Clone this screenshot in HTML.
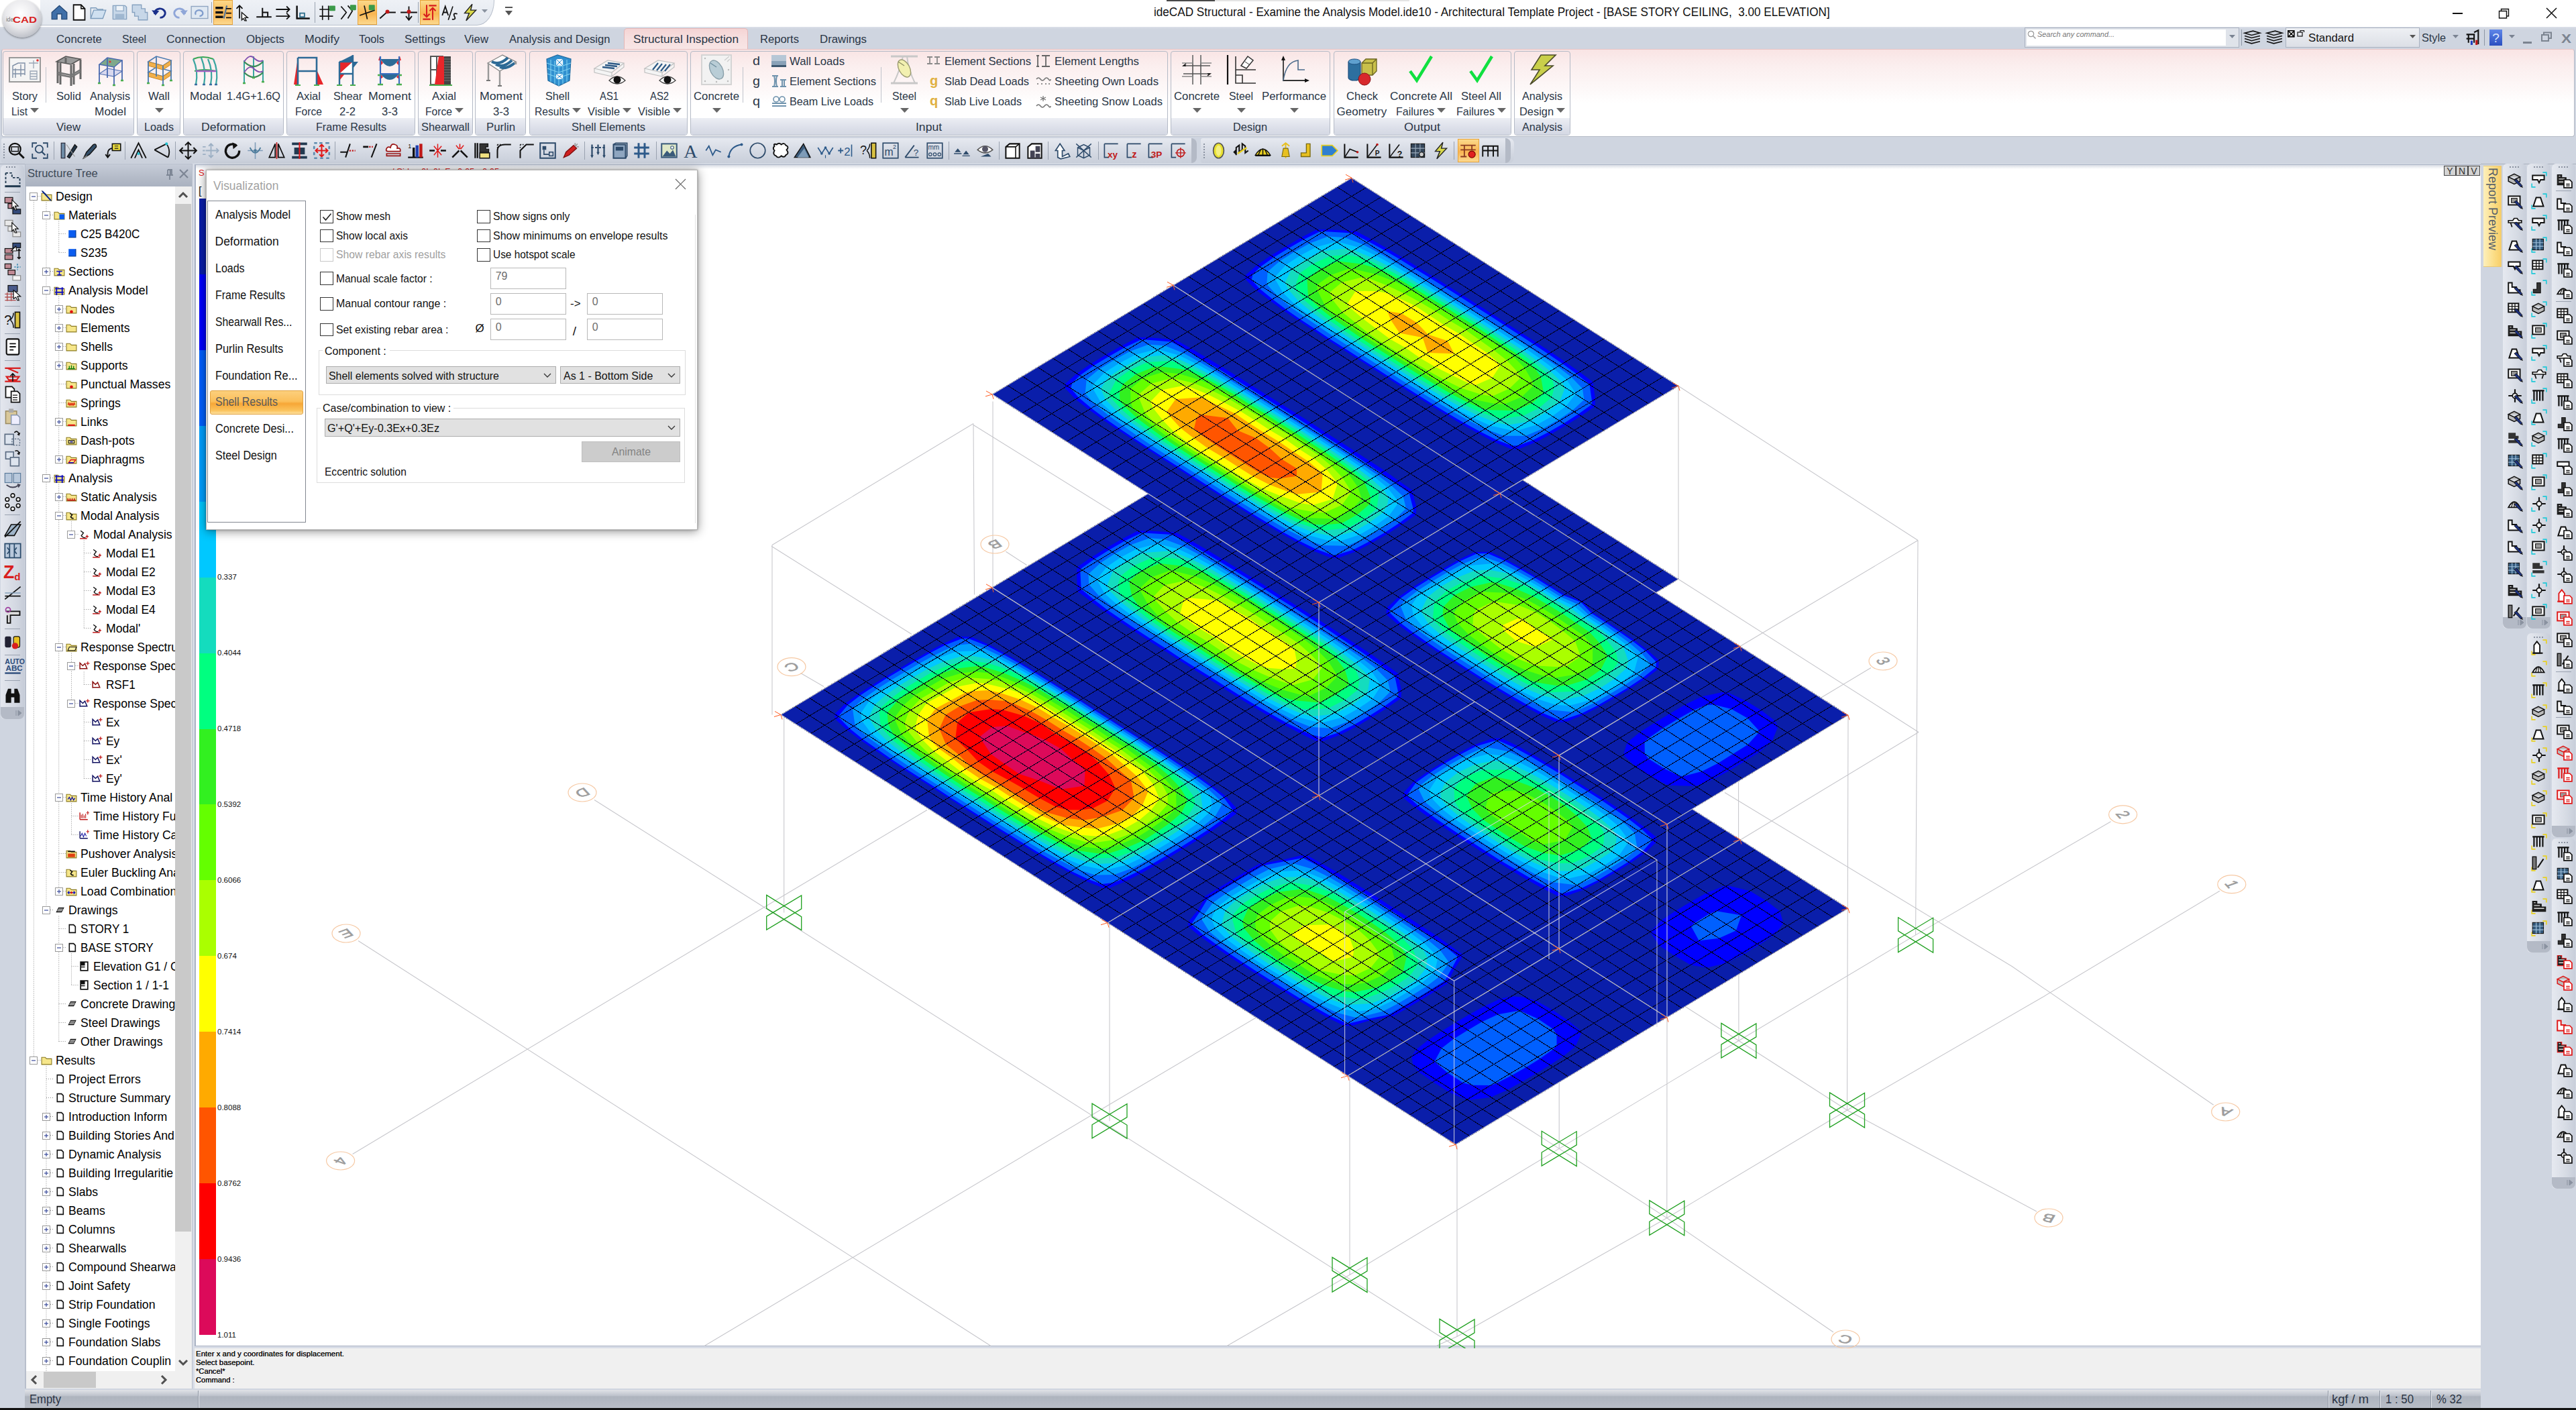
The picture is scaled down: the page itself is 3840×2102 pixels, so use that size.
<!DOCTYPE html><html><head><meta charset="utf-8"><title>ideCAD Structural</title><style>html,body{margin:0;padding:0;}body{width:3840px;height:2102px;position:relative;overflow:hidden;background:#cfd5e0;font-family:"Liberation Sans",sans-serif;}svg{overflow:visible;display:block}span{display:block}</style></head><body><div style="position:absolute;left:0px;top:0px;width:3840px;height:39.5px;background:#fff;"></div><div style="position:absolute;left:1739px;top:0px;width:72px;height:2px;background:#484848;"></div><div style="position:absolute;left:1811px;top:0px;width:290px;height:2px;background:#e4e4e4;"></div><div style="position:absolute;left:60px;top:0px;width:676px;height:37px;background:linear-gradient(#eef1f6,#e2e7ee);border-bottom:1px solid #b9c0cc;border-right:1px solid #b9c0cc;border-radius:0 0 26px 0/0 0 37px 0;"></div><svg style="position:absolute;left:75px;top:5px;" width="27" height="27" viewBox="0 0 24 24"><path d="M2 12 L12 3 L22 12 V21 H15 V14 H9 V21 H2 Z" fill="#3f6fa8" stroke="#244a78" stroke-width="1.2"/></svg><svg style="position:absolute;left:104px;top:5px;" width="27" height="27" viewBox="0 0 24 24"><path d="M5 2 H15 L20 7 V22 H5 Z" fill="#fff" stroke="#111" stroke-width="1.6"/><path d="M15 2 V7 H20" fill="none" stroke="#111" stroke-width="1.4"/></svg><svg style="position:absolute;left:133px;top:5px;" width="27" height="27" viewBox="0 0 24 24"><path d="M2 20 L6 9 H22 L18 20 Z" fill="#cfe0f0" stroke="#7c9cbc" stroke-width="1.2"/><path d="M2 20 V6 H9 L11 8 H18 V9" fill="none" stroke="#7c9cbc" stroke-width="1.2"/></svg><svg style="position:absolute;left:165px;top:5px;" width="27" height="27" viewBox="0 0 24 24"><path d="M3 3 H19 L21 5 V21 H3 Z" fill="#c7d7e8" stroke="#86a2c0" stroke-width="1.2"/><rect x="7" y="3" width="10" height="7" fill="#eef3f8" stroke="#86a2c0"/><rect x="6" y="14" width="12" height="7" fill="#9fb7d0"/></svg><svg style="position:absolute;left:195px;top:5px;" width="27" height="27" viewBox="0 0 24 24"><path d="M2 2 H14 V7 H19 V12 H22 V22 H10 V17 H5 V12 H2 Z" fill="#c7d7e8" stroke="#86a2c0" stroke-width="1.2"/></svg><svg style="position:absolute;left:225px;top:5px;" width="27" height="27" viewBox="0 0 24 24"><path d="M5 14 A7 6 0 1 1 12 19" fill="none" stroke="#1a2f8a" stroke-width="2.6"/><path d="M1 9 L6 16 L11 10 Z" fill="#1a2f8a"/></svg><svg style="position:absolute;left:254px;top:5px;" width="27" height="27" viewBox="0 0 24 24"><path d="M19 14 A7 6 0 1 0 12 19" fill="none" stroke="#8fa6d8" stroke-width="2.6"/><path d="M23 9 L18 16 L13 10 Z" fill="#8fa6d8"/></svg><svg style="position:absolute;left:284px;top:5px;" width="27" height="27" viewBox="0 0 24 24"><rect x="1" y="4" width="22" height="16" fill="#dfe8f2" stroke="#8ea4c0" stroke-width="1.2"/><path d="M7 15 A5 4 0 1 1 12 17" fill="none" stroke="#7f9ccc" stroke-width="2"/></svg><div style="position:absolute;left:315px;top:3px;width:1px;height:31px;background:#9aa3b0;"></div><div style="position:absolute;left:318px;top:0px;width:29px;height:37px;background:linear-gradient(#fbd98a,#f9b552 55%,#fcd98f);border:1px solid #e8a43c;box-sizing:border-box;"></div><div style="position:absolute;left:533px;top:0px;width:29px;height:37px;background:linear-gradient(#fbd98a,#f9b552 55%,#fcd98f);border:1px solid #e8a43c;box-sizing:border-box;"></div><div style="position:absolute;left:626px;top:0px;width:29px;height:37px;background:linear-gradient(#fbd98a,#f9b552 55%,#fcd98f);border:1px solid #e8a43c;box-sizing:border-box;"></div><div style="position:absolute;left:469px;top:3px;width:1px;height:31px;background:#9aa3b0;"></div><div style="position:absolute;left:623px;top:3px;width:1px;height:31px;background:#9aa3b0;"></div><svg style="position:absolute;left:319px;top:5px;" width="27" height="27" viewBox="0 0 24 24"><path d="M2 6 H12 M2 12 H12 M2 18 H12" stroke="#111" stroke-width="3"/><path d="M13 20 L17 3" stroke="#5a7a9a" stroke-width="2"/><path d="M16 7 H23 M16 13 H23 M16 19 H23" stroke="#111" stroke-width="1.6"/></svg><svg style="position:absolute;left:348px;top:5px;" width="27" height="27" viewBox="0 0 24 24"><path d="M8 3 V20 M4 7 L8 3 L12 7" fill="none" stroke="#111" stroke-width="1.6"/><path d="M11 12 L19 19 L15 19 L17 23 L15 23 L13 20 L11 22 Z" fill="#fff" stroke="#111" stroke-width="1.2"/></svg><svg style="position:absolute;left:380px;top:5px;" width="27" height="27" viewBox="0 0 24 24"><path d="M2 18 H22 M10 18 V6 M10 12 H17 V18" fill="none" stroke="#111" stroke-width="1.8"/></svg><svg style="position:absolute;left:408px;top:5px;" width="27" height="27" viewBox="0 0 24 24"><path d="M3 8 H21 M17 4 L21 8 L17 12 M3 17 H21 M17 13 L21 17 L17 21" fill="none" stroke="#111" stroke-width="1.6"/></svg><svg style="position:absolute;left:437px;top:5px;" width="27" height="27" viewBox="0 0 24 24"><path d="M5 3 V20 H22" fill="none" stroke="#111" stroke-width="2.2"/><rect x="9" y="13" width="6" height="5" fill="none" stroke="#2d6e8c" stroke-width="1.6"/></svg><svg style="position:absolute;left:474px;top:5px;" width="27" height="27" viewBox="0 0 24 24"><path d="M2 8 H20 M2 17 H20 M6 3 V22 M14 3 V22" stroke="#111" stroke-width="1.5"/><rect x="15" y="3" width="8" height="7" rx="1" fill="#3c9a4a"/></svg><svg style="position:absolute;left:505px;top:5px;" width="27" height="27" viewBox="0 0 24 24"><path d="M3 4 L10 12 L3 21 M12 3 L18 10 L12 20" fill="none" stroke="#111" stroke-width="1.5"/><rect x="15" y="2" width="8" height="7" rx="1" fill="#3c9a4a"/></svg><svg style="position:absolute;left:534px;top:5px;" width="27" height="27" viewBox="0 0 24 24"><path d="M2 16 L22 9 M8 3 L12 21" stroke="#111" stroke-width="1.5"/><rect x="14" y="2" width="8" height="7" rx="1" fill="#3c9a4a"/></svg><svg style="position:absolute;left:564px;top:5px;" width="27" height="27" viewBox="0 0 24 24"><path d="M2 20 L11 12 M11 12 H23" stroke="#111" stroke-width="1.6"/><circle cx="12" cy="11" r="2.6" fill="#c01818"/></svg><svg style="position:absolute;left:596px;top:5px;" width="27" height="27" viewBox="0 0 24 24"><path d="M1 12 H23 M12 4 V22 M8 17 L12 22 L16 17" fill="none" stroke="#111" stroke-width="1.6"/><circle cx="12" cy="11" r="2.6" fill="#c01818"/></svg><svg style="position:absolute;left:627px;top:5px;" width="27" height="27" viewBox="0 0 24 24"><path d="M8 2 V18 M4 14 L8 18 L12 14 M3 21 H13 M16 22 V6 M12 10 L16 6 L20 10 M11 3 H21" fill="none" stroke="#d81e1e" stroke-width="1.8"/></svg><svg style="position:absolute;left:657px;top:5px;" width="27" height="27" viewBox="0 0 24 24"><path d="M2 16 L6 4 L10 16 M3.5 12 H8.5" fill="none" stroke="#111" stroke-width="1.6"/><path d="M10 22 L16 4" stroke="#111" stroke-width="1.4"/><path d="M22 14 Q16 12 18 17 Q21 22 15 21" fill="none" stroke="#111" stroke-width="1.6"/></svg><svg style="position:absolute;left:687px;top:5px;" width="27" height="27" viewBox="0 0 24 24"><path d="M15 1 L5 13 H11 L7 23 L20 9 H13 Z" fill="#d8d84a" stroke="#222" stroke-width="1.3"/></svg><svg style="position:absolute;left:718px;top:14px;" width="10" height="7" viewBox="0 0 10 7"><path d="M0 0 H9 L4.5 5 Z" fill="#8a93a0"/></svg><svg style="position:absolute;left:752px;top:9px;" width="14" height="16" viewBox="0 0 14 16"><path d="M1 2 H12" stroke="#555" stroke-width="2"/><path d="M1 7 H12 L6.5 14 Z" fill="#555"/></svg><span style="position:absolute;left:1719.8px;top:9.3px;font-size:18px;line-height:1;white-space:pre;color:#111;transform:scaleX(0.9521);transform-origin:0 0;">ideCAD Structural - Examine the Analysis Model.ide10 - Architectural Template Project - [BASE STORY CEILING,  3.00 ELEVATION]</span><div style="position:absolute;left:3656px;top:19px;width:15px;height:1.5px;background:#111;"></div><svg style="position:absolute;left:3724px;top:12px;" width="18" height="16" viewBox="0 0 18 16"><path d="M1.5 4.5 H12.5 V15 H1.5 Z M4.5 4.5 V1.5 H15.5 V12 H12.5" fill="none" stroke="#111" stroke-width="1.4"/></svg><svg style="position:absolute;left:3795px;top:11px;" width="18" height="18" viewBox="0 0 18 18"><path d="M1 1 L16 16 M16 1 L1 16" stroke="#111" stroke-width="1.5"/></svg><div style="position:absolute;left:0px;top:39.5px;width:3840px;height:33.5px;background:linear-gradient(#dde1e9,#cfd5e0 3px);"></div><div style="position:absolute;left:930px;top:42px;width:185px;height:32px;background:linear-gradient(#f5d4d4,#f6dede 40%,#f8e6e6);border:1px solid #e3b6b6;border-bottom:none;border-radius:5px 5px 0 0;box-sizing:border-box;"></div><span style="position:absolute;left:84.4px;top:50.0px;font-size:17px;line-height:1;white-space:pre;color:#2a3646;transform:scaleX(0.9844);transform-origin:0 0;">Concrete</span><span style="position:absolute;left:182.2px;top:50.0px;font-size:17px;line-height:1;white-space:pre;color:#2a3646;transform:scaleX(0.9291);transform-origin:0 0;">Steel</span><span style="position:absolute;left:247.9px;top:50.0px;font-size:17px;line-height:1;white-space:pre;color:#2a3646;transform:scaleX(1.0233);transform-origin:0 0;">Connection</span><span style="position:absolute;left:367.0px;top:50.0px;font-size:17px;line-height:1;white-space:pre;color:#2a3646;transform:scaleX(0.9891);transform-origin:0 0;">Objects</span><span style="position:absolute;left:454.3px;top:50.0px;font-size:17px;line-height:1;white-space:pre;color:#2a3646;transform:scaleX(1.0386);transform-origin:0 0;">Modify</span><span style="position:absolute;left:535.0px;top:50.0px;font-size:17px;line-height:1;white-space:pre;color:#2a3646;transform:scaleX(0.9576);transform-origin:0 0;">Tools</span><span style="position:absolute;left:602.5px;top:50.0px;font-size:17px;line-height:1;white-space:pre;color:#2a3646;transform:scaleX(0.9931);transform-origin:0 0;">Settings</span><span style="position:absolute;left:692.4px;top:50.0px;font-size:17px;line-height:1;white-space:pre;color:#2a3646;transform:scaleX(0.9852);transform-origin:0 0;">View</span><span style="position:absolute;left:759.3px;top:50.0px;font-size:17px;line-height:1;white-space:pre;color:#2a3646;transform:scaleX(0.9771);transform-origin:0 0;">Analysis and Design</span><span style="position:absolute;left:944.0px;top:50.0px;font-size:17px;line-height:1;white-space:pre;color:#2a3646;transform:scaleX(1.0132);transform-origin:0 0;">Structural Inspection</span><span style="position:absolute;left:1133.4px;top:50.0px;font-size:17px;line-height:1;white-space:pre;color:#2a3646;transform:scaleX(0.9744);transform-origin:0 0;">Reports</span><span style="position:absolute;left:1221.5px;top:50.0px;font-size:17px;line-height:1;white-space:pre;color:#2a3646;transform:scaleX(0.9880);transform-origin:0 0;">Drawings</span><div style="position:absolute;left:3018px;top:41px;width:320px;height:30px;background:#dfe3ea;border:1px solid #aab2c0;box-sizing:border-box;"></div><div style="position:absolute;left:3021px;top:44px;width:297px;height:24px;background:#fff;"></div><svg style="position:absolute;left:3022px;top:45px;" width="14" height="14" viewBox="0 0 14 14"><circle cx="5.5" cy="5.5" r="4.2" fill="none" stroke="#999" stroke-width="1.2"/><path d="M8.5 8.5 L12.5 12.5" stroke="#999" stroke-width="1.4"/></svg><span style="position:absolute;left:3037.0px;top:46.3px;font-size:11.5px;line-height:1;white-space:pre;color:#777;font-style:italic;transform:scaleX(0.9470);transform-origin:0 0;">Search any command...</span><svg style="position:absolute;left:3323px;top:52px;" width="10" height="7" viewBox="0 0 10 7"><path d="M0 0 H9 L4.5 5 Z" fill="#7a8392"/></svg><div style="position:absolute;left:3341px;top:44px;width:1px;height:24px;background:#8d96a4;"></div><svg style="position:absolute;left:3344px;top:43px;" width="27" height="25" viewBox="0 0 26 24"><path d="M2 6 L14 3 L24 6 L12 9 Z M2 10 L12 13 L24 10 M2 14 L12 17 L24 14 M2 18 L12 21 L24 18" fill="none" stroke="#111" stroke-width="1.5"/></svg><svg style="position:absolute;left:3377px;top:43px;" width="27" height="25" viewBox="0 0 26 24"><path d="M2 6 L14 3 L24 6 L12 9 Z M2 10 L12 13 L24 10 M2 14 L12 17 L24 14 M2 18 L12 21 L24 18" fill="none" stroke="#111" stroke-width="1.5"/></svg><div style="position:absolute;left:3407px;top:41px;width:200px;height:30px;background:linear-gradient(#eef0f4,#dcdfe6);border:1px solid #aab2c0;box-sizing:border-box;"></div><svg style="position:absolute;left:3410px;top:45px;" width="11" height="11" viewBox="0 0 11 11"><rect x="0.8" y="0.8" width="9" height="9" fill="#fff" stroke="#000" stroke-width="1.6"/><path d="M1 1 L10 10 M10 1 L1 10" stroke="#000" stroke-width="1.6"/></svg><svg style="position:absolute;left:3424px;top:44px;" width="12" height="11" viewBox="0 0 12 11"><rect x="1" y="4" width="7" height="6" fill="none" stroke="#111" stroke-width="1.2"/><path d="M5 4 V1.5 H10.5 V4" fill="none" stroke="#111" stroke-width="1.2"/></svg><span style="position:absolute;left:3441.0px;top:47.6px;font-size:17px;line-height:1;white-space:pre;color:#111;transform:scaleX(0.9856);transform-origin:0 0;">Standard</span><svg style="position:absolute;left:3592px;top:52px;" width="10" height="7" viewBox="0 0 10 7"><path d="M0 0 H9 L4.5 5 Z" fill="#555"/></svg><span style="position:absolute;left:3610.0px;top:47.6px;font-size:17px;line-height:1;white-space:pre;color:#2a3646;transform:scaleX(0.9526);transform-origin:0 0;">Style</span><svg style="position:absolute;left:3656px;top:52px;" width="10" height="7" viewBox="0 0 10 7"><path d="M0 0 H9 L4.5 5 Z" fill="#7a8392"/></svg><svg style="position:absolute;left:3673px;top:43px;" width="26" height="25" viewBox="0 0 24 24"><path d="M3 8 H14 V20 M6 8 V20 M3 14 H14 M14 5 L20 2 V12 M20 12 V22" fill="none" stroke="#111" stroke-width="2"/><rect x="16" y="16" width="3" height="7" fill="#c01818"/><rect x="9" y="17" width="3" height="6" fill="#2040c0"/></svg><div style="position:absolute;left:3703px;top:44px;width:1px;height:24px;background:#8d96a4;"></div><div style="position:absolute;left:3711px;top:44px;width:19px;height:24px;background:linear-gradient(#5f86e8,#2a4fc0);"></div><span style="position:absolute;left:3715.2px;top:46.9px;font-size:19px;line-height:1;white-space:pre;color:#dfe8ff;">?</span><svg style="position:absolute;left:3740px;top:52px;" width="10" height="7" viewBox="0 0 10 7"><path d="M0 0 H9 L4.5 5 Z" fill="#7a8392"/></svg><div style="position:absolute;left:3761px;top:62px;width:13px;height:3px;background:#7c8490;"></div><svg style="position:absolute;left:3788px;top:47px;" width="17" height="16" viewBox="0 0 17 16"><path d="M1 5 H11 V14 H1 Z M4 5 V1.5 H15 V10 H11" fill="none" stroke="#7c8490" stroke-width="2"/></svg><span style="position:absolute;left:3817.5px;top:47.9px;font-size:19px;line-height:1;white-space:pre;color:#7c8490;font-weight:bold;transform:scaleX(1.1836);transform-origin:0 0;">X</span><div style="position:absolute;left:2px;top:73px;width:3836px;height:131px;background:linear-gradient(#f9e4e4 0,#fbeeee 18%,#fdf8f8 45%,#fff 62%);border:1px solid #b6bcc8;border-top-color:#e9c4c4;border-radius:4px;box-sizing:border-box;"></div><div style="position:absolute;left:4px;top:76px;width:196px;height:126px;border:1px solid #b4bac6;border-radius:4px;box-sizing:border-box;overflow:hidden;"><div style="position:absolute;left:0;right:0;bottom:0;height:25px;background:linear-gradient(#eceef4,#dcdfe9 60%,#d4d8e3);"></div></div><span style="position:absolute;left:84.0px;top:180.9px;font-size:17px;line-height:1;white-space:pre;color:#2a3646;transform:scaleX(0.9852);transform-origin:0 0;">View</span><div style="position:absolute;left:204px;top:76px;width:65px;height:126px;border:1px solid #b4bac6;border-radius:4px;box-sizing:border-box;overflow:hidden;"><div style="position:absolute;left:0;right:0;bottom:0;height:25px;background:linear-gradient(#eceef4,#dcdfe9 60%,#d4d8e3);"></div></div><span style="position:absolute;left:214.5px;top:180.9px;font-size:17px;line-height:1;white-space:pre;color:#2a3646;transform:scaleX(0.9500);transform-origin:0 0;">Loads</span><div style="position:absolute;left:273px;top:76px;width:150px;height:126px;border:1px solid #b4bac6;border-radius:4px;box-sizing:border-box;overflow:hidden;"><div style="position:absolute;left:0;right:0;bottom:0;height:25px;background:linear-gradient(#eceef4,#dcdfe9 60%,#d4d8e3);"></div></div><span style="position:absolute;left:300.0px;top:180.9px;font-size:17px;line-height:1;white-space:pre;color:#2a3646;transform:scaleX(1.0368);transform-origin:0 0;">Deformation</span><div style="position:absolute;left:427px;top:76px;width:192px;height:126px;border:1px solid #b4bac6;border-radius:4px;box-sizing:border-box;overflow:hidden;"><div style="position:absolute;left:0;right:0;bottom:0;height:25px;background:linear-gradient(#eceef4,#dcdfe9 60%,#d4d8e3);"></div></div><span style="position:absolute;left:470.5px;top:180.9px;font-size:17px;line-height:1;white-space:pre;color:#2a3646;transform:scaleX(0.9501);transform-origin:0 0;">Frame Results</span><div style="position:absolute;left:623px;top:76px;width:81.6px;height:126px;border:1px solid #b4bac6;border-radius:4px;box-sizing:border-box;overflow:hidden;"><div style="position:absolute;left:0;right:0;bottom:0;height:25px;background:linear-gradient(#eceef4,#dcdfe9 60%,#d4d8e3);"></div></div><span style="position:absolute;left:627.8px;top:180.9px;font-size:17px;line-height:1;white-space:pre;color:#2a3646;transform:scaleX(0.9646);transform-origin:0 0;">Shearwall</span><div style="position:absolute;left:708px;top:76px;width:76px;height:126px;border:1px solid #b4bac6;border-radius:4px;box-sizing:border-box;overflow:hidden;"><div style="position:absolute;left:0;right:0;bottom:0;height:25px;background:linear-gradient(#eceef4,#dcdfe9 60%,#d4d8e3);"></div></div><span style="position:absolute;left:724.5px;top:180.9px;font-size:17px;line-height:1;white-space:pre;color:#2a3646;transform:scaleX(0.9894);transform-origin:0 0;">Purlin</span><div style="position:absolute;left:788.6px;top:76px;width:236px;height:126px;border:1px solid #b4bac6;border-radius:4px;box-sizing:border-box;overflow:hidden;"><div style="position:absolute;left:0;right:0;bottom:0;height:25px;background:linear-gradient(#eceef4,#dcdfe9 60%,#d4d8e3);"></div></div><span style="position:absolute;left:851.6px;top:180.9px;font-size:17px;line-height:1;white-space:pre;color:#2a3646;transform:scaleX(0.9701);transform-origin:0 0;">Shell Elements</span><div style="position:absolute;left:1028.6px;top:76px;width:712px;height:126px;border:1px solid #b4bac6;border-radius:4px;box-sizing:border-box;overflow:hidden;"><div style="position:absolute;left:0;right:0;bottom:0;height:25px;background:linear-gradient(#eceef4,#dcdfe9 60%,#d4d8e3);"></div></div><span style="position:absolute;left:1365.1px;top:180.9px;font-size:17px;line-height:1;white-space:pre;color:#2a3646;transform:scaleX(1.0316);transform-origin:0 0;">Input</span><div style="position:absolute;left:1744.6px;top:76px;width:238.4px;height:126px;border:1px solid #b4bac6;border-radius:4px;box-sizing:border-box;overflow:hidden;"><div style="position:absolute;left:0;right:0;bottom:0;height:25px;background:linear-gradient(#eceef4,#dcdfe9 60%,#d4d8e3);"></div></div><span style="position:absolute;left:1838.3px;top:180.9px;font-size:17px;line-height:1;white-space:pre;color:#2a3646;transform:scaleX(0.9638);transform-origin:0 0;">Design</span><div style="position:absolute;left:1987.6px;top:76px;width:265.4px;height:126px;border:1px solid #b4bac6;border-radius:4px;box-sizing:border-box;overflow:hidden;"><div style="position:absolute;left:0;right:0;bottom:0;height:25px;background:linear-gradient(#eceef4,#dcdfe9 60%,#d4d8e3);"></div></div><span style="position:absolute;left:2093.3px;top:180.9px;font-size:17px;line-height:1;white-space:pre;color:#2a3646;transform:scaleX(1.0582);transform-origin:0 0;">Output</span><div style="position:absolute;left:2257.4px;top:76px;width:84px;height:126px;border:1px solid #b4bac6;border-radius:4px;box-sizing:border-box;overflow:hidden;"><div style="position:absolute;left:0;right:0;bottom:0;height:25px;background:linear-gradient(#eceef4,#dcdfe9 60%,#d4d8e3);"></div></div><span style="position:absolute;left:2269.4px;top:180.9px;font-size:17px;line-height:1;white-space:pre;color:#2a3646;transform:scaleX(0.9479);transform-origin:0 0;">Analysis</span><svg style="position:absolute;left:13px;top:80px;" width="48" height="48" viewBox="0 0 48 48"><rect x="1" y="6" width="46" height="36" fill="#f4f4f4" stroke="#9a9a9a" stroke-width="2"/><path d="M6 36 V18 L14 14 H24 V32 M6 24 H24 M6 30 H24 M10 36 V22 M18 34 V16" fill="none" stroke="#7f8fa6" stroke-width="1.4"/><path d="M30 14 H44 M37 10 V22 M32 26 H42 V38 H32 Z M32 30 H42 M32 34 H42" fill="none" stroke="#9aa6b6" stroke-width="1.3"/><circle cx="43" cy="10" r="1.8" fill="#e03030"/></svg><span style="position:absolute;left:18.0px;top:134.9px;font-size:17px;line-height:1;white-space:pre;color:#2a3646;transform:scaleX(0.9577);transform-origin:0 0;">Story</span><span style="position:absolute;left:16.5px;top:157.9px;font-size:17px;line-height:1;white-space:pre;color:#2a3646;transform:scaleX(0.9072);transform-origin:0 0;">List</span><svg style="position:absolute;left:44.5px;top:161px;" width="14" height="8" viewBox="0 0 14 8"><path d="M0 0 H13 L6.5 7 Z" fill="#666"/></svg><div style="position:absolute;left:68px;top:100px;width:1px;height:53px;background:#c0c4cc;"></div><svg style="position:absolute;left:78px;top:80px;" width="48" height="48" viewBox="0 0 48 48"><path d="M6 12 L20 4 L42 8 L28 16 Z" fill="#9a9a9a" stroke="#555" stroke-width="1.5"/><path d="M8 13 V44 M12 14 V46 M28 17 V48 M32 15 V46 M42 9 V38 M20 6 V14" stroke="#666" stroke-width="3"/><path d="M8 28 L28 32 L42 24 M8 31 L28 35 L42 27" fill="none" stroke="#777" stroke-width="2.4"/></svg><span style="position:absolute;left:83.5px;top:134.9px;font-size:17px;line-height:1;white-space:pre;color:#2a3646;transform:scaleX(0.9788);transform-origin:0 0;">Solid</span><svg style="position:absolute;left:140px;top:80px;" width="48" height="48" viewBox="0 0 48 48"><path d="M8 16 L20 6 L42 10 L30 20 Z" fill="#7fa88a" stroke="#4a6ab0" stroke-width="1.3"/><path d="M8 30 L20 22 L42 26 L30 34 Z" fill="#d6d6ee" stroke="#4a6ab0" stroke-width="1.2" opacity=".9"/><path d="M8 16 V44 M30 20 V47 M42 10 V40 M20 6 V36" stroke="#4a6ab0" stroke-width="1.8"/><circle cx="24" cy="12" r="1.5" fill="#e03030"/><path d="M6 44 H10 M28 47 H32 M40 40 H44" stroke="#4caf50" stroke-width="2.5"/></svg><span style="position:absolute;left:134.0px;top:134.9px;font-size:17px;line-height:1;white-space:pre;color:#2a3646;transform:scaleX(0.9479);transform-origin:0 0;">Analysis</span><span style="position:absolute;left:140.5px;top:157.9px;font-size:17px;line-height:1;white-space:pre;color:#2a3646;transform:scaleX(1.0152);transform-origin:0 0;">Model</span><svg style="position:absolute;left:213px;top:80px;" width="48" height="48" viewBox="0 0 48 48"><path d="M8 12 L20 4 L42 10 L30 18 Z M8 28 L20 20 L42 26 L30 34 Z" fill="none" stroke="#4a7ab0" stroke-width="1.6"/><path d="M8 12 L30 18 V24 L8 18 Z M30 18 L42 10 V16 L30 24 Z M8 28 L30 34 V40 L8 34 Z M30 34 L42 26 V32 L30 40 Z" fill="#f3b04a" stroke="#c98a2a" stroke-width="1"/><path d="M8 12 V44 M30 18 V47 M42 10 V40 M20 4 V34" stroke="#4a7ab0" stroke-width="1.8"/><path d="M6 44 H10 M28 47 H32 M40 40 H44" stroke="#4caf50" stroke-width="2.5"/></svg><span style="position:absolute;left:221.0px;top:134.9px;font-size:17px;line-height:1;white-space:pre;color:#2a3646;transform:scaleX(0.9869);transform-origin:0 0;">Wall</span><svg style="position:absolute;left:230.5px;top:161px;" width="14" height="8" viewBox="0 0 14 8"><path d="M0 0 H13 L6.5 7 Z" fill="#666"/></svg><svg style="position:absolute;left:282px;top:80px;" width="48" height="48" viewBox="0 0 48 48"><path d="M6 8 Q20 2 36 8 M8 26 Q22 22 40 26" fill="none" stroke="#3aa655" stroke-width="2.2"/><path d="M6 8 Q14 26 10 46 M18 6 Q26 26 22 46 M36 8 Q44 26 40 46 M28 8 Q36 26 32 46" fill="none" stroke="#3aa6a0" stroke-width="2.2"/><path d="M10 26 H40" stroke="#a060c0" stroke-width="2.5"/><path d="M8 46 H12 M20 46 H24 M30 46 H34 M38 46 H42" stroke="#3b6ea0" stroke-width="2.5"/></svg><span style="position:absolute;left:282.5px;top:134.9px;font-size:17px;line-height:1;white-space:pre;color:#2a3646;transform:scaleX(1.0152);transform-origin:0 0;">Modal</span><svg style="position:absolute;left:354px;top:80px;" width="48" height="48" viewBox="0 0 48 48"><path d="M10 10 V44 M38 10 V42 M24 4 V36" stroke="#3aa6a0" stroke-width="2"/><path d="M10 12 Q24 26 38 12 M10 28 Q24 42 38 28" fill="none" stroke="#3a8a55" stroke-width="2.2"/><path d="M10 12 Q18 0 24 6 Q32 14 38 10 M10 28 Q18 16 24 22 Q32 30 38 26" fill="none" stroke="#8050b0" stroke-width="1.8"/><path d="M8 44 H12 M36 42 H40 M22 36 H26" stroke="#4caf50" stroke-width="2.5"/></svg><span style="position:absolute;left:338.0px;top:134.9px;font-size:17px;line-height:1;white-space:pre;color:#2a3646;transform:scaleX(0.9565);transform-origin:0 0;">1.4G+1.6Q</span><svg style="position:absolute;left:436px;top:80px;" width="48" height="48" viewBox="0 0 48 48"><path d="M8 6 L8 46 L2 46 Z M36 24 L46 46 L36 46 Z" fill="#e8262a"/><path d="M8 6 H36 V46 M8 6 V46 M8 26 H36" fill="none" stroke="#2d6a96" stroke-width="2.6"/><path d="M4 47 H12 M32 47 H40" stroke="#4caf50" stroke-width="2"/></svg><span style="position:absolute;left:442.0px;top:134.9px;font-size:17px;line-height:1;white-space:pre;color:#2a3646;transform:scaleX(0.9770);transform-origin:0 0;">Axial</span><span style="position:absolute;left:440.0px;top:157.9px;font-size:17px;line-height:1;white-space:pre;color:#2a3646;transform:scaleX(0.9206);transform-origin:0 0;">Force</span><svg style="position:absolute;left:494px;top:80px;" width="48" height="48" viewBox="0 0 48 48"><path d="M12 12 L32 2 V12 Z" fill="#2d6a96"/><path d="M12 12 H32 L12 30 Z" fill="#e8262a"/><path d="M32 12 V30 H12 Z" fill="#fff"/><path d="M32 14 L32 30 L14 30 Z" fill="#2d6a96" opacity="0"/><path d="M12 30 V40 L20 30 Z" fill="#e8262a"/><path d="M32 12 L40 12 L32 22 Z" fill="#2d6a96"/><path d="M12 12 V46 M32 2 V46 M12 12 H32 M12 30 H32" fill="none" stroke="#2d6a96" stroke-width="2.4"/><path d="M8 47 H16 M28 47 H36" stroke="#4caf50" stroke-width="2"/></svg><span style="position:absolute;left:496.5px;top:134.9px;font-size:17px;line-height:1;white-space:pre;color:#2a3646;transform:scaleX(0.9480);transform-origin:0 0;">Shear</span><span style="position:absolute;left:506.0px;top:157.9px;font-size:17px;line-height:1;white-space:pre;color:#2a3646;transform:scaleX(0.9769);transform-origin:0 0;">2-2</span><svg style="position:absolute;left:557px;top:80px;" width="48" height="48" viewBox="0 0 48 48"><path d="M10 8 Q24 30 38 8 Z" fill="#2d6a96"/><path d="M10 30 Q24 48 38 30 Z" fill="#2d6a96"/><path d="M10 8 L14 14 L10 18 Z M38 8 L34 14 L38 18 Z M10 30 L14 35 L10 38 Z M38 30 L34 35 L38 38 Z" fill="#e8262a"/><path d="M8 10 L10 4 M38 4 L40 10" stroke="#e8262a" stroke-width="2"/><path d="M10 4 V46 M38 4 V46 M10 30 H38" fill="none" stroke="#3b6ec0" stroke-width="2.2"/><path d="M6 32 H10 M38 32 H42 M6 46 H14 M34 46 H42" stroke="#4caf50" stroke-width="2.4"/></svg><span style="position:absolute;left:549.0px;top:134.9px;font-size:17px;line-height:1;white-space:pre;color:#2a3646;transform:scaleX(1.0423);transform-origin:0 0;">Moment</span><span style="position:absolute;left:569.0px;top:157.9px;font-size:17px;line-height:1;white-space:pre;color:#2a3646;transform:scaleX(0.9769);transform-origin:0 0;">3-3</span><svg style="position:absolute;left:638px;top:80px;" width="48" height="48" viewBox="0 0 48 48"><path d="M4 4 H22 V46 H4 Z M4 24 H22 M13 4 V46" fill="#fff" stroke="#555" stroke-width="2"/><path d="M22 4 H34 V46 H22 Z" fill="#444"/><path d="M22 8 H34 M22 12 H34 M22 16 H34 M22 20 H34 M22 24 H34 M22 28 H34 M22 32 H34 M22 36 H34 M22 40 H34" stroke="#777" stroke-width="1"/><path d="M16 4 H24 V46 H10 Z" fill="#e8262a"/><path d="M2 47 H36" stroke="#4caf50" stroke-width="2"/></svg><span style="position:absolute;left:644.0px;top:134.9px;font-size:17px;line-height:1;white-space:pre;color:#2a3646;transform:scaleX(0.9770);transform-origin:0 0;">Axial</span><span style="position:absolute;left:633.5px;top:157.9px;font-size:17px;line-height:1;white-space:pre;color:#2a3646;transform:scaleX(0.9206);transform-origin:0 0;">Force</span><svg style="position:absolute;left:677.5px;top:161px;" width="14" height="8" viewBox="0 0 14 8"><path d="M0 0 H13 L6.5 7 Z" fill="#666"/></svg><svg style="position:absolute;left:722.5px;top:80px;" width="48" height="48" viewBox="0 0 48 48"><path d="M4 14 L26 2 L46 12 L22 26 Z" fill="#fff" stroke="#888" stroke-width="1.4"/><path d="M10 12 Q22 18 34 6 M16 16 Q28 22 40 10 M22 20 Q32 24 44 14" fill="none" stroke="#2d6a96" stroke-width="4"/><path d="M5 14 V40 M22 26 V48 M46 12 V16" stroke="#999" stroke-width="2.4"/><path d="M2 40 H8 M19 48 H25" stroke="#777" stroke-width="2"/></svg><span style="position:absolute;left:714.5px;top:134.9px;font-size:17px;line-height:1;white-space:pre;color:#2a3646;transform:scaleX(1.0423);transform-origin:0 0;">Moment</span><span style="position:absolute;left:734.5px;top:157.9px;font-size:17px;line-height:1;white-space:pre;color:#2a3646;transform:scaleX(0.9769);transform-origin:0 0;">3-3</span><svg style="position:absolute;left:807px;top:80px;" width="48" height="48" viewBox="0 0 48 48"><path d="M8 8 L24 2 L44 8 L42 40 L26 48 L10 40 Z" fill="#2f8fcf" stroke="#1f6a9f" stroke-width="1.2"/><path d="M8 14 L26 20 L44 14 M9 22 L26 28 L43 22 M9 30 L26 36 L43 30 M14 9 V42 M20 11 V45 M32 11 V45 M38 9 V42 M26 12 V48" stroke="#7fd0f0" stroke-width="1.1" fill="none"/><path d="M22 8 H32 V18 H22 Z M22 30 H32 V38 H22 Z" fill="#fff" opacity=".9"/><path d="M22 8 L32 18 M32 8 L22 18 M22 30 L32 38 M32 30 L22 38" stroke="#2f8fcf" stroke-width="1"/></svg><span style="position:absolute;left:813.0px;top:134.9px;font-size:17px;line-height:1;white-space:pre;color:#2a3646;transform:scaleX(0.9524);transform-origin:0 0;">Shell</span><span style="position:absolute;left:796.5px;top:157.9px;font-size:17px;line-height:1;white-space:pre;color:#2a3646;transform:scaleX(0.9174);transform-origin:0 0;">Results</span><svg style="position:absolute;left:852.5px;top:161px;" width="14" height="8" viewBox="0 0 14 8"><path d="M0 0 H13 L6.5 7 Z" fill="#666"/></svg><svg style="position:absolute;left:884px;top:80px;" width="48" height="48" viewBox="0 0 48 48"><path d="M2 22 L22 10 L46 14 L28 28 Z M2 22 V28 L28 34 V28 M28 34 L46 20 V14" fill="#f4f4f4" stroke="#c0c0c0" stroke-width="1.2"/><path d="M14 20 L32 22 M18 17 L36 19 M22 14 L40 16" stroke="#2d5a86" stroke-width="2.4"/><path d="M24 40 Q36 28 48 40 Q36 50 24 40 Z" fill="#fff" stroke="#444" stroke-width="1.3"/><circle cx="36" cy="39" r="5.5" fill="#111"/></svg><span style="position:absolute;left:894.0px;top:134.9px;font-size:17px;line-height:1;white-space:pre;color:#2a3646;transform:scaleX(0.8714);transform-origin:0 0;">AS1</span><span style="position:absolute;left:875.5px;top:157.9px;font-size:17px;line-height:1;white-space:pre;color:#2a3646;transform:scaleX(0.9644);transform-origin:0 0;">Visible</span><svg style="position:absolute;left:927.5px;top:161px;" width="14" height="8" viewBox="0 0 14 8"><path d="M0 0 H13 L6.5 7 Z" fill="#666"/></svg><svg style="position:absolute;left:959px;top:80px;" width="48" height="48" viewBox="0 0 48 48"><path d="M2 22 L22 10 L46 14 L28 28 Z M2 22 V28 L28 34 V28 M28 34 L46 20 V14" fill="#f4f4f4" stroke="#c0c0c0" stroke-width="1.2"/><path d="M14 24 L22 14 M20 25 L28 15 M26 26 L34 16 M32 26 L40 16" stroke="#2d5a86" stroke-width="2.2"/><path d="M24 40 Q36 28 48 40 Q36 50 24 40 Z" fill="#fff" stroke="#444" stroke-width="1.3"/><circle cx="36" cy="39" r="5.5" fill="#111"/></svg><span style="position:absolute;left:969.0px;top:134.9px;font-size:17px;line-height:1;white-space:pre;color:#2a3646;transform:scaleX(0.8714);transform-origin:0 0;">AS2</span><span style="position:absolute;left:950.5px;top:157.9px;font-size:17px;line-height:1;white-space:pre;color:#2a3646;transform:scaleX(0.9644);transform-origin:0 0;">Visible</span><svg style="position:absolute;left:1002.5px;top:161px;" width="14" height="8" viewBox="0 0 14 8"><path d="M0 0 H13 L6.5 7 Z" fill="#666"/></svg><svg style="position:absolute;left:1044px;top:80px;" width="48" height="48" viewBox="0 0 48 48"><rect x="2" y="2" width="44" height="44" fill="#f2f2f2" stroke="#d4d4d4" stroke-width="2"/><ellipse cx="24" cy="24" rx="9" ry="15" transform="rotate(-28 24 24)" fill="#b9cdd6" stroke="#8aa0aa" stroke-width="1.4"/><path d="M15 14 L24 20" stroke="#6a8a9a" stroke-width="1.2"/><circle cx="7" cy="7" r="1.2" fill="#bbb"/><circle cx="41" cy="41" r="1.2" fill="#bbb"/><circle cx="7" cy="41" r="1.2" fill="#bbb"/><circle cx="24" cy="42" r="1.2" fill="#bbb"/><circle cx="42" cy="24" r="1.2" fill="#bbb"/><path d="M36 10 L43 4 M40 12 L44 8" stroke="#ccc" stroke-width="1.2"/></svg><span style="position:absolute;left:1034.0px;top:134.9px;font-size:17px;line-height:1;white-space:pre;color:#2a3646;transform:scaleX(0.9859);transform-origin:0 0;">Concrete</span><svg style="position:absolute;left:1061.5px;top:161px;" width="14" height="8" viewBox="0 0 14 8"><path d="M0 0 H13 L6.5 7 Z" fill="#666"/></svg><div style="position:absolute;left:1107px;top:100px;width:1px;height:53px;background:#c0c4cc;"></div><span style="position:absolute;left:1122.0px;top:82.2px;font-size:18px;line-height:1;white-space:pre;color:#2a3646;transform:scaleX(1.0989);transform-origin:0 0;">d</span><svg style="position:absolute;left:1150px;top:80.4px;" width="23" height="22" viewBox="0 0 23 22"><rect x="0" y="2" width="22" height="18" fill="#8aa2b8"/><rect x="0" y="2" width="22" height="9" fill="#b7c7d6"/><rect x="0" y="17" width="22" height="3" fill="#3d5870"/></svg><span style="position:absolute;left:1177.4px;top:83.0px;font-size:17px;line-height:1;white-space:pre;color:#2a3646;transform:scaleX(0.9825);transform-origin:0 0;">Wall Loads</span><span style="position:absolute;left:1122.0px;top:112.1px;font-size:18px;line-height:1;white-space:pre;color:#2a3646;transform:scaleX(1.0989);transform-origin:0 0;">g</span><svg style="position:absolute;left:1150px;top:110.3px;" width="23" height="22" viewBox="0 0 23 22"><path d="M1 3 H10 M1 19 H10 M4 3 Q6 11 4 19 M8 3 Q6 11 8 19 M13 9 H22 M13 19 H22 M16 9 V19 M19 9 V19" fill="none" stroke="#6f93ad" stroke-width="2"/></svg><span style="position:absolute;left:1177.4px;top:112.9px;font-size:17px;line-height:1;white-space:pre;color:#2a3646;transform:scaleX(0.9752);transform-origin:0 0;">Element Sections</span><span style="position:absolute;left:1122.0px;top:142.0px;font-size:18px;line-height:1;white-space:pre;color:#2a3646;transform:scaleX(1.0989);transform-origin:0 0;">q</span><svg style="position:absolute;left:1150px;top:140.2px;" width="23" height="22" viewBox="0 0 23 22"><path d="M1 18 H22 M1 14 H22" stroke="#6f93ad" stroke-width="2"/><circle cx="7" cy="8" r="4" fill="none" stroke="#6f93ad" stroke-width="1.6"/><circle cx="16" cy="8" r="4" fill="none" stroke="#6f93ad" stroke-width="1.6"/></svg><span style="position:absolute;left:1177.4px;top:142.8px;font-size:17px;line-height:1;white-space:pre;color:#2a3646;transform:scaleX(0.9516);transform-origin:0 0;">Beam Live Loads</span><div style="position:absolute;left:1313px;top:100px;width:1px;height:53px;background:#c0c4cc;"></div><svg style="position:absolute;left:1324px;top:80px;" width="48" height="48" viewBox="0 0 48 48"><path d="M4 4 H44 M4 44 H44" stroke="#c8c8c8" stroke-width="3"/><path d="M22 4 Q18 24 8 44 M28 4 Q30 24 40 44" fill="none" stroke="#c8c8c8" stroke-width="2"/><ellipse cx="24" cy="22" rx="8" ry="14" transform="rotate(-28 24 22)" fill="#f2f0b0" stroke="#9a9a70" stroke-width="1.4"/><path d="M15 12 L24 18" stroke="#8a8a60" stroke-width="1.2"/></svg><span style="position:absolute;left:1330.0px;top:134.9px;font-size:17px;line-height:1;white-space:pre;color:#2a3646;transform:scaleX(0.9291);transform-origin:0 0;">Steel</span><svg style="position:absolute;left:1341.5px;top:161px;" width="14" height="8" viewBox="0 0 14 8"><path d="M0 0 H13 L6.5 7 Z" fill="#666"/></svg><svg style="position:absolute;left:1381px;top:80.4px;" width="23" height="22" viewBox="0 0 23 22"><path d="M1 5 H9 M1 15 H9 M5 5 V15 M12 5 H20 M12 15 H20 M16 5 V15" stroke="#8a8a8a" stroke-width="1.8"/></svg><span style="position:absolute;left:1407.7px;top:83.0px;font-size:17px;line-height:1;white-space:pre;color:#2a3646;transform:scaleX(0.9752);transform-origin:0 0;">Element Sections</span><svg style="position:absolute;left:1381px;top:110.3px;" width="23" height="22" viewBox="0 0 23 22"><text x="5" y="17" font-size="20" font-weight="bold" fill="#e0b040" font-family="Liberation Sans,sans-serif">g</text></svg><span style="position:absolute;left:1407.7px;top:112.9px;font-size:17px;line-height:1;white-space:pre;color:#2a3646;transform:scaleX(0.9661);transform-origin:0 0;">Slab Dead Loads</span><svg style="position:absolute;left:1381px;top:140.2px;" width="23" height="22" viewBox="0 0 23 22"><text x="5" y="17" font-size="20" font-weight="bold" fill="#e0b040" font-family="Liberation Sans,sans-serif">q</text></svg><span style="position:absolute;left:1407.7px;top:142.8px;font-size:17px;line-height:1;white-space:pre;color:#2a3646;transform:scaleX(0.9507);transform-origin:0 0;">Slab Live Loads</span><svg style="position:absolute;left:1544px;top:80.4px;" width="23" height="22" viewBox="0 0 23 22"><path d="M3 3 V19 M1 3 H5 M1 19 H5 M9 3 H21 M9 19 H21 M15 3 V19" stroke="#666" stroke-width="1.8"/></svg><span style="position:absolute;left:1571.7px;top:83.0px;font-size:17px;line-height:1;white-space:pre;color:#2a3646;transform:scaleX(0.9877);transform-origin:0 0;">Element Lengths</span><svg style="position:absolute;left:1544px;top:110.3px;" width="23" height="22" viewBox="0 0 23 22"><path d="M1 8 Q4 4 7 8 T13 8 T19 8 T22 8" fill="none" stroke="#777" stroke-width="1.6"/><path d="M3 14 V16 M9 14 V16 M15 14 V16 M20 14 V16" stroke="#777" stroke-width="1.6"/></svg><span style="position:absolute;left:1571.7px;top:112.9px;font-size:17px;line-height:1;white-space:pre;color:#2a3646;transform:scaleX(0.9821);transform-origin:0 0;">Sheeting Own Loads</span><svg style="position:absolute;left:1544px;top:140.2px;" width="23" height="22" viewBox="0 0 23 22"><path d="M1 18 Q4 14 7 18 T13 18 T19 18 T22 18" fill="none" stroke="#777" stroke-width="1.6"/><path d="M11 3 V11 M7 5 L15 9 M15 5 L7 9" stroke="#777" stroke-width="1.3"/></svg><span style="position:absolute;left:1571.7px;top:142.8px;font-size:17px;line-height:1;white-space:pre;color:#2a3646;transform:scaleX(0.9734);transform-origin:0 0;">Sheeting Snow Loads</span><svg style="position:absolute;left:1760px;top:80px;" width="48" height="48" viewBox="0 0 48 48"><path d="M4 18 H44 M4 30 H44 M18 2 V46 M30 2 V46" stroke="#555" stroke-width="1.6"/><path d="M2 14 H18 V2 M46 14 H30 V2 M2 34 H18 V46 M46 34 H30 V46" fill="none" stroke="#888" stroke-width="1.4"/><path d="M8 18 L4 18 L8 15 M40 30 L44 30 L40 33" stroke="#111" stroke-width="1.4" fill="none"/></svg><span style="position:absolute;left:1750.0px;top:134.9px;font-size:17px;line-height:1;white-space:pre;color:#2a3646;transform:scaleX(0.9859);transform-origin:0 0;">Concrete</span><svg style="position:absolute;left:1777.5px;top:161px;" width="14" height="8" viewBox="0 0 14 8"><path d="M0 0 H13 L6.5 7 Z" fill="#666"/></svg><svg style="position:absolute;left:1826px;top:80px;" width="48" height="48" viewBox="0 0 48 48"><path d="M4 2 V46" stroke="#111" stroke-width="2.2"/><path d="M16 4 V44 H46 M16 24 H46 M16 32 H26 V44" fill="none" stroke="#333" stroke-width="1.6"/><path d="M24 18 L34 4 L42 10 L32 22 Z" fill="#fff" stroke="#333" stroke-width="1.5"/><path d="M30 12 L36 16" stroke="#333"/></svg><span style="position:absolute;left:1832.0px;top:134.9px;font-size:17px;line-height:1;white-space:pre;color:#2a3646;transform:scaleX(0.9291);transform-origin:0 0;">Steel</span><svg style="position:absolute;left:1843.5px;top:161px;" width="14" height="8" viewBox="0 0 14 8"><path d="M0 0 H13 L6.5 7 Z" fill="#666"/></svg><svg style="position:absolute;left:1905px;top:80px;" width="48" height="48" viewBox="0 0 48 48"><path d="M8 6 V40 H44" fill="none" stroke="#333" stroke-width="1.8"/><path d="M5 10 L8 3 L11 10 Z M40 37 L47 40 L40 43 Z" fill="#111"/><path d="M8 40 Q12 12 30 10 V24 H40" fill="none" stroke="#4a6a8a" stroke-width="1.6"/></svg><span style="position:absolute;left:1881.0px;top:134.9px;font-size:17px;line-height:1;white-space:pre;color:#2a3646;transform:scaleX(0.9865);transform-origin:0 0;">Performance</span><svg style="position:absolute;left:1922.5px;top:161px;" width="14" height="8" viewBox="0 0 14 8"><path d="M0 0 H13 L6.5 7 Z" fill="#666"/></svg><svg style="position:absolute;left:2006px;top:80px;" width="48" height="48" viewBox="0 0 48 48"><path d="M4 12 V36 A9 4 0 0 0 22 36 V12" fill="#2d6f9f" stroke="#1d4f7f" stroke-width="1.2"/><ellipse cx="13" cy="12" rx="9" ry="4" fill="#5fa0cf" stroke="#1d4f7f"/><path d="M24 14 L30 8 H46 V26 L40 32 H24 Z" fill="#c9c04a" stroke="#6a6420" stroke-width="1.3"/><path d="M24 14 H40 V32 M40 14 L46 8" fill="none" stroke="#6a6420" stroke-width="1.3"/><circle cx="28" cy="38" r="9" fill="#d8282c" stroke="#8a1418"/></svg><span style="position:absolute;left:2006.5px;top:134.9px;font-size:17px;line-height:1;white-space:pre;color:#2a3646;transform:scaleX(0.9754);transform-origin:0 0;">Check</span><span style="position:absolute;left:1992.5px;top:157.9px;font-size:17px;line-height:1;white-space:pre;color:#2a3646;">Geometry</span><svg style="position:absolute;left:2094px;top:80px;" width="48" height="48" viewBox="0 0 48 48"><path d="M8 26 L18 40 L40 4" fill="none" stroke="#10e040" stroke-width="4.5"/></svg><span style="position:absolute;left:2071.5px;top:134.9px;font-size:17px;line-height:1;white-space:pre;color:#2a3646;transform:scaleX(1.0147);transform-origin:0 0;">Concrete All</span><span style="position:absolute;left:2081.0px;top:157.9px;font-size:17px;line-height:1;white-space:pre;color:#2a3646;transform:scaleX(0.9428);transform-origin:0 0;">Failures</span><svg style="position:absolute;left:2142px;top:161px;" width="14" height="8" viewBox="0 0 14 8"><path d="M0 0 H13 L6.5 7 Z" fill="#666"/></svg><svg style="position:absolute;left:2183.7px;top:80px;" width="48" height="48" viewBox="0 0 48 48"><path d="M8 26 L18 40 L40 4" fill="none" stroke="#10e040" stroke-width="4.5"/></svg><span style="position:absolute;left:2177.7px;top:134.9px;font-size:17px;line-height:1;white-space:pre;color:#2a3646;transform:scaleX(0.9768);transform-origin:0 0;">Steel All</span><span style="position:absolute;left:2170.7px;top:157.9px;font-size:17px;line-height:1;white-space:pre;color:#2a3646;transform:scaleX(0.9428);transform-origin:0 0;">Failures</span><svg style="position:absolute;left:2231.7px;top:161px;" width="14" height="8" viewBox="0 0 14 8"><path d="M0 0 H13 L6.5 7 Z" fill="#666"/></svg><svg style="position:absolute;left:2274.6px;top:80px;" width="48" height="48" viewBox="0 0 48 48"><path d="M22 2 L44 2 L28 18 L40 18 L6 46 L20 24 L8 24 Z" fill="#c9cf4a" stroke="#4a4a2a" stroke-width="1.6"/></svg><span style="position:absolute;left:2268.6px;top:134.9px;font-size:17px;line-height:1;white-space:pre;color:#2a3646;transform:scaleX(0.9479);transform-origin:0 0;">Analysis</span><span style="position:absolute;left:2264.6px;top:157.9px;font-size:17px;line-height:1;white-space:pre;color:#2a3646;transform:scaleX(0.9638);transform-origin:0 0;">Design</span><svg style="position:absolute;left:2319.6px;top:161px;" width="14" height="8" viewBox="0 0 14 8"><path d="M0 0 H13 L6.5 7 Z" fill="#666"/></svg><div style="position:absolute;left:4px;top:0px;width:58px;height:56px;border-radius:50%;background:radial-gradient(circle at 45% 35%,#ffffff 0%,#e9e9ec 45%,#b9bcc4 80%,#8e939e 100%);box-shadow:0 1px 3px rgba(0,0,0,.45);"></div><span style="position:absolute;left:9.0px;top:25.4px;font-size:9px;line-height:1;white-space:pre;color:#777;transform:scaleX(0.9160);transform-origin:0 0;">ide</span><span style="position:absolute;left:19.0px;top:23.0px;font-size:13px;line-height:1;white-space:pre;color:#d81e1e;font-weight:bold;transform:scaleX(1.2782);transform-origin:0 0;">CAD</span><div style="position:absolute;left:0px;top:204px;width:3840px;height:41px;background:#cfd5e0;border-bottom:1px solid #aab1be;box-sizing:border-box;"></div><div style="position:absolute;left:2px;top:206px;width:1782px;height:37px;background:linear-gradient(#e6e9f0,#d3d8e2 60%,#c9cfda);border-radius:3px 8px 8px 3px;"></div><div style="position:absolute;left:1790px;top:206px;width:467px;height:37px;background:linear-gradient(#e6e9f0,#d3d8e2 60%,#c9cfda);border-radius:3px 8px 8px 3px;"></div><div style="position:absolute;left:1776px;top:206px;width:8px;height:37px;background:#b4bac6;border-radius:0 8px 8px 0;"></div><div style="position:absolute;left:2244px;top:206px;width:8px;height:37px;background:#b4bac6;border-radius:0 8px 8px 0;"></div><div style="position:absolute;left:5px;top:214px;width:2px;height:2px;background:#8b93a1;"></div><div style="position:absolute;left:5px;top:218px;width:2px;height:2px;background:#8b93a1;"></div><div style="position:absolute;left:5px;top:222px;width:2px;height:2px;background:#8b93a1;"></div><div style="position:absolute;left:5px;top:226px;width:2px;height:2px;background:#8b93a1;"></div><div style="position:absolute;left:5px;top:230px;width:2px;height:2px;background:#8b93a1;"></div><div style="position:absolute;left:5px;top:234px;width:2px;height:2px;background:#8b93a1;"></div><div style="position:absolute;left:1794px;top:214px;width:2px;height:2px;background:#8b93a1;"></div><div style="position:absolute;left:1794px;top:218px;width:2px;height:2px;background:#8b93a1;"></div><div style="position:absolute;left:1794px;top:222px;width:2px;height:2px;background:#8b93a1;"></div><div style="position:absolute;left:1794px;top:226px;width:2px;height:2px;background:#8b93a1;"></div><div style="position:absolute;left:1794px;top:230px;width:2px;height:2px;background:#8b93a1;"></div><div style="position:absolute;left:1794px;top:234px;width:2px;height:2px;background:#8b93a1;"></div><div style="position:absolute;left:79.5031px;top:211px;width:1px;height:27px;background:#9aa2b0;"></div><div style="position:absolute;left:186.335px;top:211px;width:1px;height:27px;background:#9aa2b0;"></div><div style="position:absolute;left:260.87px;top:211px;width:1px;height:27px;background:#9aa2b0;"></div><div style="position:absolute;left:499.379px;top:211px;width:1px;height:27px;background:#9aa2b0;"></div><div style="position:absolute;left:871.056px;top:211px;width:1px;height:27px;background:#9aa2b0;"></div><div style="position:absolute;left:977.888px;top:211px;width:1px;height:27px;background:#9aa2b0;"></div><div style="position:absolute;left:1414.16px;top:211px;width:1px;height:27px;background:#9aa2b0;"></div><div style="position:absolute;left:1488.7px;top:211px;width:1px;height:27px;background:#9aa2b0;"></div><div style="position:absolute;left:1562.24px;top:211px;width:1px;height:27px;background:#9aa2b0;"></div><div style="position:absolute;left:1636.77px;top:211px;width:1px;height:27px;background:#9aa2b0;"></div><div style="position:absolute;left:2166.96px;top:211px;width:1px;height:27px;background:#9aa2b0;"></div><div style="position:absolute;left:2172.92px;top:207px;width:32px;height:35px;background:linear-gradient(#fbd98a,#f9b552 55%,#fcd98f);border:1px solid #e8a43c;box-sizing:border-box;"></div><svg style="position:absolute;left:10.8509px;top:211px;" width="27" height="27" viewBox="0 0 24 24"><circle cx="10" cy="10" r="7.5" fill="none" stroke="#111" stroke-width="2"/><path d="M15.5 15.5 L22 22" stroke="#111" stroke-width="2.6"/><rect x="5.5" y="7" width="9" height="6" fill="none" stroke="#111" stroke-width="1.3"/></svg><svg style="position:absolute;left:45.6335px;top:211px;" width="27" height="27" viewBox="0 0 24 24"><path d="M2 8 V2 H8 M16 2 H22 V8 M22 16 V22 H16 M8 22 H2 V16" fill="none" stroke="#2d4a6a" stroke-width="1.6"/><circle cx="11" cy="10" r="5" fill="none" stroke="#2d4a6a" stroke-width="1.6"/><path d="M14.5 13.5 L19 18" stroke="#2d4a6a" stroke-width="2"/></svg><svg style="position:absolute;left:88.8634px;top:211px;" width="27" height="27" viewBox="0 0 24 24"><rect x="2" y="2" width="5" height="20" fill="#6f8ca6" stroke="#223" stroke-width="1"/><path d="M10 20 L20 4 L23 7 L13 22 Z" fill="#234" stroke="#111"/><path d="M9 4 L20 20" stroke="#999" stroke-width="1"/></svg><svg style="position:absolute;left:120.168px;top:211px;" width="27" height="27" viewBox="0 0 24 24"><path d="M4 22 L8 14 L17 4 Q21 2 21 7 L12 17 Z" fill="#334e68" stroke="#111" stroke-width="1.2"/><path d="M4 22 L9 19" stroke="#777" stroke-width="2"/></svg><svg style="position:absolute;left:154.95px;top:211px;" width="27" height="27" viewBox="0 0 24 24"><rect x="11" y="3" width="11" height="9" fill="#f0e040" stroke="#111" stroke-width="1.4"/><path d="M14 6 H19 M14 9 H19" stroke="#111"/><path d="M11 9 Q4 9 5 20 M2 17 L5 21 L8 17" fill="none" stroke="#111" stroke-width="1.6"/></svg><svg style="position:absolute;left:193.211px;top:211px;" width="27" height="27" viewBox="0 0 24 24"><path d="M2 22 L12 2 L22 22 M7 22 L12 11 L17 22" fill="none" stroke="#111" stroke-width="1.6"/><circle cx="12" cy="16" r="1.8" fill="#20c0d0"/></svg><svg style="position:absolute;left:227.994px;top:211px;" width="27" height="27" viewBox="0 0 24 24"><path d="M2 11 L18 3 M2 11 L20 21 M18 3 Q24 12 20 21" fill="none" stroke="#111" stroke-width="1.6"/><circle cx="18" cy="3" r="1.8" fill="#20c0d0"/></svg><svg style="position:absolute;left:266.752px;top:211px;" width="27" height="27" viewBox="0 0 24 24"><path d="M12 1 V23 M1 12 H23 M8 5 L12 1 L16 5 M8 19 L12 23 L16 19 M5 8 L1 12 L5 16 M19 8 L23 12 L19 16" fill="none" stroke="#111" stroke-width="1.8"/></svg><svg style="position:absolute;left:301.037px;top:211px;" width="27" height="27" viewBox="0 0 24 24"><path d="M12 3 V21 M5 12 H22 M9 6 L12 3 L15 6 M9 18 L12 21 L15 18 M19 9 L22 12 L19 15 M1 7 H5 M1 12 H4 M1 17 H5" fill="none" stroke="#9db0c4" stroke-width="1.6"/></svg><svg style="position:absolute;left:333.335px;top:211px;" width="27" height="27" viewBox="0 0 24 24"><path d="M17 5 A9 9 0 1 0 21 12" fill="none" stroke="#111" stroke-width="3"/><path d="M12 1 L19 5 L13 10 Z" fill="#111"/></svg><svg style="position:absolute;left:367.124px;top:211px;" width="27" height="27" viewBox="0 0 24 24"><path d="M12 1 V23 M2 12 H22" stroke="#7f9cb8" stroke-width="1.4"/><path d="M5 8 Q12 22 19 8" fill="none" stroke="#4a7a9a" stroke-width="1.6"/><circle cx="12" cy="12" r="2" fill="#4a7a9a"/></svg><svg style="position:absolute;left:399.422px;top:211px;" width="27" height="27" viewBox="0 0 24 24"><path d="M10 3 V21 H2 Z M14 3 V21 H22 Z" fill="none" stroke="#111" stroke-width="1.5"/><path d="M12 1 V23" stroke="#c01818" stroke-width="1.5"/></svg><svg style="position:absolute;left:432.714px;top:211px;" width="27" height="27" viewBox="0 0 24 24"><path d="M2 3 H22 M2 21 H22" stroke="#223a50" stroke-width="3.5"/><rect x="5" y="8" width="14" height="9" fill="#223a50"/><path d="M12 1 V23" stroke="#e01818" stroke-width="1.8"/></svg><svg style="position:absolute;left:465.509px;top:211px;" width="27" height="27" viewBox="0 0 24 24"><path d="M12 4 V20 M4 12 H20 M9 7 L12 4 L15 7 M9 17 L12 20 L15 17 M7 9 L4 12 L7 15 M17 9 L20 12 L17 15" fill="none" stroke="#e01818" stroke-width="1.8"/><path d="M2 2 H6 M9 2 H13 M17 2 H22 M2 22 H6 M10 22 H14 M18 22 H22 M2 6 V10 M2 14 V18 M22 6 V10 M22 14 V18" stroke="#5f8cae" stroke-width="2.4"/></svg><svg style="position:absolute;left:505.261px;top:211px;" width="27" height="27" viewBox="0 0 24 24"><path d="M2 14 H11 M9 21 L15 3" stroke="#111" stroke-width="1.8"/><path d="M14 12 H22" stroke="#c01818" stroke-width="2" stroke-dasharray="2 1.5"/></svg><svg style="position:absolute;left:538.553px;top:211px;" width="27" height="27" viewBox="0 0 24 24"><path d="M2 7 H9" stroke="#111" stroke-width="2.4"/><path d="M10 7 H15" stroke="#c01818" stroke-width="2" stroke-dasharray="2 1.5"/><path d="M13 21 L20 3" stroke="#111" stroke-width="1.8"/></svg><svg style="position:absolute;left:573.335px;top:211px;" width="27" height="27" viewBox="0 0 24 24"><path d="M5 13 Q1 13 3 9 Q5 6 8 8 Q9 2 14 4 Q18 5 17 9 Q22 8 21 13 Z" fill="#fff" stroke="#9a1414" stroke-width="1.6"/><path d="M3 16 H21 V19 H3 Z" fill="none" stroke="#9a1414" stroke-width="1.5"/></svg><svg style="position:absolute;left:605.634px;top:211px;" width="27" height="27" viewBox="0 0 24 24"><path d="M2 21 H22" stroke="#111" stroke-width="2"/><rect x="8" y="8" width="3" height="13" fill="#111"/><rect x="12" y="5" width="4" height="16" fill="#2040b0"/><rect x="17" y="3" width="4" height="18" fill="#c01818"/><text x="2" y="9" font-size="8" fill="#111" font-family="Liberation Sans,sans-serif">1</text></svg><svg style="position:absolute;left:638.925px;top:211px;" width="27" height="27" viewBox="0 0 24 24"><path d="M1 12 H8 M16 12 H23" stroke="#111" stroke-width="2.4"/><path d="M12 3 V21 M7 6 L17 18 M17 6 L7 18" stroke="#e01818" stroke-width="1.3"/></svg><svg style="position:absolute;left:671.72px;top:211px;" width="27" height="27" viewBox="0 0 24 24"><path d="M2 21 L11 12 M22 21 L13 12" stroke="#111" stroke-width="2.2"/><path d="M12 3 V10 M7 5 L11 10 M17 5 L13 10" stroke="#e01818" stroke-width="1.4"/></svg><svg style="position:absolute;left:705.012px;top:211px;" width="27" height="27" viewBox="0 0 24 24"><path d="M3 2 V22 M6 2 V22" stroke="#111" stroke-width="2"/><path d="M9 3 H20 V7 H17 V10 H21 V14 H9 Z" fill="#333" stroke="#111"/><rect x="9" y="15" width="13" height="7" fill="#f0e080" stroke="#111" stroke-width="1.4"/></svg><svg style="position:absolute;left:737.311px;top:211px;" width="27" height="27" viewBox="0 0 24 24"><path d="M4 22 V12 Q4 4 14 4 H22" fill="none" stroke="#111" stroke-width="1.8"/><path d="M4 4 H10 M4 4 V9" stroke="#111" stroke-width="1.2" stroke-dasharray="1.5 1.5"/></svg><svg style="position:absolute;left:770.602px;top:211px;" width="27" height="27" viewBox="0 0 24 24"><path d="M4 22 V12 L12 4 H22" fill="none" stroke="#111" stroke-width="1.8"/><path d="M4 4 H10 M4 4 V9" stroke="#111" stroke-width="1.2" stroke-dasharray="1.5 1.5"/></svg><svg style="position:absolute;left:802.901px;top:211px;" width="27" height="27" viewBox="0 0 24 24"><rect x="2" y="2" width="20" height="20" fill="none" stroke="#2d4a6a" stroke-width="1.8"/><rect x="5" y="6" width="5" height="5" fill="#2d4a6a"/><rect x="14" y="14" width="5" height="5" fill="none" stroke="#2d4a6a" stroke-width="1.4"/><path d="M7 11 V17 H14" fill="none" stroke="#2d4a6a" stroke-width="1.4"/></svg><svg style="position:absolute;left:836.689px;top:211px;" width="27" height="27" viewBox="0 0 24 24"><path d="M3 21 L6 14 L16 5 L20 9 L10 18 Z" fill="#d02020" stroke="#801010" stroke-width="1.2"/><path d="M18 2 V6 M21 3 L19 6 M23 7 H20" stroke="#888" stroke-width="1.2"/></svg><svg style="position:absolute;left:877.932px;top:211px;" width="27" height="27" viewBox="0 0 24 24"><path d="M3 8 H21" stroke="#2d4a6a" stroke-width="1.6" stroke-dasharray="3 2"/><path d="M4 4 V20 M12 4 V16 M20 4 V20" stroke="#2d4a6a" stroke-width="2"/><path d="M2 18 L4 22 L6 18 M10 14 L12 18 L14 14 M18 18 L20 22 L22 18" fill="#2d4a6a"/></svg><svg style="position:absolute;left:910.23px;top:211px;" width="27" height="27" viewBox="0 0 24 24"><path d="M4 4 H20 V22 H4 Z" fill="#8fa6c0" stroke="#2d4a6a" stroke-width="1.8"/><path d="M4 4 L7 2 H22 V19 L20 22" fill="none" stroke="#2d4a6a" stroke-width="1.4"/><rect x="7" y="7" width="10" height="5" fill="#2d4a6a"/></svg><svg style="position:absolute;left:942.528px;top:211px;" width="27" height="27" viewBox="0 0 24 24"><path d="M2 8 H22 M2 16 H22 M8 2 V22 M16 2 V22" stroke="#2d5a8a" stroke-width="2.6"/></svg><svg style="position:absolute;left:984.267px;top:211px;" width="27" height="27" viewBox="0 0 24 24"><rect x="2" y="3" width="20" height="18" fill="#dfe8c8" stroke="#3a5a7a" stroke-width="1.8"/><path d="M3 20 L9 12 L13 16 L17 11 L21 20 Z" fill="#3a5a7a"/><circle cx="16" cy="8" r="2" fill="#fff" stroke="#3a5a7a"/></svg><svg style="position:absolute;left:1017.06px;top:211px;" width="27" height="27" viewBox="0 0 24 24"><text x="2" y="21" font-size="25" font-family="Liberation Serif,serif" fill="#2d4a6a">A</text></svg><svg style="position:absolute;left:1050.35px;top:211px;" width="27" height="27" viewBox="0 0 24 24"><path d="M2 12 L6 6 L11 18 L15 11 L22 14" fill="none" stroke="#2d5a8a" stroke-width="1.6"/></svg><svg style="position:absolute;left:1082.65px;top:211px;" width="27" height="27" viewBox="0 0 24 24"><path d="M3 20 Q5 6 20 4" fill="none" stroke="#2d5a8a" stroke-width="1.8"/><circle cx="3" cy="20" r="1.8" fill="#2d5a8a"/><circle cx="20" cy="4" r="1.8" fill="#2d5a8a"/></svg><svg style="position:absolute;left:1116.44px;top:211px;" width="27" height="27" viewBox="0 0 24 24"><circle cx="12" cy="12" r="10" fill="none" stroke="#2d4a6a" stroke-width="1.5"/></svg><svg style="position:absolute;left:1149.73px;top:211px;" width="27" height="27" viewBox="0 0 24 24"><path d="M4 6 Q2 2 7 4 Q10 1 13 4 Q17 1 19 5 Q24 7 20 11 Q24 16 19 18 Q17 22 13 19 Q9 23 6 19 Q1 17 4 12 Q1 9 4 6 Z" fill="#fff" stroke="#111" stroke-width="1.7"/></svg><svg style="position:absolute;left:1182.03px;top:211px;" width="27" height="27" viewBox="0 0 24 24"><path d="M2 21 L14 3 L23 21 Z" fill="#3a5a7a" stroke="#111" stroke-width="1.3"/><path d="M6 21 L15 9 L21 21" fill="#7f9cb8"/></svg><svg style="position:absolute;left:1216.81px;top:211px;" width="27" height="27" viewBox="0 0 24 24"><path d="M2 8 L7 16 L12 8 L17 16 L22 8" fill="none" stroke="#2d5a8a" stroke-width="1.5"/><circle cx="7" cy="16" r="1.6" fill="#2d5a8a"/><circle cx="12" cy="8" r="1.6" fill="#2d5a8a"/><circle cx="17" cy="16" r="1.6" fill="#2d5a8a"/><path d="M12 18 V22" stroke="#2d5a8a"/></svg><svg style="position:absolute;left:1246.63px;top:211px;" width="27" height="27" viewBox="0 0 24 24"><path d="M2 12 H9 M5.5 8.5 V15.5" stroke="#2d5a8a" stroke-width="1.6"/><text x="10" y="19" font-size="15" fill="#2d5a8a" font-family="Liberation Sans,sans-serif">2</text><path d="M20 4 V20" stroke="#2d5a8a" stroke-width="1.4"/></svg><svg style="position:absolute;left:1281.91px;top:211px;" width="27" height="27" viewBox="0 0 24 24"><text x="0" y="17" font-size="16" fill="#111" font-family="Liberation Sans,sans-serif">?</text><path d="M9 12 Q13 8 13 3 M9 12 Q13 16 13 22" fill="none" stroke="#111" stroke-width="1.3"/><rect x="15" y="2" width="6" height="20" fill="#d8c040" stroke="#111" stroke-width="1.4"/></svg><svg style="position:absolute;left:1314.2px;top:211px;" width="27" height="27" viewBox="0 0 24 24"><rect x="2" y="2" width="20" height="20" fill="none" stroke="#2d4a6a" stroke-width="1.5"/><text x="4" y="19" font-size="14" fill="#2d4a6a" font-family="Liberation Sans,sans-serif">m</text><text x="15" y="10" font-size="8" fill="#2d4a6a" font-family="Liberation Sans,sans-serif">2</text></svg><svg style="position:absolute;left:1346.5px;top:211px;" width="27" height="27" viewBox="0 0 24 24"><path d="M2 21 H20 M2 21 L14 5" fill="none" stroke="#2d4a6a" stroke-width="1.6"/><text x="13" y="19" font-size="12" fill="#2d4a6a" font-family="Liberation Sans,sans-serif">?</text></svg><svg style="position:absolute;left:1380.29px;top:211px;" width="27" height="27" viewBox="0 0 24 24"><rect x="2" y="2" width="20" height="20" fill="none" stroke="#2d4a6a" stroke-width="1.5"/><text x="3" y="11" font-size="9" fill="#2d4a6a" font-family="Liberation Sans,sans-serif">mm</text><circle cx="6" cy="17" r="2" fill="none" stroke="#2d4a6a"/><circle cx="12" cy="17" r="2" fill="none" stroke="#2d4a6a"/><circle cx="18" cy="17" r="2" fill="none" stroke="#2d4a6a"/></svg><svg style="position:absolute;left:1421.04px;top:211px;" width="27" height="27" viewBox="0 0 24 24"><path d="M2 14 H10 L6 9 Z M13 17 H21 L17 12 Z" fill="#2d4a6a"/><path d="M1 16 H11 M12 19 H22" stroke="#2d4a6a" stroke-width="1.2"/></svg><svg style="position:absolute;left:1454.83px;top:211px;" width="27" height="27" viewBox="0 0 24 24"><path d="M2 11 Q12 1 22 11 Q12 19 2 11 Z" fill="#fff" stroke="#555" stroke-width="1.4"/><circle cx="12" cy="10" r="4" fill="#556"/><path d="M6 20 H20 L16 16 Z" fill="#2d4a6a"/></svg><svg style="position:absolute;left:1495.57px;top:211px;" width="27" height="27" viewBox="0 0 24 24"><path d="M3 22 V7 L8 3 H21 V22 Z" fill="#fff" stroke="#111" stroke-width="1.8"/><path d="M3 7 H16 V22 M16 7 L21 3" fill="none" stroke="#111" stroke-width="1.4"/></svg><svg style="position:absolute;left:1528.86px;top:211px;" width="27" height="27" viewBox="0 0 24 24"><path d="M3 22 V7 L8 3 H21 V22 Z" fill="#fff" stroke="#111" stroke-width="1.8"/><rect x="6" y="12" width="6" height="10" fill="#445"/><rect x="13" y="6" width="6" height="8" fill="#445"/><rect x="13" y="16" width="6" height="6" fill="#445"/></svg><svg style="position:absolute;left:1570.11px;top:211px;" width="27" height="27" viewBox="0 0 24 24"><path d="M3 12 L9 3 L15 12 H12 V20 L20 16 L22 20 L10 23 L6 21 V12 Z" fill="#fff" stroke="#2d4a6a" stroke-width="1.5"/></svg><svg style="position:absolute;left:1602.4px;top:211px;" width="27" height="27" viewBox="0 0 24 24"><path d="M4 8 L12 4 L20 8 V18 L12 22 L4 18 Z M4 8 L12 12 L20 8 M12 12 V22" fill="none" stroke="#2d4a6a" stroke-width="1.3"/><path d="M2 3 L22 21 M22 3 L2 21" stroke="#2d4a6a" stroke-width="1.2"/></svg><svg style="position:absolute;left:1643.15px;top:211px;" width="27" height="27" viewBox="0 0 24 24"><path d="M3 3 V21 H9 M3 3 H21" fill="none" stroke="#2d4a6a" stroke-width="1.5"/><text x="7" y="21" font-size="12" font-weight="bold" fill="#c01818" font-family="Liberation Sans,sans-serif">xy</text></svg><svg style="position:absolute;left:1676.94px;top:211px;" width="27" height="27" viewBox="0 0 24 24"><path d="M3 3 V21 H9 M3 3 H21" fill="none" stroke="#2d4a6a" stroke-width="1.5"/><text x="9" y="21" font-size="13" font-weight="bold" fill="#c01818" font-family="Liberation Sans,sans-serif">z</text></svg><svg style="position:absolute;left:1709.24px;top:211px;" width="27" height="27" viewBox="0 0 24 24"><path d="M3 3 V21 H9 M3 3 H21" fill="none" stroke="#2d4a6a" stroke-width="1.5"/><text x="6" y="21" font-size="12" font-weight="bold" fill="#c01818" font-family="Liberation Sans,sans-serif">3P</text></svg><svg style="position:absolute;left:1742.53px;top:211px;" width="27" height="27" viewBox="0 0 24 24"><path d="M3 3 V21 H9 M3 3 H21" fill="none" stroke="#2d4a6a" stroke-width="1.5"/><circle cx="15" cy="15" r="5" fill="none" stroke="#c01818" stroke-width="1.5"/><path d="M15 8 V22 M8 15 H22" stroke="#c01818" stroke-width="1.2"/></svg><svg style="position:absolute;left:1802.65px;top:211px;" width="27" height="27" viewBox="0 0 24 24"><ellipse cx="12" cy="12" rx="7" ry="10" fill="#e8e030" stroke="#555" stroke-width="1.5"/><ellipse cx="12" cy="12" rx="3.5" ry="7" fill="#f4f080"/></svg><svg style="position:absolute;left:1835.94px;top:211px;" width="27" height="27" viewBox="0 0 24 24"><path d="M2 14 L6 10 V18 Z" fill="#111"/><path d="M6 18 V8 L10 5 V14 L14 11 V3 L18 6 V15 L22 12" fill="none" stroke="#111" stroke-width="1.8"/><path d="M8 16 L20 8" stroke="#e8d020" stroke-width="2.2"/></svg><svg style="position:absolute;left:1869.24px;top:211px;" width="27" height="27" viewBox="0 0 24 24"><path d="M2 18 Q12 2 22 18 Z" fill="#e8d020" stroke="#111" stroke-width="1.2"/><path d="M6 18 L9 11 M12 18 V9 M18 18 L15 11 M2 19 H22" stroke="#111" stroke-width="1.3"/></svg><svg style="position:absolute;left:1903.02px;top:211px;" width="27" height="27" viewBox="0 0 24 24"><path d="M12 2 V22 M7 6 L12 2 L17 6" fill="none" stroke="#e8c020" stroke-width="1.8"/><path d="M9 9 H15 L17 20 H7 Z" fill="#e8c020" stroke="#7a6a10"/></svg><svg style="position:absolute;left:1935.32px;top:211px;" width="27" height="27" viewBox="0 0 24 24"><path d="M16 3 V20 H4 V15 H11 V3 Z" fill="#e8c020" stroke="#7a6a10" stroke-width="1.2"/></svg><svg style="position:absolute;left:1967.62px;top:211px;" width="27" height="27" viewBox="0 0 24 24"><path d="M2 5 H16 L23 12 L16 19 H2 Z" fill="#2f7fd0" stroke="#e8d020" stroke-width="1.5"/></svg><svg style="position:absolute;left:2001.41px;top:211px;" width="27" height="27" viewBox="0 0 24 24"><path d="M3 3 V21 H21" fill="none" stroke="#111" stroke-width="1.8"/><path d="M3 21 L10 10 L20 14" fill="none" stroke="#111" stroke-width="1.4"/><circle cx="20" cy="14" r="1.6" fill="#c01818"/></svg><svg style="position:absolute;left:2034.7px;top:211px;" width="27" height="27" viewBox="0 0 24 24"><path d="M3 3 V21 H21" fill="none" stroke="#111" stroke-width="1.8"/><path d="M3 21 L16 4" stroke="#111" stroke-width="1.4"/><circle cx="16" cy="4" r="1.6" fill="#c01818"/><text x="13" y="19" font-size="9" font-weight="bold" fill="#111" font-family="Liberation Sans,sans-serif">P</text></svg><svg style="position:absolute;left:2067.99px;top:211px;" width="27" height="27" viewBox="0 0 24 24"><path d="M3 3 V21 H21" fill="none" stroke="#111" stroke-width="1.8"/><path d="M3 21 L16 4" stroke="#111" stroke-width="1.4"/><text x="13" y="20" font-size="11" font-weight="bold" fill="#111" font-family="Liberation Sans,sans-serif">?</text></svg><svg style="position:absolute;left:2100.29px;top:211px;" width="27" height="27" viewBox="0 0 24 24"><rect x="3" y="3" width="18" height="18" fill="#34465a" stroke="#111"/><path d="M3 9 H21 M3 15 H21 M9 3 V21 M15 3 V21" stroke="#9ab" stroke-width="1"/><circle cx="17" cy="17" r="3" fill="#ccc" stroke="#111"/></svg><svg style="position:absolute;left:2134.08px;top:211px;" width="27" height="27" viewBox="0 0 24 24"><path d="M15 1 L5 13 H11 L7 23 L20 9 H13 Z" fill="#d8d84a" stroke="#222" stroke-width="1.3"/></svg><svg style="position:absolute;left:2175.32px;top:211px;" width="27" height="27" viewBox="0 0 24 24"><path d="M2 5 H22 M2 11 H22 M2 20 H10 M7 5 V20 M17 5 V11" stroke="#8a3a20" stroke-width="1.6"/><circle cx="17" cy="17" r="4.5" fill="#e02020" stroke="#700"/></svg><svg style="position:absolute;left:2207.62px;top:211px;" width="27" height="27" viewBox="0 0 24 24"><path d="M2 6 H22 V20 M2 6 V20 M2 12 H22 M9 6 V20 M16 6 V20" fill="none" stroke="#111" stroke-width="1.7"/></svg><div style="position:absolute;left:0px;top:245px;width:37px;height:1826px;background:#cfd5e0;"></div><div style="position:absolute;left:1px;top:246px;width:35px;height:826px;background:linear-gradient(90deg,#e4e7ee,#d2d7e1 70%,#c6ccd8);border-radius:6px 6px 6px 6px;"></div><div style="position:absolute;left:1px;top:1054px;width:35px;height:18px;background:#b4bac6;border-radius:0 0 8px 8px;"></div><svg style="position:absolute;left:23px;top:1059px;" width="10" height="9" viewBox="0 0 10 9"><path d="M1 0 V8 M4 0 L9 4 L4 8 Z" fill="#8a92a0" stroke="#8a92a0"/></svg><div style="position:absolute;left:9px;top:248px;width:2px;height:2px;background:#8b93a1;"></div><div style="position:absolute;left:13px;top:248px;width:2px;height:2px;background:#8b93a1;"></div><div style="position:absolute;left:17px;top:248px;width:2px;height:2px;background:#8b93a1;"></div><div style="position:absolute;left:21px;top:248px;width:2px;height:2px;background:#8b93a1;"></div><svg style="position:absolute;left:5px;top:252px;" width="28" height="28" viewBox="0 0 24 24"><path d="M3 5 H11 V11 H21 V19" fill="none" stroke="#223a50" stroke-width="1.6" stroke-dasharray="3 2"/><path d="M2 22 H22" stroke="#223a50" stroke-width="2.6"/><path d="M3 5 V19" stroke="#223a50" stroke-width="1.6" stroke-dasharray="3 2"/></svg><svg style="position:absolute;left:5px;top:292px;" width="28" height="28" viewBox="0 0 24 24"><rect x="2" y="2" width="10" height="7" fill="#c08a94" stroke="#111"/><rect x="6" y="10" width="10" height="6" fill="#c08a94" stroke="#111"/><rect x="12" y="17" width="10" height="6" fill="#334a7a" stroke="#111"/><path d="M11 5 L19 13 L15 13 L17 18 L15 18 L13 14 L11 16 Z" fill="#fff" stroke="#111"/></svg><svg style="position:absolute;left:5px;top:326px;" width="28" height="28" viewBox="0 0 24 24"><rect x="2" y="2" width="10" height="7" fill="#e8e8e8" stroke="#888"/><rect x="6" y="10" width="10" height="6" fill="#e8e8e8" stroke="#888"/><rect x="12" y="17" width="10" height="6" fill="#e8e8e8" stroke="#888"/><path d="M11 5 L19 13 L15 13 L17 18 L15 18 L13 14 L11 16 Z" fill="#fff" stroke="#111"/></svg><svg style="position:absolute;left:5px;top:360px;" width="28" height="28" viewBox="0 0 24 24"><rect x="12" y="2" width="10" height="6" fill="#334a7a" stroke="#111"/><rect x="2" y="9" width="10" height="6" fill="#c08a94" stroke="#111"/><rect x="2" y="17" width="10" height="6" fill="#c08a94" stroke="#111"/><path d="M20 10 V22 M18 12 L20 10 L22 12 M18 20 L20 22 L22 20" fill="none" stroke="#111" stroke-width="1.4"/><path d="M10 12 L16 6 L17 12 Z" fill="#fff" stroke="#111"/></svg><svg style="position:absolute;left:5px;top:391px;" width="28" height="28" viewBox="0 0 24 24"><rect x="2" y="2" width="8" height="6" fill="#c08a94" stroke="#111"/><rect x="6" y="10" width="9" height="6" fill="#c08a94" stroke="#111"/><rect x="12" y="17" width="10" height="6" fill="#f4f4f4" stroke="#888"/><path d="M18 2 V10 M14 6 H22" stroke="#3a8ab0" stroke-width="1.4" stroke-dasharray="2 1.5"/></svg><svg style="position:absolute;left:5px;top:422px;" width="28" height="28" viewBox="0 0 24 24"><rect x="6" y="3" width="12" height="8" fill="#4a5a8a" stroke="#111"/><path d="M2 14 H16 M2 18 H16 M2 22 H16 M5 12 V23 M10 12 V23" stroke="#b05050" stroke-width="1.2"/><path d="M13 9 L22 17 L18 17 L20 22 L18 22 L16 18 L13 20 Z" fill="#fff" stroke="#111"/></svg><svg style="position:absolute;left:5px;top:463px;" width="28" height="28" viewBox="0 0 24 24"><text x="1" y="18" font-size="17" fill="#111" font-family="Liberation Sans,sans-serif">?</text><path d="M9 12 Q13 8 13 3 M9 12 Q13 16 13 22" fill="none" stroke="#111" stroke-width="1.3"/><rect x="15" y="2" width="6" height="20" fill="#d8c040" stroke="#111" stroke-width="1.4"/></svg><svg style="position:absolute;left:5px;top:503px;" width="28" height="28" viewBox="0 0 24 24"><rect x="4" y="2" width="16" height="20" rx="2" fill="#fff" stroke="#111" stroke-width="1.8"/><path d="M8 8 H16 M8 12 H16 M8 16 H13" stroke="#111" stroke-width="1.6"/></svg><svg style="position:absolute;left:5px;top:543px;" width="28" height="28" viewBox="0 0 24 24"><path d="M2 5 H22 M5 5 L19 11 M2 22 H22 M4 16 H20 L17 20 H7 Z" fill="none" stroke="#d81e1e" stroke-width="1.8"/><path d="M12 12 V22 M9 15 L12 12 L15 15" fill="none" stroke="#111" stroke-width="1.4"/></svg><svg style="position:absolute;left:5px;top:574px;" width="28" height="28" viewBox="0 0 24 24"><path d="M3 2 H11 L14 5 V16 H3 Z" fill="#fff" stroke="#111" stroke-width="1.5"/><path d="M10 8 H18 L21 11 V22 H10 Z" fill="#fff" stroke="#111" stroke-width="1.5"/><path d="M12 13 H18 M12 16 H18 M12 19 H18" stroke="#111"/></svg><svg style="position:absolute;left:5px;top:607px;" width="28" height="28" viewBox="0 0 24 24"><rect x="3" y="5" width="14" height="16" fill="#d9c89a" stroke="#9a8a60" stroke-width="1.3"/><rect x="7" y="2" width="6" height="5" fill="#aaa"/><path d="M10 10 H18 L21 13 V22 H10 Z" fill="#eef" stroke="#8a98b0" stroke-width="1.3"/></svg><svg style="position:absolute;left:5px;top:638px;" width="28" height="28" viewBox="0 0 24 24"><rect x="2" y="8" width="11" height="13" fill="#dde4ee" stroke="#5a6a80" stroke-width="1.4"/><rect x="11" y="14" width="10" height="8" fill="none" stroke="#5a6a80" stroke-dasharray="2 1.5"/><path d="M14 6 Q18 2 20 8 M18 8 L20 9 L21 6" fill="none" stroke="#111" stroke-width="1.3"/></svg><svg style="position:absolute;left:5px;top:669px;" width="28" height="28" viewBox="0 0 24 24"><rect x="3" y="4" width="10" height="9" fill="#dde4ee" stroke="#5a6a80" stroke-width="1.4"/><rect x="9" y="11" width="11" height="11" fill="#dde4ee" stroke="#5a6a80" stroke-width="1.4"/><path d="M15 3 Q19 1 20 6 M18 6 L20 7 L21 4" fill="none" stroke="#111" stroke-width="1.3"/></svg><svg style="position:absolute;left:5px;top:702px;" width="28" height="28" viewBox="0 0 24 24"><rect x="2" y="3" width="9" height="12" fill="#b9c9dc" stroke="#5a7a9a"/><rect x="13" y="3" width="9" height="12" fill="#b9c9dc" stroke="#5a7a9a"/><path d="M4 18 Q12 24 20 18 M18 17 L21 18 L19 21" fill="none" stroke="#445" stroke-width="1.5"/></svg><svg style="position:absolute;left:5px;top:734px;" width="28" height="28" viewBox="0 0 24 24"><circle cx="12" cy="4" r="2.4" fill="#fff" stroke="#111" stroke-width="1.4"/><circle cx="5" cy="9" r="2.4" fill="#fff" stroke="#111" stroke-width="1.4"/><circle cx="19" cy="9" r="2.4" fill="#fff" stroke="#111" stroke-width="1.4"/><circle cx="5" cy="17" r="2.4" fill="#fff" stroke="#111" stroke-width="1.4"/><circle cx="19" cy="17" r="2.4" fill="#fff" stroke="#111" stroke-width="1.4"/><circle cx="12" cy="21" r="2.4" fill="#fff" stroke="#111" stroke-width="1.4"/></svg><svg style="position:absolute;left:5px;top:775px;" width="28" height="28" viewBox="0 0 24 24"><path d="M2 20 L10 6 H22 L14 20 Z" fill="#9fb4c8" stroke="#111" stroke-width="1.4"/><path d="M2 22 L22 2" stroke="#111" stroke-width="1.5"/></svg><svg style="position:absolute;left:5px;top:807px;" width="28" height="28" viewBox="0 0 24 24"><rect x="2" y="3" width="20" height="18" fill="#b9c9dc" stroke="#2a4a6a" stroke-width="1.5"/><path d="M8 3 V21 M14 3 V21 M5 8 L8 12 L5 16 M17 8 L14 12 L17 16" fill="none" stroke="#2a4a6a" stroke-width="1.4"/></svg><svg style="position:absolute;left:5px;top:838.5px;" width="28" height="28" viewBox="0 0 24 24"><text x="0" y="20" font-size="23" font-weight="bold" fill="#d81e1e" font-family="Liberation Sans,sans-serif">Z</text><text x="14" y="22" font-size="13" font-weight="bold" fill="#d81e1e" font-family="Liberation Sans,sans-serif">d</text></svg><svg style="position:absolute;left:5px;top:870px;" width="28" height="28" viewBox="0 0 24 24"><path d="M2 16 H22 M2 20 L22 4" stroke="#111" stroke-width="1.5"/><path d="M2 12 H22" stroke="#7f9cb8" stroke-width="1.2"/></svg><svg style="position:absolute;left:5px;top:901.7px;" width="28" height="28" viewBox="0 0 24 24"><path d="M3 8 H21 V13 H9 V23 H5 V13" fill="#ddd" stroke="#111" stroke-width="1.6"/><circle cx="6" cy="6" r="3" fill="none" stroke="#a040a0" stroke-width="1.5"/></svg><svg style="position:absolute;left:5px;top:942.8px;" width="28" height="28" viewBox="0 0 24 24"><rect x="2" y="5" width="8" height="14" rx="2" fill="#223" /><rect x="13" y="5" width="8" height="14" rx="2" fill="#e8c020" stroke="#111"/><circle cx="15" cy="17" r="4" fill="#d81e1e"/></svg><svg style="position:absolute;left:5px;top:979px;" width="28" height="28" viewBox="0 0 24 24"><text x="2" y="9" font-size="9" font-weight="bold" fill="#2a4a7a" font-family="Liberation Sans,sans-serif">AUTO</text><text x="3" y="18" font-size="10" font-weight="bold" fill="#2a4a7a" font-family="Liberation Sans,sans-serif">ABC</text><path d="M2 21 H22" stroke="#2a4a7a" stroke-width="2"/></svg><svg style="position:absolute;left:5px;top:1022px;" width="28" height="28" viewBox="0 0 24 24"><path d="M3 22 V12 L6 4 H10 V22 Z M21 22 V12 L18 4 H14 V22 Z" fill="#111"/><rect x="9" y="10" width="6" height="5" fill="#111"/></svg><div style="position:absolute;left:7px;top:285.5px;width:23px;height:1px;background:#9aa2b0;"></div><div style="position:absolute;left:7px;top:456px;width:23px;height:1px;background:#9aa2b0;"></div><div style="position:absolute;left:7px;top:496.7px;width:23px;height:1px;background:#9aa2b0;"></div><div style="position:absolute;left:7px;top:536.6px;width:23px;height:1px;background:#9aa2b0;"></div><div style="position:absolute;left:7px;top:767px;width:23px;height:1px;background:#9aa2b0;"></div><div style="position:absolute;left:7px;top:936.7px;width:23px;height:1px;background:#9aa2b0;"></div><div style="position:absolute;left:7px;top:975.6px;width:23px;height:1px;background:#9aa2b0;"></div><div style="position:absolute;left:7px;top:1014px;width:23px;height:1px;background:#9aa2b0;"></div><div style="position:absolute;left:287px;top:244px;width:3411px;height:1827px;background:#d7dce6;"></div><div style="position:absolute;left:290px;top:245px;width:3408px;height:1762px;background:#aab3c4;"></div><div style="position:absolute;left:292px;top:245.5px;width:3405.5px;height:1760.5px;background:linear-gradient(#d9dde5,#fff 6px);"></div><svg style="position:absolute;left:292px;top:246.5px" width="3405" height="1759.5" viewBox="292 246.5 3405 1759.5"><path d="M886.0 1192.0 L1139.0 1352.0M1139.0 1352.0 L2169.0 2006.0M534.0 1402.0 L1477.0 2006.0M525.6 1720.0 L1139.0 1352.0M1139.0 1352.0 L1382.0 1207.0M1050.0 2006.0 L1654.0 1646.0M1654.0 1646.0 L1880.0 1512.0M2714.0 1040.0 L2789.0 995.0M1829.0 2006.0 L2012.0 1900.0M2012.0 1900.0 L2324.2 1711.9M2324.2 1711.9 L2591.9 1551.0M2591.9 1551.0 L2855.6 1393.4M2855.6 1393.4 L3146.6 1224.3M2141.0 2006.0 L2172.0 1992.0M2172.0 1992.0 L2484.8 1815.2M2484.8 1815.2 L2753.5 1654.5M2753.5 1654.5 L3046.7 1485.0M3046.7 1485.0 L3308.8 1327.7M3299.7 1646.7 L2999.0 1440.0M2999.0 1440.0 L2571.0 1181.0M3036.0 1805.5 L2753.5 1654.5M2753.5 1654.5 L2591.9 1551.0M2591.9 1551.0 L2512.0 1500.0M1499.4 821.7 L1530.6 842.0M2733.0 1985.5 L2484.8 1815.2M2484.8 1815.2 L2324.2 1711.9M2324.2 1711.9 L2244.7 1661.0M1193.6 1003.0 L1228.0 1023.0M1168.7 1360.0 L1168.7 1068.0M1654.0 1670.7 L1654.0 1377.0M2012.0 1900.0 L2012.0 1605.0M2172.0 1992.0 L2172.0 1707.0M2324.2 1711.9 L2324.2 1613.0M2484.8 1815.2 L2485.0 1517.0M2591.9 1551.0 L2591.9 1452.0M2753.5 1654.5 L2755.0 1066.0M2855.6 1393.4 L2859.0 805.0M2591.6 1253.0 L2591.6 1165.0M2502.0 575.0 L2859.0 805.0M2859.0 805.0 L2594.0 963.0M2502.0 863.0 L2860.0 1091.0M2860.0 1091.0 L2592.0 1253.0M2502.0 575.0 L2502.0 863.0M1151.0 1065.0 L1151.0 812.0M1151.0 812.0 L1451.0 631.0M1451.0 631.0 L1452.5 886.0M1451.0 633.0 L1661.6 764.0M1150.0 813.8 L1359.0 945.0M1480.0 598.0 L1480.0 876.0" fill="none" stroke="#c6c6cb" stroke-width="1.05"/><polygon points="1142.7,1333.9 1194.7,1366.1 1194.7,1386.1 1142.7,1353.9" fill="none" stroke="#1fa01f" stroke-width="1.3"/><polygon points="1142.7,1365.6 1194.7,1334.4 1194.7,1354.4 1142.7,1385.6" fill="none" stroke="#1fa01f" stroke-width="1.3"/><polygon points="1628.0,1644.6 1680.0,1676.8 1680.0,1696.8 1628.0,1664.6" fill="none" stroke="#1fa01f" stroke-width="1.3"/><polygon points="1628.0,1676.3 1680.0,1645.1 1680.0,1665.1 1628.0,1696.3" fill="none" stroke="#1fa01f" stroke-width="1.3"/><polygon points="1986.0,1873.9 2038.0,1906.1 2038.0,1926.1 1986.0,1893.9" fill="none" stroke="#1fa01f" stroke-width="1.3"/><polygon points="1986.0,1905.6 2038.0,1874.4 2038.0,1894.4 1986.0,1925.6" fill="none" stroke="#1fa01f" stroke-width="1.3"/><polygon points="2146.0,1965.9 2198.0,1998.1 2198.0,2018.1 2146.0,1985.9" fill="none" stroke="#1fa01f" stroke-width="1.3"/><polygon points="2146.0,1997.6 2198.0,1966.4 2198.0,1986.4 2146.0,2017.6" fill="none" stroke="#1fa01f" stroke-width="1.3"/><polygon points="2298.2,1685.8 2350.2,1718.0 2350.2,1738.0 2298.2,1705.8" fill="none" stroke="#1fa01f" stroke-width="1.3"/><polygon points="2298.2,1717.5 2350.2,1686.3 2350.2,1706.3 2298.2,1737.5" fill="none" stroke="#1fa01f" stroke-width="1.3"/><polygon points="2458.8,1789.1 2510.8,1821.3 2510.8,1841.3 2458.8,1809.1" fill="none" stroke="#1fa01f" stroke-width="1.3"/><polygon points="2458.8,1820.8 2510.8,1789.6 2510.8,1809.6 2458.8,1840.8" fill="none" stroke="#1fa01f" stroke-width="1.3"/><polygon points="2565.9,1524.9 2617.9,1557.1 2617.9,1577.1 2565.9,1544.9" fill="none" stroke="#1fa01f" stroke-width="1.3"/><polygon points="2565.9,1556.6 2617.9,1525.4 2617.9,1545.4 2565.9,1576.6" fill="none" stroke="#1fa01f" stroke-width="1.3"/><polygon points="2727.5,1628.4 2779.5,1660.6 2779.5,1680.6 2727.5,1648.4" fill="none" stroke="#1fa01f" stroke-width="1.3"/><polygon points="2727.5,1660.1 2779.5,1628.9 2779.5,1648.9 2727.5,1680.1" fill="none" stroke="#1fa01f" stroke-width="1.3"/><polygon points="2829.6,1367.3 2881.6,1399.5 2881.6,1419.5 2829.6,1387.3" fill="none" stroke="#1fa01f" stroke-width="1.3"/><polygon points="2829.6,1399.0 2881.6,1367.8 2881.6,1387.8 2829.6,1419.0" fill="none" stroke="#1fa01f" stroke-width="1.3"/><ellipse cx="1180.0" cy="993.6" rx="21" ry="13.5" fill="none" stroke="#f6c9a4" stroke-width="1.2"/><text transform="translate(1180.0 993.6) scale(1 0.62) rotate(150)" x="0" y="9" text-anchor="middle" font-size="27" fill="#9c9c9c" stroke="#9c9c9c" stroke-width="0.8" font-family="Liberation Sans,sans-serif">C</text><ellipse cx="1483.0" cy="811.0" rx="21" ry="13.5" fill="none" stroke="#f6c9a4" stroke-width="1.2"/><text transform="translate(1483.0 811.0) scale(1 0.62) rotate(150)" x="0" y="9" text-anchor="middle" font-size="27" fill="#9c9c9c" stroke="#9c9c9c" stroke-width="0.8" font-family="Liberation Sans,sans-serif">B</text><ellipse cx="868.0" cy="1181.0" rx="21" ry="13.5" fill="none" stroke="#f6c9a4" stroke-width="1.2"/><text transform="translate(868.0 1181.0) scale(1 0.62) rotate(150)" x="0" y="9" text-anchor="middle" font-size="27" fill="#9c9c9c" stroke="#9c9c9c" stroke-width="0.8" font-family="Liberation Sans,sans-serif">D</text><ellipse cx="516.0" cy="1391.0" rx="21" ry="13.5" fill="none" stroke="#f6c9a4" stroke-width="1.2"/><text transform="translate(516.0 1391.0) scale(1 0.62) rotate(150)" x="0" y="9" text-anchor="middle" font-size="27" fill="#9c9c9c" stroke="#9c9c9c" stroke-width="0.8" font-family="Liberation Sans,sans-serif">E</text><ellipse cx="507.6" cy="1730.0" rx="21" ry="13.5" fill="none" stroke="#f6c9a4" stroke-width="1.2"/><text transform="translate(507.6 1730.0) scale(1 0.62) rotate(120)" x="0" y="9" text-anchor="middle" font-size="27" fill="#9c9c9c" stroke="#9c9c9c" stroke-width="0.8" font-family="Liberation Sans,sans-serif">4</text><ellipse cx="2807.0" cy="985.0" rx="21" ry="13.5" fill="none" stroke="#f6c9a4" stroke-width="1.2"/><text transform="translate(2807.0 985.0) scale(1 0.62) rotate(60)" x="0" y="9" text-anchor="middle" font-size="27" fill="#9c9c9c" stroke="#9c9c9c" stroke-width="0.8" font-family="Liberation Sans,sans-serif">3</text><ellipse cx="3164.6" cy="1213.8" rx="21" ry="13.5" fill="none" stroke="#f6c9a4" stroke-width="1.2"/><text transform="translate(3164.6 1213.8) scale(1 0.62) rotate(60)" x="0" y="9" text-anchor="middle" font-size="27" fill="#9c9c9c" stroke="#9c9c9c" stroke-width="0.8" font-family="Liberation Sans,sans-serif">2</text><ellipse cx="3326.8" cy="1317.7" rx="21" ry="13.5" fill="none" stroke="#f6c9a4" stroke-width="1.2"/><text transform="translate(3326.8 1317.7) scale(1 0.62) rotate(60)" x="0" y="9" text-anchor="middle" font-size="27" fill="#9c9c9c" stroke="#9c9c9c" stroke-width="0.8" font-family="Liberation Sans,sans-serif">1</text><ellipse cx="3317.7" cy="1657.0" rx="21" ry="13.5" fill="none" stroke="#f6c9a4" stroke-width="1.2"/><text transform="translate(3317.7 1657.0) scale(1 0.62) rotate(-160)" x="0" y="9" text-anchor="middle" font-size="27" fill="#9c9c9c" stroke="#9c9c9c" stroke-width="0.8" font-family="Liberation Sans,sans-serif">A</text><ellipse cx="3054.0" cy="1815.0" rx="21" ry="13.5" fill="none" stroke="#f6c9a4" stroke-width="1.2"/><text transform="translate(3054.0 1815.0) scale(1 0.62) rotate(-160)" x="0" y="9" text-anchor="middle" font-size="27" fill="#9c9c9c" stroke="#9c9c9c" stroke-width="0.8" font-family="Liberation Sans,sans-serif">B</text><ellipse cx="2751.0" cy="1996.0" rx="21" ry="13.5" fill="none" stroke="#f6c9a4" stroke-width="1.2"/><text transform="translate(2751.0 1996.0) scale(1 0.62) rotate(-160)" x="0" y="9" text-anchor="middle" font-size="27" fill="#9c9c9c" stroke="#9c9c9c" stroke-width="0.8" font-family="Liberation Sans,sans-serif">C</text><g transform="matrix(1 0.637 1 -0.602 1164 1065)"><polygon points="0.0,0.0 0.0,851.0 487.0,851.0 487.0,585.0 1006.0,585.0 1006.0,0.0" fill="#0a1eaa"/><path d="M448.7 231.0 L450.9 210.0 L452.2 189.0 L452.6 168.0 L452.9 147.0 L452.9 126.0 L452.5 105.0 L451.7 84.0 L450.0 63.0 L446.2 42.0 L442.7 38.8 L420.6 33.5 L398.5 31.1 L376.3 29.8 L354.2 28.9 L332.0 28.6 L309.9 28.3 L287.8 28.1 L265.6 28.2 L243.5 28.2 L221.4 28.2 L199.2 28.3 L177.1 28.3 L155.0 28.4 L132.8 28.8 L110.7 29.6 L88.5 30.4 L66.4 32.3 L44.3 36.3 L38.2 42.0 L33.1 63.0 L31.3 84.0 L30.5 105.0 L30.2 126.0 L30.2 147.0 L30.4 168.0 L30.9 189.0 L32.0 210.0 L35.2 231.0 L44.3 239.6 L66.4 243.8 L88.5 245.4 L110.7 246.4 L132.8 246.9 L155.0 247.2 L177.1 247.3 L199.2 247.4 L221.4 247.3 L243.5 247.4 L265.6 247.3 L287.8 247.4 L309.9 247.2 L332.0 247.1 L354.2 246.7 L376.3 246.0 L398.5 245.1 L420.6 242.7 L442.7 236.6 L448.7 231.0Z" fill="#0000ff"/><path d="M443.3 231.0 L446.2 210.0 L447.9 189.0 L448.6 168.0 L448.9 147.0 L448.9 126.0 L448.4 105.0 L447.3 84.0 L445.0 63.0 L442.7 52.4 L436.1 42.0 L420.6 37.6 L398.5 34.4 L376.3 32.8 L354.2 31.6 L332.0 31.2 L309.9 30.8 L287.8 30.5 L265.6 30.5 L243.5 30.5 L221.4 30.5 L199.2 30.8 L177.1 30.7 L155.0 30.9 L132.8 31.4 L110.7 32.4 L88.5 33.5 L66.4 36.1 L44.3 41.4 L43.6 42.0 L36.8 63.0 L34.3 84.0 L33.3 105.0 L32.8 126.0 L32.9 147.0 L33.2 168.0 L33.8 189.0 L35.3 210.0 L39.6 231.0 L44.3 235.5 L66.4 241.0 L88.5 243.2 L110.7 244.5 L132.8 245.2 L155.0 245.5 L177.1 245.7 L199.2 245.9 L221.4 245.7 L243.5 245.9 L265.6 245.8 L287.8 245.8 L309.9 245.6 L332.0 245.5 L354.2 245.0 L376.3 244.0 L398.5 242.8 L420.6 239.7 L442.7 231.5 L443.3 231.0Z" fill="#0060ff"/><path d="M427.2 231.0 L437.1 210.0 L439.9 189.0 L440.8 168.0 L441.3 147.0 L441.3 126.0 L440.6 105.0 L438.9 84.0 L434.0 63.0 L420.6 48.1 L403.2 42.0 L398.5 41.1 L376.3 38.7 L354.2 36.9 L332.0 36.2 L309.9 35.7 L287.8 35.3 L265.6 35.3 L243.5 35.3 L221.4 35.3 L199.2 35.6 L177.1 35.6 L155.0 35.9 L132.8 36.6 L110.7 38.2 L88.5 39.8 L74.7 42.0 L66.4 44.2 L44.3 62.5 L44.1 63.0 L40.4 84.0 L38.9 105.0 L38.2 126.0 L38.3 147.0 L38.7 168.0 L39.6 189.0 L41.9 210.0 L44.3 219.2 L52.2 231.0 L66.4 235.5 L88.5 238.8 L110.7 240.8 L132.8 241.7 L155.0 242.3 L177.1 242.5 L199.2 242.8 L221.4 242.6 L243.5 242.8 L265.6 242.7 L287.8 242.8 L309.9 242.5 L332.0 242.2 L354.2 241.4 L376.3 240.1 L398.5 238.3 L420.6 233.5 L427.2 231.0Z" fill="#00a0ff"/><path d="M428.1 210.0 L432.4 189.0 L434.1 168.0 L434.7 147.0 L434.8 126.0 L433.5 105.0 L431.2 84.0 L422.6 63.0 L420.6 60.8 L398.5 49.0 L376.3 44.6 L354.2 42.2 L349.9 42.0 L332.0 41.3 L309.9 40.6 L287.8 40.1 L265.6 40.1 L243.5 40.1 L221.4 40.1 L199.2 40.5 L177.1 40.5 L155.0 40.9 L132.8 41.8 L130.2 42.0 L110.7 43.9 L88.5 46.8 L66.4 54.5 L56.2 63.0 L47.4 84.0 L44.6 105.0 L44.3 109.5 L43.5 126.0 L43.6 147.0 L44.2 168.0 L44.3 169.5 L45.9 189.0 L50.8 210.0 L66.4 228.9 L70.4 231.0 L88.5 234.5 L110.7 237.1 L132.8 238.3 L155.0 239.1 L177.1 239.4 L199.2 239.7 L221.4 239.5 L243.5 239.7 L265.6 239.5 L287.8 239.7 L309.9 239.3 L332.0 239.0 L354.2 237.9 L376.3 236.1 L398.5 233.7 L409.4 231.0 L420.6 222.3 L428.1 210.0Z" fill="#00c8ff"/><path d="M425.0 189.0 L427.3 168.0 L428.1 147.0 L428.4 126.0 L426.5 105.0 L423.4 84.0 L420.6 77.7 L408.8 63.0 L398.5 57.1 L376.3 50.6 L354.2 47.7 L332.0 46.4 L309.9 45.4 L287.8 44.8 L265.6 44.7 L243.5 44.8 L221.4 44.6 L199.2 45.0 L177.1 45.2 L155.0 45.8 L132.8 47.2 L110.7 49.6 L88.5 54.3 L69.2 63.0 L66.4 65.5 L55.8 84.0 L52.3 105.0 L50.6 126.0 L50.7 147.0 L51.2 168.0 L54.0 189.0 L60.8 210.0 L66.4 216.7 L88.5 229.2 L94.2 231.0 L110.7 233.3 L132.8 234.9 L155.0 235.8 L177.1 236.2 L199.2 236.7 L221.4 236.4 L243.5 236.6 L265.6 236.4 L287.8 236.6 L309.9 236.1 L332.0 235.7 L354.2 234.4 L376.3 232.1 L385.2 231.0 L398.5 227.1 L418.8 210.0 L420.6 205.6 L425.0 189.0Z" fill="#14dcbe"/><path d="M420.6 168.0 L421.4 147.0 L422.0 126.0 L420.6 113.8 L419.2 105.0 L414.2 84.0 L398.5 66.1 L393.8 63.0 L376.3 56.7 L354.2 53.2 L332.0 51.4 L309.9 50.2 L287.8 49.5 L265.6 49.3 L243.5 49.4 L221.4 49.1 L199.2 49.4 L177.1 49.8 L155.0 50.7 L132.8 52.6 L110.7 55.3 L88.5 61.7 L85.7 63.0 L66.4 80.1 L64.2 84.0 L60.0 105.0 L58.0 126.0 L57.9 147.0 L58.3 168.0 L62.0 189.0 L66.4 200.6 L72.0 210.0 L88.5 221.0 L110.7 228.3 L127.0 231.0 L132.8 231.5 L155.0 232.6 L177.1 233.1 L199.2 233.6 L221.4 233.2 L243.5 233.6 L265.6 233.3 L287.8 233.5 L309.9 232.9 L332.0 232.5 L352.8 231.0 L354.2 230.8 L376.3 225.8 L398.5 217.6 L407.5 210.0 L417.1 189.0 L420.6 168.2 L420.6 168.0Z" fill="#00ff80"/><path d="M408.3 189.0 L412.1 168.0 L413.4 147.0 L414.0 126.0 L410.5 105.0 L404.2 84.0 L398.5 77.5 L377.2 63.0 L376.3 62.7 L354.2 58.8 L332.0 56.4 L309.9 55.0 L287.8 54.2 L265.6 53.8 L243.5 54.1 L221.4 53.5 L199.2 53.8 L177.1 54.5 L155.0 55.6 L132.8 58.0 L110.7 61.0 L104.1 63.0 L88.5 71.4 L74.6 84.0 L68.0 105.0 L66.4 115.9 L65.3 126.0 L65.2 147.0 L65.4 168.0 L66.4 172.9 L70.9 189.0 L84.4 210.0 L88.5 212.7 L110.7 221.0 L132.8 225.6 L155.0 228.2 L177.1 229.1 L199.2 230.1 L221.4 229.5 L243.5 230.1 L265.6 229.6 L287.8 230.0 L309.9 228.7 L332.0 227.6 L354.2 224.1 L376.3 218.5 L395.3 210.0 L398.5 206.9 L408.3 189.0Z" fill="#32f020"/><path d="M399.6 189.0 L403.5 168.0 L405.1 147.0 L405.6 126.0 L401.8 105.0 L398.5 95.0 L393.0 84.0 L376.3 71.9 L354.2 65.0 L344.5 63.0 L332.0 61.5 L309.9 59.8 L287.8 58.9 L265.6 58.4 L243.5 58.8 L221.4 58.0 L199.2 58.2 L177.1 59.2 L155.0 60.5 L135.4 63.0 L132.8 63.5 L110.7 68.9 L88.5 81.5 L85.8 84.0 L77.7 105.0 L73.6 126.0 L73.7 147.0 L74.1 168.0 L80.8 189.0 L88.5 200.3 L101.1 210.0 L110.7 213.7 L132.8 219.3 L155.0 222.5 L177.1 223.6 L199.2 224.3 L221.4 224.2 L243.5 224.6 L265.6 224.2 L287.8 224.4 L309.9 222.9 L332.0 221.4 L354.2 217.5 L376.3 211.2 L379.1 210.0 L398.5 191.1 L399.6 189.0Z" fill="#64ff00"/><path d="M387.9 189.0 L394.0 168.0 L396.6 147.0 L396.8 126.0 L391.9 105.0 L380.0 84.0 L376.3 81.4 L354.2 73.3 L332.0 68.0 L309.9 65.2 L287.8 63.9 L268.2 63.0 L265.6 62.9 L262.1 63.0 L243.5 63.6 L234.3 63.0 L221.4 62.4 L199.2 62.6 L191.6 63.0 L177.1 64.3 L155.0 66.4 L132.8 71.0 L110.7 78.0 L100.4 84.0 L88.5 102.3 L87.5 105.0 L82.0 126.0 L82.6 147.0 L83.0 168.0 L88.5 183.6 L91.3 189.0 L110.7 204.9 L121.7 210.0 L132.8 213.1 L155.0 216.8 L177.1 218.1 L199.2 218.6 L221.4 218.9 L243.5 219.2 L265.6 218.7 L287.8 218.8 L309.9 217.1 L332.0 215.2 L354.2 210.8 L357.0 210.0 L376.3 200.2 L387.9 189.0Z" fill="#aaff00"/><path d="M383.1 168.0 L386.6 147.0 L386.0 126.0 L381.3 105.0 L376.3 96.7 L360.3 84.0 L354.2 81.7 L332.0 75.1 L309.9 71.8 L287.8 70.6 L265.6 70.0 L243.5 70.6 L221.4 68.9 L199.2 69.4 L177.1 71.7 L155.0 73.4 L132.8 78.4 L117.6 84.0 L110.7 90.0 L99.8 105.0 L91.5 126.0 L92.8 147.0 L93.6 168.0 L104.2 189.0 L110.7 194.3 L132.8 204.8 L148.5 210.0 L155.0 211.2 L177.1 212.6 L199.2 212.8 L221.4 213.5 L243.5 213.7 L265.6 213.3 L287.8 213.2 L309.9 211.3 L323.0 210.0 L332.0 208.5 L354.2 201.3 L375.5 189.0 L376.3 187.4 L383.1 168.0Z" fill="#ffff00"/><path d="M376.7 147.0 L376.3 141.1 L374.6 126.0 L366.2 105.0 L354.2 95.3 L337.5 84.0 L332.0 82.3 L309.9 78.5 L287.8 77.3 L265.6 77.2 L243.5 77.5 L221.4 75.7 L199.2 76.4 L177.1 79.1 L155.0 80.4 L140.2 84.0 L132.8 88.0 L113.2 105.0 L110.7 109.9 L104.7 126.0 L105.9 147.0 L106.9 168.0 L110.7 175.7 L121.2 189.0 L132.8 194.6 L155.0 201.9 L177.1 205.2 L199.2 205.6 L221.4 206.8 L243.5 207.2 L265.6 206.7 L287.8 206.1 L309.9 202.6 L332.0 198.9 L354.2 191.4 L358.4 189.0 L370.9 168.0 L376.3 148.9 L376.7 147.0Z" fill="#ffaa00"/><path d="M356.7 168.0 L362.2 147.0 L356.8 126.0 L354.2 120.1 L346.2 105.0 L332.0 95.2 L309.9 86.3 L287.8 84.0 L265.6 84.6 L243.5 84.6 L239.3 84.0 L221.4 82.4 L199.2 83.5 L195.4 84.0 L177.1 88.2 L155.0 90.9 L132.8 103.9 L131.5 105.0 L119.5 126.0 L119.4 147.0 L124.5 168.0 L132.8 178.1 L146.7 189.0 L155.0 191.8 L177.1 196.1 L199.2 197.3 L221.4 197.4 L243.5 198.4 L265.6 198.1 L287.8 196.8 L309.9 192.9 L332.0 189.3 L333.0 189.0 L354.2 172.1 L356.7 168.0Z" fill="#ff5500"/><path d="M340.1 147.0 L338.4 126.0 L332.0 115.3 L321.8 105.0 L309.9 99.8 L287.8 97.9 L265.6 97.1 L243.5 95.9 L221.4 93.7 L199.2 94.8 L177.1 100.6 L155.6 105.0 L155.0 105.3 L137.1 126.0 L133.5 147.0 L145.3 168.0 L155.0 175.9 L177.1 184.7 L199.2 188.6 L221.4 187.2 L235.6 189.0 L243.5 189.6 L265.6 189.6 L272.5 189.0 L287.8 185.9 L309.9 179.4 L330.7 168.0 L332.0 164.9 L340.1 147.0Z" fill="#ff0000"/><path d="M305.4 147.0 L293.5 126.0 L287.8 123.8 L265.6 118.6 L243.5 111.4 L221.4 112.3 L199.2 113.8 L177.1 122.9 L170.5 126.0 L167.9 147.0 L177.1 159.8 L199.2 166.1 L203.1 168.0 L221.4 172.0 L243.5 173.8 L265.6 169.5 L278.2 168.0 L287.8 165.8 L305.4 147.0Z" fill="#dc0a5a"/><path d="M429.4 495.0 L431.0 472.5 L431.4 450.0 L431.2 427.5 L429.6 405.0 L424.2 382.5 L420.6 378.8 L398.5 375.6 L376.3 373.5 L354.2 372.5 L332.0 371.5 L309.9 371.1 L287.8 371.1 L265.6 371.0 L243.5 370.9 L221.4 370.8 L199.2 371.1 L177.1 371.1 L155.0 371.2 L132.8 371.7 L110.7 372.3 L88.5 373.8 L66.4 375.9 L59.3 382.5 L44.3 396.7 L36.8 405.0 L35.5 427.5 L35.2 450.0 L35.5 472.5 L37.3 495.0 L44.3 502.5 L61.6 517.5 L66.4 522.1 L88.5 524.0 L110.7 525.0 L132.8 525.5 L155.0 525.9 L177.1 526.1 L199.2 526.5 L221.4 526.2 L243.5 526.5 L265.6 526.5 L287.8 526.4 L309.9 525.9 L332.0 525.6 L354.2 525.1 L376.3 524.1 L398.5 522.5 L403.8 517.5 L420.6 504.6 L429.4 495.0Z" fill="#0000ff"/><path d="M425.0 495.0 L427.1 472.5 L427.6 450.0 L427.3 427.5 L425.2 405.0 L420.6 388.9 L408.4 382.5 L398.5 380.7 L376.3 377.9 L354.2 376.6 L332.0 375.4 L309.9 374.9 L287.8 374.8 L265.6 374.7 L243.5 374.5 L221.4 374.4 L199.2 374.7 L177.1 374.8 L155.0 375.0 L132.8 375.6 L110.7 376.4 L88.5 378.4 L66.4 381.3 L65.1 382.5 L44.3 402.1 L41.7 405.0 L40.0 427.5 L39.5 450.0 L40.0 472.5 L42.3 495.0 L44.3 497.1 L66.4 516.2 L77.8 517.5 L88.5 518.7 L110.7 520.0 L132.8 520.7 L155.0 521.2 L177.1 521.5 L199.2 522.0 L221.4 521.6 L243.5 522.0 L265.6 522.0 L287.8 521.8 L309.9 521.2 L332.0 520.8 L354.2 520.1 L376.3 518.9 L390.3 517.5 L398.5 516.7 L420.6 499.8 L425.0 495.0Z" fill="#0060ff"/><path d="M413.6 495.0 L419.0 472.5 L419.9 450.0 L419.4 427.5 L414.4 405.0 L398.5 391.5 L376.3 386.0 L354.2 384.2 L332.0 382.9 L316.3 382.5 L309.9 382.3 L287.8 382.2 L265.6 382.1 L243.5 381.7 L221.4 381.7 L199.2 382.1 L177.1 382.1 L155.0 382.5 L154.8 382.5 L132.8 383.1 L110.7 384.1 L88.5 386.6 L66.4 392.9 L53.5 405.0 L49.0 427.5 L48.2 450.0 L49.1 472.5 L54.7 495.0 L66.4 505.1 L88.5 511.1 L110.7 513.3 L132.8 514.3 L155.0 514.7 L177.1 515.0 L199.2 515.4 L221.4 515.1 L243.5 515.4 L265.6 515.3 L287.8 515.2 L309.9 514.8 L332.0 514.3 L354.2 513.4 L376.3 511.5 L398.5 506.3 L413.6 495.0Z" fill="#00a0ff"/><path d="M399.7 495.0 L409.5 472.5 L410.9 450.0 L410.0 427.5 L401.5 405.0 L398.5 402.4 L376.3 393.2 L354.2 390.0 L332.0 388.0 L309.9 387.3 L287.8 386.9 L265.6 386.7 L243.5 386.6 L221.4 386.6 L199.2 386.7 L177.1 386.8 L155.0 387.2 L132.8 388.4 L110.7 390.2 L88.5 394.0 L66.4 404.6 L66.0 405.0 L58.2 427.5 L56.8 450.0 L58.3 472.5 L66.4 492.9 L67.9 495.0 L88.5 503.9 L110.7 507.6 L132.8 509.4 L155.0 510.1 L177.1 510.6 L199.2 511.1 L221.4 510.9 L243.5 511.1 L265.6 511.0 L287.8 510.9 L309.9 510.3 L332.0 509.3 L354.2 507.8 L376.3 504.6 L398.5 495.9 L399.7 495.0Z" fill="#00c8ff"/><path d="M400.1 472.5 L401.9 450.0 L400.6 427.5 L398.5 422.3 L386.5 405.0 L376.3 400.3 L354.2 395.9 L332.0 393.2 L309.9 392.2 L287.8 391.5 L265.6 391.1 L243.5 391.1 L221.4 391.1 L199.2 391.2 L177.1 391.3 L155.0 391.9 L132.8 393.7 L110.7 396.2 L88.5 401.4 L81.1 405.0 L67.6 427.5 L66.4 438.4 L65.4 450.0 L66.4 460.6 L67.9 472.5 L84.5 495.0 L88.5 496.8 L110.7 502.0 L132.8 504.6 L155.0 505.6 L177.1 506.2 L199.2 506.9 L221.4 506.6 L243.5 506.8 L265.6 506.7 L287.8 506.6 L309.9 505.9 L332.0 504.4 L354.2 502.3 L376.3 497.8 L383.1 495.0 L398.5 476.1 L400.1 472.5Z" fill="#14dcbe"/><path d="M387.9 472.5 L390.7 450.0 L388.7 427.5 L376.3 410.9 L367.9 405.0 L354.2 401.7 L332.0 398.4 L309.9 397.1 L287.8 396.1 L265.6 395.5 L243.5 395.6 L221.4 395.7 L199.2 395.6 L177.1 395.8 L155.0 396.6 L132.8 399.0 L110.7 402.3 L100.5 405.0 L88.5 413.6 L79.1 427.5 L76.5 450.0 L79.7 472.5 L88.5 483.7 L105.3 495.0 L110.7 496.4 L132.8 499.7 L155.0 501.0 L177.1 501.9 L199.2 502.6 L221.4 502.4 L243.5 502.5 L265.6 502.4 L287.8 502.2 L309.9 501.4 L332.0 499.5 L354.2 496.7 L361.8 495.0 L376.3 486.1 L387.9 472.5Z" fill="#00ff80"/><path d="M378.1 450.0 L376.3 431.4 L375.8 427.5 L354.2 410.4 L340.7 405.0 L332.0 403.6 L309.9 402.0 L287.8 400.7 L265.6 399.9 L243.5 400.2 L221.4 400.3 L199.2 400.0 L177.1 400.3 L155.0 401.4 L132.8 404.3 L128.4 405.0 L110.7 412.2 L91.5 427.5 L88.5 445.0 L88.0 450.0 L88.5 453.7 L92.7 472.5 L110.7 485.9 L132.8 494.7 L134.4 495.0 L155.0 496.4 L177.1 497.5 L199.2 498.3 L221.4 498.1 L243.5 498.3 L265.6 498.0 L287.8 497.9 L309.9 496.9 L328.6 495.0 L332.0 494.2 L354.2 486.6 L374.8 472.5 L376.3 464.2 L378.1 450.0Z" fill="#32f020"/><path d="M357.0 472.5 L362.6 450.0 L360.2 427.5 L354.2 422.8 L332.0 413.9 L309.9 409.2 L287.8 405.5 L282.1 405.0 L265.6 404.3 L243.5 404.7 L221.4 404.9 L199.2 404.5 L177.1 404.8 L173.7 405.0 L155.0 407.6 L132.8 414.2 L110.7 425.0 L107.6 427.5 L103.1 450.0 L108.7 472.5 L110.7 474.0 L132.8 483.8 L155.0 488.4 L177.1 490.9 L199.2 492.9 L221.4 492.7 L243.5 492.7 L265.6 492.3 L287.8 491.9 L309.9 489.2 L332.0 484.0 L354.2 474.4 L357.0 472.5Z" fill="#64ff00"/><path d="M335.1 472.5 L342.8 450.0 L335.0 427.5 L332.0 426.3 L309.9 420.2 L287.8 415.8 L265.6 413.5 L243.5 414.2 L221.4 415.0 L199.2 414.1 L177.1 415.1 L155.0 418.8 L132.8 425.0 L127.9 427.5 L121.8 450.0 L132.1 472.5 L132.8 472.8 L155.0 478.7 L177.1 481.6 L199.2 483.0 L221.4 484.0 L243.5 483.2 L265.6 483.1 L287.8 482.7 L309.9 479.0 L332.0 473.9 L335.1 472.5Z" fill="#aaff00"/><path d="M316.8 450.0 L309.9 440.4 L293.9 427.5 L287.8 426.2 L265.6 423.5 L243.5 423.9 L221.4 425.3 L199.2 424.5 L177.1 425.7 L167.7 427.5 L155.0 444.9 L152.3 450.0 L155.0 453.6 L177.1 471.1 L183.7 472.5 L199.2 473.2 L221.4 475.2 L243.5 473.8 L265.6 473.9 L287.8 473.6 L293.1 472.5 L309.9 459.2 L316.8 450.0Z" fill="#ffff00"/><path d="M449.7 762.3 L451.2 740.2 L451.6 718.0 L451.5 695.8 L450.0 673.7 L442.7 665.7 L427.9 651.5 L420.6 644.9 L398.5 642.4 L376.3 641.3 L354.2 640.5 L332.0 640.0 L309.9 639.8 L287.8 639.5 L265.6 639.6 L243.5 639.5 L221.4 639.7 L199.2 639.6 L177.1 639.7 L155.0 640.2 L132.8 640.6 L110.7 641.1 L88.5 642.4 L66.4 644.7 L58.9 651.5 L44.3 665.6 L37.0 673.7 L35.5 695.8 L35.5 718.0 L35.6 740.2 L37.0 762.3 L44.3 770.3 L58.9 784.5 L66.4 791.3 L88.5 793.7 L110.7 794.9 L132.8 795.6 L155.0 796.1 L177.1 796.3 L199.2 796.2 L221.4 796.5 L243.5 796.4 L265.6 796.3 L287.8 796.4 L309.9 796.3 L332.0 795.9 L354.2 795.5 L376.3 794.6 L398.5 793.6 L420.6 791.5 L428.3 784.5 L442.7 770.1 L449.7 762.3Z" fill="#0000ff"/><path d="M444.7 762.3 L446.6 740.2 L447.2 718.0 L447.0 695.8 L445.0 673.7 L442.7 671.1 L422.2 651.5 L420.6 650.1 L398.5 646.8 L376.3 645.3 L354.2 644.2 L332.0 643.5 L309.9 643.3 L287.8 642.9 L265.6 643.1 L243.5 642.9 L221.4 643.2 L199.2 643.0 L177.1 643.1 L155.0 643.8 L132.8 644.4 L110.7 645.0 L88.5 646.8 L66.4 649.8 L64.6 651.5 L44.3 671.1 L41.9 673.7 L39.9 695.8 L40.0 718.0 L40.1 740.2 L42.0 762.3 L44.3 764.9 L64.6 784.5 L66.4 786.2 L88.5 789.4 L110.7 791.0 L132.8 792.0 L155.0 792.6 L177.1 792.9 L199.2 792.8 L221.4 793.2 L243.5 792.9 L265.6 792.8 L287.8 793.0 L309.9 792.9 L332.0 792.3 L354.2 791.8 L376.3 790.6 L398.5 789.2 L420.6 786.4 L422.7 784.5 L442.7 764.5 L444.7 762.3Z" fill="#0060ff"/><path d="M433.2 762.3 L437.6 740.2 L438.4 718.0 L437.9 695.8 L433.2 673.7 L420.6 661.6 L398.5 655.0 L376.3 652.9 L354.2 651.6 L351.7 651.5 L332.0 650.6 L309.9 650.3 L287.8 649.7 L265.6 650.0 L243.5 649.7 L221.4 650.1 L199.2 649.9 L177.1 650.0 L155.0 651.0 L142.3 651.5 L132.8 651.8 L110.7 652.6 L88.5 655.1 L66.4 661.1 L53.4 673.7 L49.0 695.8 L48.8 718.0 L49.1 740.2 L54.0 762.3 L66.4 774.3 L88.5 781.2 L110.7 783.5 L130.7 784.5 L132.8 784.6 L155.0 785.5 L177.1 786.0 L199.2 785.8 L221.4 786.4 L243.5 786.1 L265.6 785.9 L287.8 786.1 L309.9 786.0 L332.0 785.1 L350.5 784.5 L354.2 784.4 L376.3 783.1 L398.5 781.0 L420.6 774.9 L433.2 762.3Z" fill="#00a0ff"/><path d="M421.3 762.3 L428.6 740.2 L429.6 718.0 L428.6 695.8 L420.9 673.7 L420.6 673.4 L398.5 662.5 L376.3 658.8 L354.2 656.7 L332.0 655.6 L309.9 655.3 L287.8 654.8 L265.6 654.9 L243.5 654.7 L221.4 654.9 L199.2 654.9 L177.1 655.0 L155.0 655.9 L132.8 656.8 L110.7 658.5 L88.5 662.8 L66.4 672.6 L65.3 673.7 L58.4 695.8 L57.6 718.0 L58.3 740.2 L66.4 761.9 L66.7 762.3 L88.5 773.7 L110.7 777.3 L132.8 779.4 L155.0 780.4 L177.1 781.0 L199.2 780.9 L221.4 781.3 L243.5 781.1 L265.6 781.0 L287.8 781.2 L309.9 780.9 L332.0 780.2 L354.2 779.1 L376.3 777.2 L398.5 773.5 L420.6 763.1 L421.3 762.3Z" fill="#00c8ff"/><path d="M420.8 718.0 L420.6 714.6 L418.9 695.8 L405.7 673.7 L398.5 670.1 L376.3 664.8 L354.2 661.7 L332.0 660.4 L309.9 660.0 L287.8 659.4 L265.6 659.4 L243.5 659.0 L221.4 659.2 L199.2 659.5 L177.1 659.6 L155.0 660.7 L132.8 661.8 L110.7 664.5 L88.5 670.6 L81.9 673.7 L68.1 695.8 L66.4 716.5 L66.3 718.0 L66.4 720.0 L67.6 740.2 L81.2 762.3 L88.5 766.1 L110.7 771.2 L132.8 774.2 L155.0 775.5 L177.1 776.6 L199.2 776.5 L221.4 776.8 L243.5 776.8 L265.6 776.6 L287.8 776.8 L309.9 776.2 L332.0 775.5 L354.2 773.8 L376.3 771.4 L398.5 766.0 L406.1 762.3 L419.3 740.2 L420.6 722.3 L420.8 718.0Z" fill="#14dcbe"/><path d="M407.3 740.2 L409.9 718.0 L406.9 695.8 L398.5 683.1 L387.1 673.7 L376.3 670.7 L354.2 666.8 L332.0 665.1 L309.9 664.6 L287.8 663.9 L265.6 663.8 L243.5 663.3 L221.4 663.5 L199.2 664.0 L177.1 664.1 L155.0 665.5 L132.8 666.8 L110.7 670.5 L100.3 673.7 L88.5 683.9 L80.1 695.8 L77.0 718.0 L79.5 740.2 L88.5 753.6 L100.3 762.3 L110.7 765.0 L132.8 769.0 L155.0 770.7 L177.1 772.1 L199.2 772.0 L221.4 772.3 L243.5 772.4 L265.6 772.2 L287.8 772.4 L309.9 771.6 L332.0 770.8 L354.2 768.5 L376.3 765.5 L387.8 762.3 L398.5 753.4 L407.3 740.2Z" fill="#00ff80"/><path d="M398.9 718.0 L398.5 715.5 L393.8 695.8 L376.3 680.6 L363.3 673.7 L354.2 671.9 L332.0 669.8 L309.9 669.2 L287.8 668.5 L265.6 668.2 L243.5 667.6 L221.4 667.8 L199.2 668.5 L177.1 668.7 L155.0 670.2 L132.8 671.9 L123.2 673.7 L110.7 680.4 L93.3 695.8 L88.5 713.6 L87.8 718.0 L88.5 723.2 L92.6 740.2 L110.7 754.6 L125.2 762.3 L132.8 763.9 L155.0 765.9 L177.1 767.6 L199.2 767.6 L221.4 767.8 L243.5 768.1 L265.6 767.8 L287.8 768.1 L309.9 767.0 L332.0 766.1 L354.2 763.2 L359.8 762.3 L376.3 756.3 L394.6 740.2 L398.5 720.8 L398.9 718.0Z" fill="#32f020"/><path d="M379.7 740.2 L384.7 718.0 L378.1 695.8 L376.3 694.3 L354.2 682.2 L332.0 675.7 L309.9 674.1 L304.9 673.7 L287.8 673.0 L265.6 672.6 L243.5 671.9 L221.4 672.1 L199.2 673.0 L177.1 673.2 L171.2 673.7 L155.0 676.4 L132.8 682.1 L110.7 694.9 L109.6 695.8 L102.6 718.0 L109.9 740.2 L110.7 740.8 L132.8 753.8 L155.0 759.6 L168.1 762.3 L177.1 763.1 L199.2 763.2 L221.4 763.4 L243.5 763.8 L265.6 763.5 L287.8 763.7 L309.9 762.4 L310.3 762.3 L332.0 760.3 L354.2 753.4 L376.3 743.1 L379.7 740.2Z" fill="#64ff00"/><path d="M359.3 740.2 L365.4 718.0 L355.1 695.8 L354.2 695.3 L332.0 686.5 L309.9 684.3 L287.8 682.1 L265.6 681.4 L243.5 679.3 L221.4 680.3 L199.2 682.4 L177.1 683.6 L155.0 686.4 L132.8 695.2 L131.8 695.8 L120.9 718.0 L130.3 740.2 L132.8 741.6 L155.0 749.1 L177.1 753.8 L199.2 754.4 L221.4 755.0 L243.5 755.2 L265.6 754.9 L287.8 755.0 L309.9 752.0 L332.0 749.9 L354.2 742.7 L359.3 740.2Z" fill="#aaff00"/><path d="M340.3 718.0 L332.0 702.1 L320.9 695.8 L309.9 694.5 L287.8 691.9 L265.6 691.5 L243.5 689.0 L221.4 690.6 L199.2 692.5 L177.1 694.6 L161.7 695.8 L155.0 699.2 L146.7 718.0 L155.0 732.5 L162.0 740.2 L177.1 743.4 L199.2 744.7 L221.4 745.4 L243.5 744.5 L265.6 744.8 L287.8 744.3 L309.9 741.6 L325.2 740.2 L332.0 736.8 L340.3 718.0Z" fill="#ffff00"/><path d="M279.8 718.0 L265.6 713.7 L243.5 713.9 L234.3 718.0 L243.5 720.3 L265.6 722.5 L279.8 718.0Z" fill="#ffaa00"/><path d="M806.2 189.0 L806.7 168.0 L806.9 147.0 L806.6 126.0 L806.4 105.0 L802.9 101.0 L794.6 84.0 L787.8 63.0 L781.8 57.3 L760.8 54.6 L739.7 53.5 L718.6 52.9 L697.6 52.6 L676.5 52.5 L655.5 52.3 L634.4 52.4 L613.4 52.8 L592.3 53.4 L571.2 54.6 L550.2 57.1 L544.1 63.0 L537.4 84.0 L529.1 101.2 L525.8 105.0 L525.3 126.0 L525.4 147.0 L525.4 168.0 L525.9 189.0 L529.1 192.6 L538.1 210.0 L546.9 231.0 L550.2 234.2 L571.2 235.5 L592.3 236.6 L613.4 237.0 L634.4 237.2 L655.5 237.3 L676.5 237.1 L697.6 236.9 L718.6 236.7 L739.7 236.6 L760.8 235.3 L781.8 234.1 L785.0 231.0 L794.0 210.0 L802.9 192.7 L806.2 189.0Z" fill="#0000ff"/><path d="M790.6 210.0 L800.9 189.0 L801.6 168.0 L801.8 147.0 L801.6 126.0 L801.3 105.0 L791.4 84.0 L782.5 63.0 L781.8 62.3 L760.8 58.8 L739.7 57.4 L718.6 56.5 L697.6 56.1 L676.5 56.0 L655.5 55.8 L634.4 55.9 L613.4 56.4 L592.3 57.3 L571.2 58.8 L550.2 62.1 L549.3 63.0 L540.6 84.0 L530.9 105.0 L530.3 126.0 L530.4 147.0 L530.4 168.0 L531.0 189.0 L541.5 210.0 L550.2 227.7 L571.2 230.2 L586.1 231.0 L592.3 231.4 L613.4 232.0 L634.4 232.3 L655.5 232.4 L676.5 232.1 L697.6 231.9 L718.6 231.6 L739.7 231.4 L745.2 231.0 L760.8 230.1 L781.8 227.7 L790.6 210.0Z" fill="#0060ff"/><path d="M783.8 210.0 L792.2 189.0 L794.4 168.0 L794.7 147.0 L794.5 126.0 L793.1 105.0 L785.1 84.0 L781.8 76.6 L760.8 67.6 L739.7 64.8 L718.6 63.6 L697.6 63.1 L676.7 63.0 L676.5 63.0 L655.5 62.7 L634.4 62.8 L630.2 63.0 L613.4 63.6 L592.3 64.7 L571.2 67.5 L550.2 76.6 L547.0 84.0 L539.1 105.0 L537.6 126.0 L537.5 147.0 L537.9 168.0 L539.6 189.0 L548.4 210.0 L550.2 213.7 L571.2 222.0 L592.3 224.8 L613.4 225.9 L634.4 226.3 L655.5 226.5 L676.5 226.3 L697.6 226.1 L718.6 225.7 L739.7 224.8 L760.8 222.0 L781.8 214.1 L783.8 210.0Z" fill="#00a0ff"/><path d="M783.4 189.0 L787.2 168.0 L787.5 147.0 L787.3 126.0 L785.0 105.0 L781.8 95.8 L773.8 84.0 L760.8 76.7 L739.7 71.7 L718.6 69.7 L697.6 68.8 L676.5 68.8 L655.5 68.3 L634.4 68.8 L613.4 69.9 L592.3 71.6 L571.2 76.3 L557.9 84.0 L550.2 96.4 L547.3 105.0 L544.8 126.0 L544.7 147.0 L545.3 168.0 L548.1 189.0 L550.2 194.3 L563.0 210.0 L571.2 213.8 L592.3 218.4 L613.4 220.3 L634.4 220.8 L655.5 221.3 L676.5 221.0 L697.6 220.8 L718.6 220.0 L739.7 218.4 L760.8 213.8 L769.2 210.0 L781.8 193.2 L783.4 189.0Z" fill="#00c8ff"/><path d="M772.6 189.0 L779.4 168.0 L780.0 147.0 L779.5 126.0 L775.0 105.0 L760.8 86.9 L756.6 84.0 L739.7 78.5 L718.6 75.9 L697.6 74.4 L676.5 74.5 L655.5 73.9 L634.4 74.7 L613.4 76.2 L592.3 78.5 L574.4 84.0 L571.2 86.1 L557.4 105.0 L552.6 126.0 L552.4 147.0 L553.6 168.0 L559.0 189.0 L571.2 202.9 L584.6 210.0 L592.3 212.0 L613.4 214.7 L634.4 215.4 L655.5 216.1 L676.5 215.7 L697.6 215.4 L718.6 214.3 L739.7 211.9 L747.3 210.0 L760.8 203.1 L772.6 189.0Z" fill="#14dcbe"/><path d="M761.5 189.0 L769.7 168.0 L771.2 147.0 L769.4 126.0 L763.8 105.0 L760.8 101.1 L739.7 86.3 L732.0 84.0 L718.6 82.0 L697.6 80.1 L676.5 80.3 L655.5 79.4 L634.4 80.7 L613.4 82.5 L602.1 84.0 L592.3 86.5 L571.2 101.2 L568.5 105.0 L561.8 126.0 L561.8 147.0 L563.3 168.0 L570.8 189.0 L571.2 189.5 L592.3 202.9 L613.4 208.5 L634.4 209.9 L635.4 210.0 L655.5 210.9 L676.5 210.4 L697.6 210.1 L698.5 210.0 L718.6 207.8 L739.7 202.3 L760.8 189.9 L761.5 189.0Z" fill="#00ff80"/><path d="M762.4 147.0 L760.8 135.7 L758.8 126.0 L748.9 105.0 L739.7 98.2 L718.6 90.8 L697.6 86.9 L676.5 87.2 L655.5 85.8 L634.4 88.1 L613.4 91.4 L592.3 98.1 L583.0 105.0 L571.2 125.7 L571.1 126.0 L571.2 145.6 L571.2 147.0 L573.5 168.0 L586.6 189.0 L592.3 192.7 L613.4 199.6 L634.4 201.8 L655.5 202.9 L676.5 202.5 L697.6 201.6 L718.6 198.8 L739.7 191.4 L743.8 189.0 L759.7 168.0 L760.8 161.9 L762.4 147.0Z" fill="#32f020"/><path d="M745.7 168.0 L749.2 147.0 L746.1 126.0 L739.7 114.7 L728.6 105.0 L718.6 101.0 L697.6 96.0 L676.5 96.4 L655.5 95.6 L634.4 97.5 L613.4 101.1 L602.9 105.0 L592.3 114.8 L585.6 126.0 L583.5 147.0 L586.3 168.0 L592.3 176.8 L608.7 189.0 L613.4 190.6 L634.4 193.6 L655.5 194.2 L676.5 194.5 L697.6 193.2 L718.6 189.8 L720.9 189.0 L739.7 175.5 L745.7 168.0Z" fill="#64ff00"/><path d="M724.8 168.0 L731.8 147.0 L729.3 126.0 L718.6 116.5 L697.6 105.5 L676.5 106.3 L655.5 105.9 L634.4 108.4 L613.4 116.2 L602.9 126.0 L598.9 147.0 L605.0 168.0 L613.4 174.3 L634.4 181.3 L655.5 183.5 L676.5 184.0 L697.6 180.0 L718.6 172.3 L724.8 168.0Z" fill="#aaff00"/><path d="M705.5 147.0 L697.6 127.4 L676.5 127.4 L672.4 126.0 L655.5 124.1 L635.4 126.0 L634.4 128.1 L632.0 147.0 L634.4 150.3 L649.8 168.0 L655.5 169.4 L676.5 168.8 L679.5 168.0 L697.6 156.7 L705.5 147.0Z" fill="#ffff00"/><path d="M787.4 517.5 L792.4 495.0 L793.9 472.5 L794.1 450.0 L793.8 427.5 L792.2 405.0 L786.5 382.5 L781.8 377.5 L760.8 374.8 L739.7 373.4 L718.6 372.6 L697.6 372.2 L676.5 372.1 L655.5 372.1 L634.4 372.1 L613.4 372.4 L592.3 373.2 L571.2 374.3 L550.2 377.1 L545.1 382.5 L538.7 405.0 L537.2 427.5 L536.8 450.0 L537.2 472.5 L538.4 495.0 L544.0 517.5 L550.2 524.1 L571.2 527.1 L592.3 528.3 L613.4 529.0 L634.4 529.5 L655.5 529.4 L676.5 529.4 L697.6 529.6 L718.6 529.0 L739.7 528.2 L760.8 526.5 L781.8 523.5 L787.4 517.5Z" fill="#0000ff"/><path d="M782.3 517.5 L788.8 495.0 L790.9 472.5 L791.2 450.0 L790.8 427.5 L788.7 405.0 L781.8 384.1 L777.4 382.5 L760.8 379.7 L739.7 377.8 L718.6 376.9 L697.6 376.2 L676.5 376.1 L655.5 376.2 L634.4 376.2 L613.4 376.5 L592.3 377.6 L571.2 379.0 L551.7 382.5 L550.2 383.0 L541.8 405.0 L539.9 427.5 L539.4 450.0 L539.9 472.5 L541.5 495.0 L549.0 517.5 L550.2 518.8 L571.2 522.8 L592.3 524.4 L613.4 525.4 L634.4 526.0 L655.5 525.9 L676.5 525.9 L697.6 526.1 L718.6 525.3 L739.7 524.2 L760.8 522.1 L781.8 518.0 L782.3 517.5Z" fill="#0060ff"/><path d="M781.8 495.0 L784.9 472.5 L785.3 450.0 L784.8 427.5 L781.8 406.4 L781.3 405.0 L760.8 390.0 L739.7 386.3 L718.6 384.7 L697.6 383.9 L676.5 383.7 L655.5 383.8 L634.4 383.9 L613.4 384.3 L592.3 385.8 L571.2 388.7 L550.2 399.8 L548.2 405.0 L545.3 427.5 L544.5 450.0 L545.2 472.5 L547.7 495.0 L550.2 502.0 L571.2 513.5 L592.3 516.6 L605.1 517.5 L613.4 518.0 L634.4 518.9 L655.5 518.9 L676.5 518.9 L697.6 519.1 L718.6 518.0 L725.4 517.5 L739.7 516.3 L760.8 511.9 L781.8 495.0 L781.8 495.0Z" fill="#00a0ff"/><path d="M767.5 495.0 L776.7 472.5 L777.6 450.0 L776.4 427.5 L766.9 405.0 L760.8 400.6 L739.7 394.2 L718.6 391.5 L697.6 390.0 L676.5 389.7 L655.5 389.9 L634.4 390.1 L613.4 391.0 L592.3 393.3 L571.2 398.5 L560.9 405.0 L551.3 427.5 L550.2 438.5 L549.6 450.0 L550.2 463.0 L551.1 472.5 L559.5 495.0 L571.2 503.0 L592.3 508.7 L613.4 511.0 L634.4 512.3 L655.5 512.4 L676.5 512.4 L697.6 512.2 L718.6 510.7 L739.7 508.1 L760.8 500.4 L767.5 495.0Z" fill="#00c8ff"/><path d="M766.3 472.5 L767.2 450.0 L765.7 427.5 L760.8 417.5 L747.6 405.0 L739.7 402.2 L718.6 398.2 L697.6 396.1 L676.5 395.8 L655.5 396.0 L634.4 396.3 L613.4 397.6 L592.3 400.7 L578.9 405.0 L571.2 412.0 L562.8 427.5 L559.7 450.0 L562.6 472.5 L571.2 489.6 L576.4 495.0 L592.3 500.8 L613.4 504.0 L634.4 505.7 L655.5 506.1 L676.5 506.0 L697.6 505.3 L718.6 503.5 L739.7 499.9 L751.0 495.0 L760.8 483.8 L766.3 472.5Z" fill="#14dcbe"/><path d="M753.4 472.5 L755.2 450.0 L751.7 427.5 L739.7 415.7 L718.9 405.0 L718.6 404.9 L697.6 402.3 L676.5 401.8 L655.5 402.1 L634.4 402.5 L613.4 404.2 L608.6 405.0 L592.3 412.1 L576.0 427.5 L571.2 444.6 L570.3 450.0 L571.2 455.7 L575.3 472.5 L592.3 490.5 L602.3 495.0 L613.4 497.0 L634.4 499.2 L655.5 499.8 L676.5 499.7 L697.6 498.4 L718.6 496.2 L725.0 495.0 L739.7 487.9 L753.4 472.5Z" fill="#00ff80"/><path d="M740.6 450.0 L739.7 446.0 L733.8 427.5 L718.6 418.0 L697.6 411.9 L676.5 411.1 L655.5 411.4 L634.4 412.0 L613.4 417.1 L594.5 427.5 L592.3 431.8 L586.3 450.0 L591.6 472.5 L592.3 473.2 L613.4 484.2 L634.4 489.9 L655.5 491.8 L676.5 491.5 L697.6 488.5 L718.6 483.2 L736.5 472.5 L739.7 457.2 L740.6 450.0Z" fill="#32f020"/><path d="M718.7 450.0 L718.6 449.8 L707.9 427.5 L697.6 424.3 L676.5 424.5 L655.5 423.3 L634.4 423.7 L622.6 427.5 L613.4 440.8 L608.8 450.0 L613.4 459.8 L623.4 472.5 L634.4 476.0 L655.5 478.3 L676.5 478.0 L697.6 475.7 L708.1 472.5 L718.6 450.2 L718.7 450.0Z" fill="#64ff00"/><path d="M962.6 231.0 L974.6 210.0 L977.6 189.0 L978.5 168.0 L978.8 147.0 L978.4 126.0 L977.7 105.0 L974.5 84.0 L961.8 63.0 L960.0 61.9 L937.0 58.1 L914.0 58.0 L891.0 59.0 L879.3 63.0 L868.0 72.4 L863.0 84.0 L860.3 105.0 L859.4 126.0 L859.2 147.0 L859.2 168.0 L860.3 189.0 L863.1 210.0 L868.0 221.4 L880.0 231.0 L891.0 234.6 L914.0 236.2 L937.0 235.7 L960.0 232.7 L962.6 231.0Z" fill="#0000ff"/><path d="M961.9 189.0 L963.6 168.0 L964.0 147.0 L963.3 126.0 L961.8 105.0 L960.0 97.9 L946.5 84.0 L937.0 80.1 L914.0 80.2 L891.0 83.7 L890.6 84.0 L880.0 105.0 L877.4 126.0 L877.1 147.0 L877.3 168.0 L880.1 189.0 L890.7 210.0 L891.0 210.3 L914.0 214.3 L937.0 213.7 L946.6 210.0 L960.0 196.5 L961.9 189.0Z" fill="#0060ff"/><path d="M984.6 495.0 L985.5 472.5 L985.5 450.0 L983.8 427.5 L983.0 424.3 L975.0 405.0 L960.0 396.2 L937.0 395.0 L914.0 395.4 L891.0 404.9 L891.0 405.0 L885.0 427.5 L884.0 450.0 L884.2 472.5 L884.8 495.0 L889.4 517.5 L891.0 520.1 L914.0 530.7 L937.0 531.4 L960.0 529.3 L976.9 517.5 L983.0 501.9 L984.6 495.0Z" fill="#0000ff"/><path d="M951.5 472.5 L948.3 450.0 L937.0 431.8 L914.0 443.0 L912.4 450.0 L912.0 472.5 L914.0 481.0 L937.0 494.9 L951.5 472.5Z" fill="#0060ff"/><path d="M0.0 0.0 V315.0M22.1 0.0 V315.0M44.3 0.0 V315.0M66.4 0.0 V315.0M88.5 0.0 V315.0M110.7 0.0 V315.0M132.8 0.0 V315.0M155.0 0.0 V315.0M177.1 0.0 V315.0M199.2 0.0 V315.0M221.4 0.0 V315.0M243.5 0.0 V315.0M265.6 0.0 V315.0M287.8 0.0 V315.0M309.9 0.0 V315.0M332.0 0.0 V315.0M354.2 0.0 V315.0M376.3 0.0 V315.0M398.5 0.0 V315.0M420.6 0.0 V315.0M442.7 0.0 V315.0M464.9 0.0 V315.0M487.0 0.0 V315.0M0.0 0.0 H487.0M0.0 21.0 H487.0M0.0 42.0 H487.0M0.0 63.0 H487.0M0.0 84.0 H487.0M0.0 105.0 H487.0M0.0 126.0 H487.0M0.0 147.0 H487.0M0.0 168.0 H487.0M0.0 189.0 H487.0M0.0 210.0 H487.0M0.0 231.0 H487.0M0.0 252.0 H487.0M0.0 273.0 H487.0M0.0 294.0 H487.0M0.0 315.0 H487.0M0.0 315.0 V585.0M22.1 315.0 V585.0M44.3 315.0 V585.0M66.4 315.0 V585.0M88.5 315.0 V585.0M110.7 315.0 V585.0M132.8 315.0 V585.0M155.0 315.0 V585.0M177.1 315.0 V585.0M199.2 315.0 V585.0M221.4 315.0 V585.0M243.5 315.0 V585.0M265.6 315.0 V585.0M287.8 315.0 V585.0M309.9 315.0 V585.0M332.0 315.0 V585.0M354.2 315.0 V585.0M376.3 315.0 V585.0M398.5 315.0 V585.0M420.6 315.0 V585.0M442.7 315.0 V585.0M464.9 315.0 V585.0M487.0 315.0 V585.0M0.0 315.0 H487.0M0.0 337.5 H487.0M0.0 360.0 H487.0M0.0 382.5 H487.0M0.0 405.0 H487.0M0.0 427.5 H487.0M0.0 450.0 H487.0M0.0 472.5 H487.0M0.0 495.0 H487.0M0.0 517.5 H487.0M0.0 540.0 H487.0M0.0 562.5 H487.0M0.0 585.0 H487.0M0.0 585.0 V851.0M22.1 585.0 V851.0M44.3 585.0 V851.0M66.4 585.0 V851.0M88.5 585.0 V851.0M110.7 585.0 V851.0M132.8 585.0 V851.0M155.0 585.0 V851.0M177.1 585.0 V851.0M199.2 585.0 V851.0M221.4 585.0 V851.0M243.5 585.0 V851.0M265.6 585.0 V851.0M287.8 585.0 V851.0M309.9 585.0 V851.0M332.0 585.0 V851.0M354.2 585.0 V851.0M376.3 585.0 V851.0M398.5 585.0 V851.0M420.6 585.0 V851.0M442.7 585.0 V851.0M464.9 585.0 V851.0M487.0 585.0 V851.0M0.0 585.0 H487.0M0.0 607.2 H487.0M0.0 629.3 H487.0M0.0 651.5 H487.0M0.0 673.7 H487.0M0.0 695.8 H487.0M0.0 718.0 H487.0M0.0 740.2 H487.0M0.0 762.3 H487.0M0.0 784.5 H487.0M0.0 806.7 H487.0M0.0 828.8 H487.0M0.0 851.0 H487.0M487.0 0.0 V315.0M508.1 0.0 V315.0M529.1 0.0 V315.0M550.2 0.0 V315.0M571.2 0.0 V315.0M592.3 0.0 V315.0M613.4 0.0 V315.0M634.4 0.0 V315.0M655.5 0.0 V315.0M676.5 0.0 V315.0M697.6 0.0 V315.0M718.6 0.0 V315.0M739.7 0.0 V315.0M760.8 0.0 V315.0M781.8 0.0 V315.0M802.9 0.0 V315.0M823.9 0.0 V315.0M845.0 0.0 V315.0M487.0 0.0 H845.0M487.0 21.0 H845.0M487.0 42.0 H845.0M487.0 63.0 H845.0M487.0 84.0 H845.0M487.0 105.0 H845.0M487.0 126.0 H845.0M487.0 147.0 H845.0M487.0 168.0 H845.0M487.0 189.0 H845.0M487.0 210.0 H845.0M487.0 231.0 H845.0M487.0 252.0 H845.0M487.0 273.0 H845.0M487.0 294.0 H845.0M487.0 315.0 H845.0M487.0 315.0 V585.0M508.1 315.0 V585.0M529.1 315.0 V585.0M550.2 315.0 V585.0M571.2 315.0 V585.0M592.3 315.0 V585.0M613.4 315.0 V585.0M634.4 315.0 V585.0M655.5 315.0 V585.0M676.5 315.0 V585.0M697.6 315.0 V585.0M718.6 315.0 V585.0M739.7 315.0 V585.0M760.8 315.0 V585.0M781.8 315.0 V585.0M802.9 315.0 V585.0M823.9 315.0 V585.0M845.0 315.0 V585.0M487.0 315.0 H845.0M487.0 337.5 H845.0M487.0 360.0 H845.0M487.0 382.5 H845.0M487.0 405.0 H845.0M487.0 427.5 H845.0M487.0 450.0 H845.0M487.0 472.5 H845.0M487.0 495.0 H845.0M487.0 517.5 H845.0M487.0 540.0 H845.0M487.0 562.5 H845.0M487.0 585.0 H845.0M845.0 0.0 V315.0M868.0 0.0 V315.0M891.0 0.0 V315.0M914.0 0.0 V315.0M937.0 0.0 V315.0M960.0 0.0 V315.0M983.0 0.0 V315.0M1006.0 0.0 V315.0M845.0 0.0 H1006.0M845.0 21.0 H1006.0M845.0 42.0 H1006.0M845.0 63.0 H1006.0M845.0 84.0 H1006.0M845.0 105.0 H1006.0M845.0 126.0 H1006.0M845.0 147.0 H1006.0M845.0 168.0 H1006.0M845.0 189.0 H1006.0M845.0 210.0 H1006.0M845.0 231.0 H1006.0M845.0 252.0 H1006.0M845.0 273.0 H1006.0M845.0 294.0 H1006.0M845.0 315.0 H1006.0M845.0 315.0 V585.0M868.0 315.0 V585.0M891.0 315.0 V585.0M914.0 315.0 V585.0M937.0 315.0 V585.0M960.0 315.0 V585.0M983.0 315.0 V585.0M1006.0 315.0 V585.0M845.0 315.0 H1006.0M845.0 337.5 H1006.0M845.0 360.0 H1006.0M845.0 382.5 H1006.0M845.0 405.0 H1006.0M845.0 427.5 H1006.0M845.0 450.0 H1006.0M845.0 472.5 H1006.0M845.0 495.0 H1006.0M845.0 517.5 H1006.0M845.0 540.0 H1006.0M845.0 562.5 H1006.0M845.0 585.0 H1006.0" fill="none" stroke="#00001e" stroke-width="1" vector-effect="non-scaling-stroke" shape-rendering="crispEdges"/><path d="M0 0 V851M487 0 V851M845 0 V585M1006 0 V585M0 0 H1006M0 315 H1006M0 585 H1006M0 851 H487" fill="none" stroke="#d8d8e4" stroke-opacity="0.9" stroke-width="1.2" vector-effect="non-scaling-stroke"/></g><g transform="matrix(1 0.637 1 -0.602 1164 777)"><polygon points="0.0,315.0 0.0,851.0 487.0,851.0 487.0,585.0 1006.0,585.0 1006.0,315.0" fill="#0a1eaa"/><path d="M451.1 762.3 L452.5 740.2 L453.0 718.0 L452.6 695.8 L451.3 673.7 L447.1 651.5 L442.7 647.2 L420.6 642.5 L398.5 640.4 L376.3 639.0 L354.2 638.3 L332.0 638.0 L309.9 637.8 L287.8 637.5 L265.6 637.7 L243.5 637.7 L221.4 637.7 L199.2 637.7 L177.1 637.7 L155.0 638.1 L132.8 638.5 L110.7 639.1 L88.5 640.6 L66.4 642.7 L44.3 647.6 L40.4 651.5 L36.3 673.7 L34.9 695.8 L34.8 718.0 L35.1 740.2 L36.7 762.3 L44.3 770.5 L60.4 784.5 L66.4 790.0 L88.5 792.2 L110.7 793.3 L132.8 794.1 L155.0 794.3 L177.1 794.7 L199.2 794.8 L221.4 795.0 L243.5 794.9 L265.6 795.0 L287.8 794.7 L309.9 794.6 L332.0 794.5 L354.2 794.1 L376.3 793.3 L398.5 792.3 L420.6 790.3 L427.0 784.5 L442.7 771.4 L451.1 762.3Z" fill="#0000ff"/><path d="M446.5 762.3 L448.3 740.2 L449.0 718.0 L448.5 695.8 L446.8 673.7 L442.7 656.6 L438.2 651.5 L420.6 646.8 L398.5 644.1 L376.3 642.3 L354.2 641.3 L332.0 640.8 L309.9 640.6 L287.8 640.3 L265.6 640.4 L243.5 640.5 L221.4 640.4 L199.2 640.5 L177.1 640.5 L155.0 641.0 L132.8 641.5 L110.7 642.3 L88.5 644.4 L66.4 647.2 L50.3 651.5 L44.3 659.2 L41.0 673.7 L39.2 695.8 L39.0 718.0 L39.4 740.2 L41.5 762.3 L44.3 765.3 L66.4 784.5 L66.5 784.5 L88.5 787.3 L110.7 788.9 L132.8 789.9 L155.0 790.1 L177.1 790.7 L199.2 790.9 L221.4 791.1 L243.5 791.0 L265.6 791.1 L287.8 790.7 L309.9 790.6 L332.0 790.4 L354.2 789.8 L376.3 788.9 L398.5 787.5 L420.6 784.9 L421.0 784.5 L442.7 766.4 L446.5 762.3Z" fill="#0060ff"/><path d="M435.1 762.3 L439.7 740.2 L440.9 718.0 L440.1 695.8 L436.1 673.7 L420.6 657.4 L398.9 651.5 L398.5 651.4 L376.3 648.7 L354.2 647.3 L332.0 646.6 L309.9 646.2 L287.8 645.7 L265.6 646.0 L243.5 646.1 L221.4 646.0 L199.2 646.1 L177.1 646.1 L155.0 646.8 L132.8 647.6 L110.7 648.8 L91.3 651.5 L88.5 652.0 L66.4 657.9 L51.9 673.7 L47.9 695.8 L47.5 718.0 L48.3 740.2 L53.1 762.3 L66.4 773.9 L88.5 779.6 L110.7 781.6 L132.8 782.7 L155.0 783.1 L177.1 783.6 L199.2 783.7 L221.4 783.8 L243.5 783.8 L265.6 783.9 L287.8 783.6 L309.9 783.5 L332.0 783.3 L354.2 782.8 L376.3 781.7 L398.5 779.7 L420.6 774.3 L435.1 762.3Z" fill="#00a0ff"/><path d="M422.3 762.3 L430.1 740.2 L431.9 718.0 L431.0 695.8 L424.1 673.7 L420.6 670.0 L398.5 659.2 L376.3 655.1 L354.2 653.1 L332.0 652.2 L309.9 651.8 L297.9 651.5 L287.8 651.2 L267.1 651.5 L265.6 651.5 L243.5 651.6 L221.4 651.5 L199.2 651.6 L177.1 651.6 L155.0 652.5 L132.8 653.5 L110.7 655.3 L88.5 660.0 L66.4 670.4 L63.4 673.7 L57.0 695.8 L56.0 718.0 L57.5 740.2 L65.4 762.3 L66.4 763.2 L88.5 772.6 L110.7 776.0 L132.8 777.8 L155.0 778.7 L177.1 779.3 L199.2 779.4 L221.4 779.7 L243.5 779.7 L265.6 779.7 L287.8 779.4 L309.9 779.1 L332.0 778.9 L354.2 777.9 L376.3 776.2 L398.5 772.8 L420.6 763.8 L422.3 762.3Z" fill="#00c8ff"/><path d="M422.9 718.0 L422.0 695.8 L420.6 691.9 L410.5 673.7 L398.5 667.1 L376.3 661.5 L354.2 658.7 L332.0 657.2 L309.9 656.6 L287.8 656.1 L265.6 656.3 L243.5 656.3 L221.4 656.2 L199.2 656.3 L177.1 656.6 L155.0 657.5 L132.8 659.0 L110.7 661.7 L88.5 668.1 L77.8 673.7 L66.4 694.7 L66.0 695.8 L64.6 718.0 L66.4 736.4 L66.9 740.2 L81.0 762.3 L88.5 765.6 L110.7 770.3 L132.8 772.9 L155.0 774.2 L177.1 775.0 L199.2 775.1 L221.4 775.6 L243.5 775.5 L265.6 775.6 L287.8 775.2 L309.9 774.8 L332.0 774.5 L354.2 773.1 L376.3 770.7 L398.5 765.9 L406.7 762.3 L420.5 740.2 L420.6 739.6 L422.9 718.0Z" fill="#14dcbe"/><path d="M408.9 740.2 L412.6 718.0 L410.4 695.8 L398.5 676.7 L395.3 673.7 L376.3 667.8 L354.2 664.2 L332.0 662.3 L309.9 661.4 L287.8 661.0 L265.6 661.0 L243.5 660.9 L221.4 660.8 L199.2 660.9 L177.1 661.6 L155.0 662.5 L132.8 664.5 L110.7 668.0 L94.2 673.7 L88.5 678.8 L77.2 695.8 L75.3 718.0 L78.4 740.2 L88.5 754.0 L101.0 762.3 L110.7 764.7 L132.8 768.0 L155.0 769.8 L177.1 770.7 L199.2 770.8 L221.4 771.4 L243.5 771.4 L265.6 771.5 L287.8 771.0 L309.9 770.4 L332.0 770.1 L354.2 768.3 L376.3 765.2 L387.7 762.3 L398.5 754.5 L408.9 740.2Z" fill="#00ff80"/><path d="M401.8 718.0 L398.5 697.0 L398.2 695.8 L376.3 674.8 L374.1 673.7 L354.2 669.8 L332.0 667.3 L309.9 666.3 L287.8 665.8 L265.6 665.8 L243.5 665.5 L221.4 665.4 L199.2 665.6 L177.1 666.5 L155.0 667.5 L132.8 669.9 L114.0 673.7 L110.7 675.3 L88.5 695.8 L88.5 695.8 L86.7 718.0 L88.5 730.8 L90.6 740.2 L110.7 755.0 L128.5 762.3 L132.8 763.0 L155.0 765.4 L177.1 766.4 L199.2 766.6 L221.4 767.3 L243.5 767.2 L265.6 767.4 L287.8 766.9 L309.9 766.1 L332.0 765.7 L354.2 763.5 L361.7 762.3 L376.3 756.5 L396.8 740.2 L398.5 734.5 L401.8 718.0Z" fill="#32f020"/><path d="M381.5 740.2 L386.7 718.0 L383.0 695.8 L376.3 689.4 L354.2 677.4 L342.6 673.7 L332.0 672.3 L309.9 671.1 L287.8 670.7 L265.6 670.5 L243.5 670.1 L221.4 670.1 L199.2 670.2 L177.1 671.5 L155.0 672.5 L145.9 673.7 L132.8 677.6 L110.7 689.2 L103.5 695.8 L101.8 718.0 L107.4 740.2 L110.7 742.6 L132.8 753.3 L155.0 759.0 L177.1 761.9 L199.2 762.2 L200.6 762.3 L221.4 763.2 L243.5 763.0 L265.6 763.3 L287.8 762.7 L296.1 762.3 L309.9 761.1 L332.0 760.0 L354.2 754.7 L376.3 744.3 L381.5 740.2Z" fill="#64ff00"/><path d="M362.8 740.2 L367.8 718.0 L364.5 695.8 L354.2 689.7 L332.0 681.9 L309.9 679.0 L287.8 677.6 L265.6 676.9 L243.5 676.4 L221.4 676.0 L199.2 676.6 L177.1 679.7 L155.0 682.3 L132.8 689.7 L121.9 695.8 L118.5 718.0 L127.5 740.2 L132.8 742.9 L155.0 748.7 L177.1 752.0 L199.2 753.9 L221.4 754.7 L243.5 754.4 L265.6 755.2 L287.8 754.0 L309.9 752.6 L332.0 750.2 L354.2 744.5 L362.8 740.2Z" fill="#aaff00"/><path d="M332.9 740.2 L342.4 718.0 L338.7 695.8 L332.0 693.3 L309.9 690.5 L287.8 687.6 L265.6 686.6 L243.5 687.8 L221.4 686.4 L199.2 688.2 L177.1 690.3 L155.0 693.5 L148.4 695.8 L138.9 718.0 L155.0 734.4 L165.4 740.2 L177.1 742.1 L199.2 745.7 L221.4 745.2 L243.5 744.8 L265.6 745.9 L287.8 744.8 L309.9 744.0 L332.0 740.4 L332.9 740.2Z" fill="#ffff00"/><path d="M285.7 718.0 L265.6 698.8 L243.5 713.2 L221.4 700.9 L199.2 710.0 L186.1 718.0 L199.2 726.2 L221.4 726.6 L243.5 721.0 L265.6 728.3 L285.7 718.0ZM310.8 718.0 L309.9 716.9 L299.8 718.0 L309.9 719.1 L310.8 718.0Z" fill="#ffaa00"/><path d="M451.8 495.0 L453.6 472.5 L454.2 450.0 L453.8 427.5 L452.6 405.0 L447.4 382.5 L442.7 377.8 L420.6 372.7 L398.5 370.5 L376.3 369.1 L354.2 368.5 L332.0 368.0 L309.9 367.9 L287.8 367.7 L265.6 367.7 L243.5 367.8 L221.4 367.8 L199.2 367.8 L177.1 367.9 L155.0 368.2 L132.8 368.7 L110.7 369.3 L88.5 370.8 L66.4 373.0 L44.3 378.6 L40.5 382.5 L36.2 405.0 L34.8 427.5 L34.7 450.0 L35.3 472.5 L37.0 495.0 L44.3 502.7 L62.6 517.5 L66.4 521.2 L88.5 522.6 L110.7 523.4 L132.8 524.3 L155.0 524.5 L177.1 524.6 L199.2 524.7 L221.4 524.9 L243.5 525.1 L265.6 525.2 L287.8 524.8 L309.9 524.8 L332.0 524.6 L354.2 524.3 L376.3 523.9 L398.5 522.6 L420.6 521.5 L424.8 517.5 L442.7 504.6 L451.8 495.0Z" fill="#0000ff"/><path d="M447.4 495.0 L449.8 472.5 L450.6 450.0 L450.2 427.5 L448.5 405.0 L442.7 385.3 L439.9 382.5 L420.6 376.9 L398.5 374.0 L376.3 372.2 L354.2 371.4 L332.0 370.7 L309.9 370.5 L287.8 370.2 L265.6 370.3 L243.5 370.4 L221.4 370.4 L199.2 370.4 L177.1 370.5 L155.0 370.9 L132.8 371.6 L110.7 372.5 L88.5 374.4 L66.4 377.4 L49.6 382.5 L44.3 390.1 L40.8 405.0 L39.0 427.5 L38.9 450.0 L39.6 472.5 L42.0 495.0 L44.3 497.4 L66.4 515.5 L88.5 517.1 L103.8 517.5 L110.7 517.8 L132.8 519.1 L155.0 519.3 L177.1 519.5 L199.2 519.6 L221.4 519.9 L243.5 520.1 L265.6 520.2 L287.8 519.8 L309.9 519.7 L332.0 519.4 L354.2 519.1 L376.3 518.5 L389.5 517.5 L398.5 517.1 L420.6 515.9 L442.7 500.0 L447.4 495.0Z" fill="#0060ff"/><path d="M443.4 450.0 L442.8 427.5 L442.7 426.5 L439.5 405.0 L420.6 386.1 L407.1 382.5 L398.5 381.0 L376.3 378.2 L354.2 377.1 L332.0 376.1 L309.9 375.8 L287.8 375.4 L265.6 375.5 L243.5 375.6 L221.4 375.6 L199.2 375.6 L177.1 375.7 L155.0 376.4 L132.8 377.4 L110.7 378.7 L88.5 381.6 L83.3 382.5 L66.4 387.3 L50.7 405.0 L47.2 427.5 L47.0 450.0 L48.0 472.5 L53.2 495.0 L66.4 505.9 L88.5 511.2 L110.7 512.9 L132.8 514.0 L155.0 514.4 L177.1 514.6 L199.2 514.7 L221.4 514.9 L243.5 514.9 L265.6 515.0 L287.8 514.8 L309.9 514.7 L332.0 514.4 L354.2 514.1 L376.3 513.2 L398.5 511.4 L420.6 507.1 L437.1 495.0 L442.2 472.5 L442.7 464.2 L443.4 450.0Z" fill="#00a0ff"/><path d="M425.1 495.0 L433.7 472.5 L435.6 450.0 L434.9 427.5 L428.8 405.0 L420.6 396.8 L398.5 388.0 L376.3 384.1 L354.2 382.7 L350.3 382.5 L332.0 381.4 L309.9 381.1 L287.8 380.5 L265.6 380.7 L243.5 380.8 L221.4 380.8 L199.2 380.8 L177.1 380.9 L155.0 381.9 L144.3 382.5 L132.8 383.1 L110.7 384.7 L88.5 388.5 L66.4 398.9 L61.0 405.0 L55.2 427.5 L54.6 450.0 L56.0 472.5 L64.8 495.0 L66.4 496.3 L88.5 505.3 L110.7 508.2 L132.8 509.9 L155.0 510.6 L177.1 511.1 L199.2 511.1 L221.4 511.4 L243.5 511.4 L265.6 511.6 L287.8 511.3 L309.9 511.2 L332.0 510.7 L354.2 510.0 L376.3 508.6 L398.5 505.7 L420.6 498.3 L425.1 495.0Z" fill="#00c8ff"/><path d="M425.3 472.5 L427.6 450.0 L427.1 427.5 L420.6 410.0 L417.4 405.0 L398.5 395.1 L376.3 389.6 L354.2 387.4 L332.0 386.1 L309.9 385.6 L287.8 385.0 L265.6 385.2 L243.5 385.3 L221.4 385.2 L199.2 385.2 L177.1 385.5 L155.0 386.5 L132.8 387.9 L110.7 390.5 L88.5 395.5 L72.0 405.0 L66.4 417.2 L63.2 427.5 L62.2 450.0 L63.9 472.5 L66.4 478.5 L78.4 495.0 L88.5 499.3 L110.7 503.5 L132.8 505.7 L155.0 506.8 L177.1 507.5 L199.2 507.6 L221.4 507.9 L243.5 507.8 L265.6 508.2 L287.8 507.7 L309.9 507.7 L332.0 506.9 L354.2 505.9 L376.3 503.9 L398.5 499.9 L411.2 495.0 L420.6 483.0 L425.3 472.5Z" fill="#14dcbe"/><path d="M415.9 472.5 L419.3 450.0 L418.7 427.5 L403.9 405.0 L398.5 402.1 L376.3 395.0 L354.2 392.1 L332.0 390.7 L309.9 389.8 L287.8 389.2 L265.6 389.3 L243.5 389.4 L221.4 389.2 L199.2 389.3 L177.1 389.7 L155.0 391.0 L132.8 392.7 L110.7 396.2 L88.5 402.4 L84.0 405.0 L72.4 427.5 L70.6 450.0 L73.7 472.5 L88.5 491.4 L94.1 495.0 L110.7 498.8 L132.8 501.6 L155.0 503.0 L177.1 503.9 L199.2 504.0 L221.4 504.5 L243.5 504.3 L265.6 504.7 L287.8 504.2 L309.9 504.1 L332.0 503.1 L354.2 501.9 L376.3 499.2 L395.5 495.0 L398.5 493.2 L415.9 472.5Z" fill="#00ff80"/><path d="M405.5 472.5 L409.2 450.0 L408.3 427.5 L398.5 413.6 L389.3 405.0 L376.3 400.4 L354.2 396.8 L332.0 395.3 L309.9 394.0 L287.8 393.4 L265.6 393.5 L243.5 393.5 L221.4 393.2 L199.2 393.4 L177.1 394.0 L155.0 395.6 L132.8 397.5 L110.7 401.9 L100.4 405.0 L88.5 416.4 L82.5 427.5 L80.0 450.0 L84.4 472.5 L88.5 477.8 L110.7 493.0 L116.1 495.0 L132.8 497.5 L155.0 499.3 L177.1 500.4 L199.2 500.4 L221.4 501.0 L243.5 500.8 L265.6 501.3 L287.8 500.7 L309.9 500.6 L332.0 499.4 L354.2 497.8 L373.6 495.0 L376.3 494.0 L398.5 480.8 L405.5 472.5Z" fill="#32f020"/><path d="M399.1 450.0 L398.5 436.6 L397.8 427.5 L376.3 407.2 L372.5 405.0 L354.2 401.5 L332.0 399.8 L309.9 398.2 L287.8 397.5 L265.6 397.6 L243.5 397.6 L221.4 397.2 L199.2 397.5 L177.1 398.2 L155.0 400.1 L132.8 402.2 L120.5 405.0 L110.7 410.8 L93.6 427.5 L89.8 450.0 L96.8 472.5 L110.7 482.9 L132.8 491.6 L149.7 495.0 L155.0 495.5 L177.1 496.8 L199.2 496.9 L221.4 497.6 L243.5 497.2 L265.6 497.9 L287.8 497.2 L309.9 497.1 L332.0 495.6 L339.7 495.0 L354.2 492.2 L376.3 483.8 L393.4 472.5 L398.5 453.8 L399.1 450.0Z" fill="#64ff00"/><path d="M377.9 472.5 L386.4 450.0 L383.1 427.5 L376.3 421.1 L354.2 408.1 L339.6 405.0 L332.0 404.4 L309.9 402.4 L287.8 401.7 L265.6 401.7 L243.5 401.7 L221.4 401.2 L199.2 401.6 L177.1 402.5 L155.0 404.7 L151.7 405.0 L132.8 410.0 L110.7 423.2 L106.3 427.5 L102.4 450.0 L110.5 472.5 L110.7 472.7 L132.8 483.2 L155.0 488.1 L177.1 491.0 L199.2 491.8 L221.4 493.0 L243.5 492.2 L265.6 493.7 L287.8 492.1 L309.9 491.9 L332.0 488.7 L354.2 483.1 L376.3 473.6 L377.9 472.5Z" fill="#aaff00"/><path d="M357.4 472.5 L372.5 450.0 L365.5 427.5 L354.2 420.5 L332.0 414.1 L309.9 408.9 L287.8 406.9 L265.6 407.0 L243.5 406.8 L221.4 405.5 L199.2 406.7 L177.1 409.0 L155.0 414.5 L132.8 421.9 L123.5 427.5 L117.4 450.0 L128.1 472.5 L132.8 474.8 L155.0 480.2 L177.1 482.8 L199.2 485.0 L221.4 485.2 L243.5 484.7 L265.6 485.8 L287.8 484.5 L309.9 484.3 L332.0 481.1 L354.2 473.9 L357.4 472.5Z" fill="#ffff00"/><path d="M355.2 450.0 L354.2 447.3 L340.4 427.5 L332.0 424.7 L309.9 418.9 L287.8 416.2 L265.6 416.1 L243.5 416.1 L221.4 415.5 L199.2 416.6 L177.1 418.8 L155.0 424.8 L147.5 427.5 L138.6 450.0 L155.0 471.7 L156.6 472.5 L177.1 474.7 L199.2 478.1 L221.4 477.3 L243.5 477.2 L265.6 478.0 L287.8 476.9 L309.9 476.6 L332.0 473.5 L335.2 472.5 L354.2 451.5 L355.2 450.0Z" fill="#ffaa00"/><path d="M319.0 450.0 L309.9 434.5 L300.8 427.5 L287.8 425.5 L265.6 425.2 L243.5 425.3 L221.4 425.5 L199.2 426.4 L188.2 427.5 L177.1 442.4 L174.4 450.0 L177.1 451.7 L199.2 467.2 L221.4 459.8 L243.5 464.5 L265.6 463.1 L287.8 458.9 L309.9 459.3 L319.0 450.0Z" fill="#ff5500"/><path d="M813.0 495.0 L815.3 472.5 L816.0 450.0 L816.0 427.5 L815.7 405.0 L814.1 382.5 L809.5 360.0 L802.9 352.9 L781.8 349.3 L760.8 347.9 L739.7 347.0 L718.6 346.5 L697.6 346.3 L676.5 346.3 L655.5 346.3 L634.4 346.4 L613.4 346.8 L592.3 347.5 L571.2 349.0 L550.2 352.2 L542.9 360.0 L538.2 382.5 L536.7 405.0 L536.4 427.5 L536.4 450.0 L537.0 472.5 L539.2 495.0 L550.2 507.0 L571.2 510.2 L592.3 511.5 L613.4 512.3 L634.4 512.6 L655.5 512.7 L673.0 517.5 L676.5 520.7 L680.0 517.5 L697.6 512.7 L718.6 512.6 L739.7 512.1 L760.8 511.3 L781.8 509.7 L802.9 506.1 L813.0 495.0Z" fill="#0000ff"/><path d="M809.3 495.0 L812.4 472.5 L813.4 450.0 L813.3 427.5 L812.9 405.0 L810.8 382.5 L804.7 360.0 L802.9 358.0 L781.8 353.3 L760.8 351.4 L739.7 350.2 L718.6 349.5 L697.6 349.2 L676.5 349.2 L655.5 349.3 L634.4 349.3 L613.4 350.0 L592.3 350.9 L571.2 352.9 L550.2 357.1 L547.4 360.0 L541.2 382.5 L539.3 405.0 L538.9 427.5 L538.9 450.0 L539.7 472.5 L542.6 495.0 L550.2 503.3 L571.2 507.5 L592.3 509.2 L613.4 510.3 L634.4 510.7 L655.5 510.8 L676.5 516.2 L697.6 510.8 L718.6 510.7 L739.7 510.0 L760.8 509.0 L781.8 506.9 L802.9 502.1 L809.3 495.0Z" fill="#0060ff"/><path d="M806.7 472.5 L808.1 450.0 L808.0 427.5 L807.4 405.0 L804.3 382.5 L802.9 377.8 L781.8 361.7 L773.7 360.0 L760.8 358.4 L739.7 356.5 L718.6 355.4 L697.6 355.0 L676.5 355.1 L655.5 355.1 L634.4 355.2 L613.4 356.2 L592.3 357.6 L575.0 360.0 L571.2 360.9 L550.2 373.4 L547.3 382.5 L544.4 405.0 L543.7 427.5 L543.8 450.0 L544.9 472.5 L549.4 495.0 L550.2 495.9 L571.2 502.0 L592.3 504.6 L613.4 506.2 L634.4 506.8 L655.5 507.0 L676.5 511.2 L697.6 507.0 L718.6 506.9 L739.7 505.8 L760.8 504.3 L781.8 501.2 L800.8 495.0 L802.9 491.6 L806.7 472.5Z" fill="#00a0ff"/><path d="M783.2 495.0 L799.2 472.5 L802.7 450.0 L802.5 427.5 L801.0 405.0 L792.5 382.5 L781.8 373.2 L760.8 366.2 L739.7 363.1 L718.6 361.5 L697.6 360.9 L676.5 361.0 L655.5 361.1 L634.4 361.2 L613.4 362.7 L592.3 365.1 L571.2 371.8 L557.6 382.5 L550.2 400.1 L549.4 405.0 L548.6 427.5 L548.7 450.0 L550.2 471.8 L550.3 472.5 L565.9 495.0 L571.2 496.6 L592.3 500.1 L613.4 502.1 L634.4 502.9 L655.5 503.1 L676.5 506.2 L697.6 503.2 L718.6 503.0 L739.7 501.6 L760.8 499.6 L781.8 495.4 L783.2 495.0Z" fill="#00c8ff"/><path d="M788.6 472.5 L793.1 450.0 L793.8 427.5 L790.8 405.0 L781.8 386.6 L778.5 382.5 L760.8 374.2 L739.7 369.9 L718.6 368.0 L697.6 367.2 L676.5 367.1 L655.5 367.4 L634.4 367.7 L613.4 369.5 L592.3 373.1 L571.6 382.5 L571.2 383.0 L559.3 405.0 L556.3 427.5 L557.0 450.0 L561.6 472.5 L571.2 484.9 L589.6 495.0 L592.3 495.5 L613.4 498.1 L634.4 499.0 L655.5 499.3 L676.5 501.2 L697.6 499.4 L718.6 499.2 L739.7 497.3 L760.2 495.0 L760.8 494.8 L781.8 481.6 L788.6 472.5Z" fill="#14dcbe"/><path d="M783.5 450.0 L785.2 427.5 L781.8 410.3 L780.2 405.0 L761.3 382.5 L760.8 382.3 L739.7 376.8 L718.6 374.4 L697.6 373.5 L676.5 373.2 L655.5 373.7 L634.4 374.3 L613.4 376.3 L592.3 381.1 L589.3 382.5 L571.2 402.8 L570.1 405.0 L565.5 427.5 L566.8 450.0 L571.2 467.0 L573.4 472.5 L592.3 485.6 L613.4 492.5 L631.4 495.0 L634.4 495.2 L655.5 495.5 L676.5 496.1 L697.6 495.6 L718.6 495.3 L721.8 495.0 L739.7 490.7 L760.8 483.5 L776.0 472.5 L781.8 457.4 L783.5 450.0Z" fill="#00ff80"/><path d="M772.2 450.0 L773.8 427.5 L766.7 405.0 L760.8 398.0 L739.7 384.9 L731.4 382.5 L718.6 380.8 L697.6 379.7 L676.5 379.3 L655.5 380.0 L634.4 380.8 L619.0 382.5 L613.4 383.7 L592.3 394.2 L582.5 405.0 L576.5 427.5 L578.2 450.0 L588.4 472.5 L592.3 475.2 L613.4 482.4 L634.4 486.6 L655.5 487.8 L676.5 488.3 L697.6 487.5 L718.6 486.9 L739.7 481.1 L760.1 472.5 L760.8 471.8 L772.2 450.0Z" fill="#32f020"/><path d="M760.9 427.5 L760.8 427.2 L748.6 405.0 L739.7 399.2 L718.6 391.9 L697.6 388.5 L676.5 387.7 L655.5 389.3 L634.4 391.1 L613.4 396.2 L597.5 405.0 L592.3 419.8 L590.6 427.5 L590.9 450.0 L592.3 452.9 L613.4 472.1 L614.0 472.5 L634.4 477.9 L655.5 479.4 L676.5 479.7 L697.6 478.8 L718.6 478.1 L736.7 472.5 L739.7 470.5 L760.1 450.0 L760.8 432.0 L760.9 427.5Z" fill="#64ff00"/><path d="M741.5 450.0 L743.0 427.5 L739.7 422.1 L720.0 405.0 L718.6 404.5 L697.6 399.2 L676.5 398.5 L655.5 400.5 L634.4 402.9 L626.5 405.0 L613.4 418.8 L609.6 427.5 L612.2 450.0 L613.4 451.1 L634.4 464.6 L655.5 469.5 L676.5 469.4 L697.6 467.7 L718.6 465.2 L739.7 451.8 L741.5 450.0Z" fill="#aaff00"/><path d="M701.2 450.0 L698.1 427.5 L697.6 427.1 L676.5 419.9 L655.5 423.0 L647.2 427.5 L650.7 450.0 L655.5 451.6 L674.1 450.0 L676.5 448.8 L680.2 450.0 L697.6 450.9 L701.2 450.0Z" fill="#ffff00"/><path d="M986.2 472.5 L986.4 450.0 L986.7 427.5 L985.6 405.0 L983.0 392.1 L980.9 382.5 L960.0 362.4 L940.2 360.0 L937.0 359.6 L915.9 360.0 L914.0 360.0 L891.0 364.9 L878.9 382.5 L875.7 405.0 L875.1 427.5 L875.0 450.0 L875.3 472.5 L877.6 495.0 L888.0 517.5 L891.0 519.9 L914.0 523.8 L937.0 524.3 L960.0 522.2 L968.9 517.5 L982.5 495.0 L983.0 492.1 L986.2 472.5Z" fill="#0000ff"/><path d="M962.4 495.0 L968.8 472.5 L969.1 450.0 L969.6 427.5 L967.7 405.0 L960.0 384.4 L954.8 382.5 L937.0 379.7 L914.0 379.6 L905.4 382.5 L891.0 396.5 L889.0 405.0 L887.5 427.5 L887.4 450.0 L887.9 472.5 L891.0 488.6 L896.2 495.0 L914.0 503.0 L937.0 504.2 L960.0 498.1 L962.4 495.0Z" fill="#0060ff"/><path d="M0.0 315.0 V585.0M22.1 315.0 V585.0M44.3 315.0 V585.0M66.4 315.0 V585.0M88.5 315.0 V585.0M110.7 315.0 V585.0M132.8 315.0 V585.0M155.0 315.0 V585.0M177.1 315.0 V585.0M199.2 315.0 V585.0M221.4 315.0 V585.0M243.5 315.0 V585.0M265.6 315.0 V585.0M287.8 315.0 V585.0M309.9 315.0 V585.0M332.0 315.0 V585.0M354.2 315.0 V585.0M376.3 315.0 V585.0M398.5 315.0 V585.0M420.6 315.0 V585.0M442.7 315.0 V585.0M464.9 315.0 V585.0M487.0 315.0 V585.0M0.0 315.0 H487.0M0.0 337.5 H487.0M0.0 360.0 H487.0M0.0 382.5 H487.0M0.0 405.0 H487.0M0.0 427.5 H487.0M0.0 450.0 H487.0M0.0 472.5 H487.0M0.0 495.0 H487.0M0.0 517.5 H487.0M0.0 540.0 H487.0M0.0 562.5 H487.0M0.0 585.0 H487.0M0.0 585.0 V851.0M22.1 585.0 V851.0M44.3 585.0 V851.0M66.4 585.0 V851.0M88.5 585.0 V851.0M110.7 585.0 V851.0M132.8 585.0 V851.0M155.0 585.0 V851.0M177.1 585.0 V851.0M199.2 585.0 V851.0M221.4 585.0 V851.0M243.5 585.0 V851.0M265.6 585.0 V851.0M287.8 585.0 V851.0M309.9 585.0 V851.0M332.0 585.0 V851.0M354.2 585.0 V851.0M376.3 585.0 V851.0M398.5 585.0 V851.0M420.6 585.0 V851.0M442.7 585.0 V851.0M464.9 585.0 V851.0M487.0 585.0 V851.0M0.0 585.0 H487.0M0.0 607.2 H487.0M0.0 629.3 H487.0M0.0 651.5 H487.0M0.0 673.7 H487.0M0.0 695.8 H487.0M0.0 718.0 H487.0M0.0 740.2 H487.0M0.0 762.3 H487.0M0.0 784.5 H487.0M0.0 806.7 H487.0M0.0 828.8 H487.0M0.0 851.0 H487.0M487.0 315.0 V585.0M508.1 315.0 V585.0M529.1 315.0 V585.0M550.2 315.0 V585.0M571.2 315.0 V585.0M592.3 315.0 V585.0M613.4 315.0 V585.0M634.4 315.0 V585.0M655.5 315.0 V585.0M676.5 315.0 V585.0M697.6 315.0 V585.0M718.6 315.0 V585.0M739.7 315.0 V585.0M760.8 315.0 V585.0M781.8 315.0 V585.0M802.9 315.0 V585.0M823.9 315.0 V585.0M845.0 315.0 V585.0M487.0 315.0 H845.0M487.0 337.5 H845.0M487.0 360.0 H845.0M487.0 382.5 H845.0M487.0 405.0 H845.0M487.0 427.5 H845.0M487.0 450.0 H845.0M487.0 472.5 H845.0M487.0 495.0 H845.0M487.0 517.5 H845.0M487.0 540.0 H845.0M487.0 562.5 H845.0M487.0 585.0 H845.0M845.0 315.0 V585.0M868.0 315.0 V585.0M891.0 315.0 V585.0M914.0 315.0 V585.0M937.0 315.0 V585.0M960.0 315.0 V585.0M983.0 315.0 V585.0M1006.0 315.0 V585.0M845.0 315.0 H1006.0M845.0 337.5 H1006.0M845.0 360.0 H1006.0M845.0 382.5 H1006.0M845.0 405.0 H1006.0M845.0 427.5 H1006.0M845.0 450.0 H1006.0M845.0 472.5 H1006.0M845.0 495.0 H1006.0M845.0 517.5 H1006.0M845.0 540.0 H1006.0M845.0 562.5 H1006.0M845.0 585.0 H1006.0" fill="none" stroke="#00001e" stroke-width="1" vector-effect="non-scaling-stroke" shape-rendering="crispEdges"/><path d="M0 315 V851M487 315 V851M845 315 V585M1006 315 V585M0 315 H1006M0 585 H1006M0 851 H487" fill="none" stroke="#d8d8e4" stroke-opacity="0.9" stroke-width="1.2" vector-effect="non-scaling-stroke"/></g><path d="M1966.0 897.6 L1966.0 1185.6M2324.0 1125.6 L2324.0 1413.6M2485.0 1228.2 L2485.0 1516.2" fill="none" stroke="#d8d8e4" stroke-width="1.2" stroke-opacity=".85"/><path d="M1164.0 1065.0 l-9 -5 M1164.0 1065.0 l-10 3 M1164.0 1065.0 l2 7M1651.0 1375.2 l-9 -5 M1651.0 1375.2 l-10 3 M1651.0 1375.2 l2 7M2009.0 1603.3 l-9 -5 M2009.0 1603.3 l-10 3 M2009.0 1603.3 l2 7M2170.0 1705.8 l-9 -5 M2170.0 1705.8 l-10 3 M2170.0 1705.8 l2 7M2485.0 1516.2 l-9 -5 M2485.0 1516.2 l-10 3 M2485.0 1516.2 l2 7M2755.0 1353.7 l-9 -5 M2755.0 1353.7 l-10 3 M2755.0 1353.7 l2 7M2324.0 1413.6 l-9 -5 M2324.0 1413.6 l-10 3 M2324.0 1413.6 l2 7M1966.0 1185.6 l-9 -5 M1966.0 1185.6 l-10 3 M1966.0 1185.6 l2 7M1479.0 875.4 l-9 -5 M1479.0 875.4 l-10 3 M1479.0 875.4 l2 7M2594.0 1251.1 l-9 -5 M2594.0 1251.1 l-10 3 M2594.0 1251.1 l2 7M1479.0 587.4 l-9 -5 M1479.0 587.4 l-10 3 M1479.0 587.4 l2 7M2015.0 264.7 l-9 -5 M2015.0 264.7 l-10 3 M2015.0 264.7 l2 7M2502.0 574.9 l-9 -5 M2502.0 574.9 l-10 3 M2502.0 574.9 l2 7M2236.0 735.0 l-9 -5 M2236.0 735.0 l-10 3 M2236.0 735.0 l2 7M2755.0 1065.7 l-9 -5 M2755.0 1065.7 l-10 3 M2755.0 1065.7 l2 7M2485.0 1228.2 l-9 -5 M2485.0 1228.2 l-10 3 M2485.0 1228.2 l2 7M2324.0 1125.6 l-9 -5 M2324.0 1125.6 l-10 3 M2324.0 1125.6 l2 7M1966.0 897.6 l-9 -5 M1966.0 897.6 l-10 3 M1966.0 897.6 l2 7M2594.0 963.1 l-9 -5 M2594.0 963.1 l-10 3 M2594.0 963.1 l2 7M1749.0 424.8 l-9 -5 M1749.0 424.8 l-10 3 M1749.0 424.8 l2 7" fill="none" stroke="#ff5a1e" stroke-width="1"/><path d="M2004.6 1358.8 L2167.6 1461.8 L2470.0 1281.6 L2309.0 1178.7 ZM2004.6 1358.8 v249M2167.6 1461.8 v243M2470.0 1281.6 v249M2309.0 1178.7 v251" fill="none" stroke="#d8d8e4" stroke-width="1.1" stroke-opacity=".85"/></svg><div style="position:absolute;left:297px;top:296px;width:25px;height:113.43px;background:#0a1eaa;"></div><div style="position:absolute;left:297px;top:408.93px;width:25px;height:113.43px;background:#0000ff;"></div><div style="position:absolute;left:297px;top:521.86px;width:25px;height:113.43px;background:#0060ff;"></div><div style="position:absolute;left:297px;top:634.79px;width:25px;height:113.43px;background:#00a0ff;"></div><div style="position:absolute;left:297px;top:747.72px;width:25px;height:113.43px;background:#00c8ff;"></div><div style="position:absolute;left:297px;top:860.65px;width:25px;height:113.43px;background:#14dcbe;"></div><div style="position:absolute;left:297px;top:973.58px;width:25px;height:113.43px;background:#00ff80;"></div><div style="position:absolute;left:297px;top:1086.51px;width:25px;height:113.43px;background:#32f020;"></div><div style="position:absolute;left:297px;top:1199.44px;width:25px;height:113.43px;background:#64ff00;"></div><div style="position:absolute;left:297px;top:1312.37px;width:25px;height:113.43px;background:#aaff00;"></div><div style="position:absolute;left:297px;top:1425.3px;width:25px;height:113.43px;background:#ffff00;"></div><div style="position:absolute;left:297px;top:1538.23px;width:25px;height:113.43px;background:#ffaa00;"></div><div style="position:absolute;left:297px;top:1651.16px;width:25px;height:113.43px;background:#ff5500;"></div><div style="position:absolute;left:297px;top:1764.09px;width:25px;height:113.43px;background:#ff0000;"></div><div style="position:absolute;left:297px;top:1877.02px;width:25px;height:113.43px;background:#dc0a5a;"></div><span style="position:absolute;left:324.0px;top:290.8px;font-size:11.5px;line-height:1;white-space:pre;color:#111;">0</span><span style="position:absolute;left:324.0px;top:403.7px;font-size:11.5px;line-height:1;white-space:pre;color:#111;">0.0674</span><span style="position:absolute;left:324.0px;top:516.6px;font-size:11.5px;line-height:1;white-space:pre;color:#111;">0.1348</span><span style="position:absolute;left:324.0px;top:629.6px;font-size:11.5px;line-height:1;white-space:pre;color:#111;">0.2022</span><span style="position:absolute;left:324.0px;top:742.5px;font-size:11.5px;line-height:1;white-space:pre;color:#111;">0.2696</span><span style="position:absolute;left:324.0px;top:855.4px;font-size:11.5px;line-height:1;white-space:pre;color:#111;">0.337</span><span style="position:absolute;left:324.0px;top:968.3px;font-size:11.5px;line-height:1;white-space:pre;color:#111;">0.4044</span><span style="position:absolute;left:324.0px;top:1081.3px;font-size:11.5px;line-height:1;white-space:pre;color:#111;">0.4718</span><span style="position:absolute;left:324.0px;top:1194.2px;font-size:11.5px;line-height:1;white-space:pre;color:#111;">0.5392</span><span style="position:absolute;left:324.0px;top:1307.1px;font-size:11.5px;line-height:1;white-space:pre;color:#111;">0.6066</span><span style="position:absolute;left:324.0px;top:1420.1px;font-size:11.5px;line-height:1;white-space:pre;color:#111;">0.674</span><span style="position:absolute;left:324.0px;top:1533.0px;font-size:11.5px;line-height:1;white-space:pre;color:#111;">0.7414</span><span style="position:absolute;left:324.0px;top:1645.9px;font-size:11.5px;line-height:1;white-space:pre;color:#111;">0.8088</span><span style="position:absolute;left:324.0px;top:1758.9px;font-size:11.5px;line-height:1;white-space:pre;color:#111;">0.8762</span><span style="position:absolute;left:324.0px;top:1871.8px;font-size:11.5px;line-height:1;white-space:pre;color:#111;">0.9436</span><span style="position:absolute;left:324.0px;top:1984.7px;font-size:11.5px;line-height:1;white-space:pre;color:#111;">1.011</span><span style="position:absolute;left:584.0px;top:248.5px;font-size:13px;line-height:1;white-space:pre;color:#e02020;">/ Side : 0L 0L F : 0.05 - 0.05</span><span style="position:absolute;left:296.0px;top:251.0px;font-size:13px;line-height:1;white-space:pre;color:#e02020;">S</span><span style="position:absolute;left:296.0px;top:276.5px;font-size:16px;line-height:1;white-space:pre;color:#111;">[</span><div style="position:absolute;left:3643px;top:246.5px;width:18px;height:15px;background:#d4d4d4;border:1px solid #444;box-sizing:border-box;"></div><span style="position:absolute;left:3647.3px;top:247.6px;font-size:14px;line-height:1;white-space:pre;color:#333;">Y</span><div style="position:absolute;left:3661px;top:246.5px;width:18px;height:15px;background:#d4d4d4;border:1px solid #444;box-sizing:border-box;"></div><span style="position:absolute;left:3664.9px;top:247.6px;font-size:14px;line-height:1;white-space:pre;color:#333;">N</span><div style="position:absolute;left:3679px;top:246.5px;width:18px;height:15px;background:#d4d4d4;border:1px solid #444;box-sizing:border-box;"></div><span style="position:absolute;left:3683.3px;top:247.6px;font-size:14px;line-height:1;white-space:pre;color:#333;">V</span><div style="position:absolute;left:37px;top:244px;width:250px;height:1827px;background:#b8bfcc;"></div><div style="position:absolute;left:38px;top:245px;width:248px;height:33px;background:linear-gradient(#c6ccd8,#b4bbc8 60%,#aab2c0);"></div><span style="position:absolute;left:41.2px;top:249.9px;font-size:17px;line-height:1;white-space:pre;color:#3c4856;transform:scaleX(0.9730);transform-origin:0 0;">Structure Tree</span><svg style="position:absolute;left:246px;top:251px;" width="14" height="18" viewBox="0 0 14 18"><path d="M4 2 H10 V10 M4 2 V10 M2 10 H12 M7 10 V17" fill="none" stroke="#7d8695" stroke-width="1.8"/><path d="M8 2 V10" stroke="#7d8695" stroke-width="2.6"/></svg><svg style="position:absolute;left:267px;top:252px;" width="14" height="14" viewBox="0 0 14 14"><path d="M1 1 L13 13 M13 1 L1 13" stroke="#7d8695" stroke-width="2.2"/></svg><div style="position:absolute;left:39px;top:278px;width:221.5px;height:1766px;background:#fff;overflow:hidden;"><svg style="position:absolute;left:0;top:0" width="222" height="1766"><path d="M17.3 14.5 H21.3M36.0 42.5 H40.0M48.7 70.5 H58.7M48.7 98.5 H58.7M36.0 126.5 H40.0M36.0 154.5 H40.0M54.7 182.5 H58.7M54.7 210.5 H58.7M54.7 238.5 H58.7M54.7 266.5 H58.7M48.7 294.5 H58.7M48.7 322.5 H58.7M54.7 350.5 H58.7M48.7 378.5 H58.7M54.7 406.5 H58.7M36.0 434.5 H40.0M54.7 462.5 H58.7M54.7 490.5 H58.7M73.5 518.5 H77.5M86.2 546.5 H96.2M86.2 574.5 H96.2M86.2 602.5 H96.2M86.2 630.5 H96.2M86.2 658.5 H96.2M54.7 686.5 H58.7M73.5 714.5 H77.5M86.2 742.5 H96.2M73.5 770.5 H77.5M86.2 798.5 H96.2M86.2 826.5 H96.2M86.2 854.5 H96.2M86.2 882.5 H96.2M54.7 910.5 H58.7M67.5 938.5 H77.5M67.5 966.5 H77.5M48.7 994.5 H58.7M48.7 1022.5 H58.7M54.7 1050.5 H58.7M36.0 1078.5 H40.0M48.7 1106.5 H58.7M54.7 1134.5 H58.7M67.5 1162.5 H77.5M67.5 1190.5 H77.5M48.7 1218.5 H58.7M48.7 1246.5 H58.7M48.7 1274.5 H58.7M17.3 1302.5 H21.3M30.0 1330.5 H40.0M30.0 1358.5 H40.0M36.0 1386.5 H40.0M36.0 1414.5 H40.0M36.0 1442.5 H40.0M36.0 1470.5 H40.0M36.0 1498.5 H40.0M36.0 1526.5 H40.0M36.0 1554.5 H40.0M36.0 1582.5 H40.0M36.0 1610.5 H40.0M36.0 1638.5 H40.0M36.0 1666.5 H40.0M36.0 1694.5 H40.0M36.0 1722.5 H40.0M36.0 1750.5 H40.0M30.0 23.5 V1078.5M48.7 51.5 V98.5M48.7 163.5 V406.5M48.7 443.5 V1050.5M67.5 499.5 V518.5M86.2 527.5 V658.5M67.5 695.5 V770.5M86.2 723.5 V742.5M86.2 779.5 V882.5M67.5 919.5 V966.5M48.7 1087.5 V1274.5M67.5 1143.5 V1190.5M30.0 1311.5 V1770.0M11.3 20.5 V1296.5" fill="none" stroke="#8a8a8a" stroke-width="1" stroke-dasharray="1 2"/></svg><svg style="position:absolute;left:5.3px;top:8.5px;" width="12" height="12" viewBox="0 0 12 12"><rect x="0.5" y="0.5" width="11" height="11" fill="#fff" stroke="#9a9a9a"/><path d="M3 6 H9" stroke="#3a4a9a" stroke-width="1.2"/></svg><svg style="position:absolute;left:21.8px;top:5.5px;" width="17" height="17" viewBox="0 0 16 16"><path d="M1 4 H6 L8 6 H15 V14 H1 Z" fill="#f6e68a" stroke="#8a7a20" stroke-width="1"/><path d="M2 1 L14 14" stroke="#0a3ad0" stroke-width="2"/><path d="M1 0 L15 15" stroke="#111" stroke-width=".8"/></svg><span style="position:absolute;left:43.9px;top:5.7px;font-size:18px;line-height:1;white-space:pre;color:#000;transform:scaleX(0.9792);transform-origin:0 0;">Design</span><svg style="position:absolute;left:24.02px;top:36.5px;" width="12" height="12" viewBox="0 0 12 12"><rect x="0.5" y="0.5" width="11" height="11" fill="#fff" stroke="#9a9a9a"/><path d="M3 6 H9" stroke="#3a4a9a" stroke-width="1.2"/></svg><svg style="position:absolute;left:40.52px;top:33.5px;" width="17" height="17" viewBox="0 0 16 16"><path d="M1 4 H6 L8 6 H15 V14 H1 Z" fill="#f6e68a" stroke="#8a7a20" stroke-width="1"/><rect x="8" y="7" width="7" height="7" fill="#0a5cf0"/></svg><span style="position:absolute;left:62.6px;top:33.7px;font-size:18px;line-height:1;white-space:pre;color:#000;transform:scaleX(0.9811);transform-origin:0 0;">Materials</span><svg style="position:absolute;left:59.24px;top:61.5px;" width="17" height="17" viewBox="0 0 16 16"><rect x="4" y="3" width="10" height="10" fill="#0a5cf0"/><path d="M4 13 H14 V3" fill="none" stroke="#003a9a" stroke-width="1.2"/></svg><span style="position:absolute;left:81.3px;top:61.7px;font-size:18px;line-height:1;white-space:pre;color:#000;transform:scaleX(0.9500);transform-origin:0 0;">C25 B420C</span><svg style="position:absolute;left:59.24px;top:89.5px;" width="17" height="17" viewBox="0 0 16 16"><rect x="4" y="3" width="10" height="10" fill="#0a5cf0"/><path d="M4 13 H14 V3" fill="none" stroke="#003a9a" stroke-width="1.2"/></svg><span style="position:absolute;left:81.3px;top:89.7px;font-size:18px;line-height:1;white-space:pre;color:#000;transform:scaleX(0.9500);transform-origin:0 0;">S235</span><svg style="position:absolute;left:24.02px;top:120.5px;" width="12" height="12" viewBox="0 0 12 12"><rect x="0.5" y="0.5" width="11" height="11" fill="#fff" stroke="#9a9a9a"/><path d="M3 6 H9" stroke="#3a4a9a" stroke-width="1.2"/><path d="M6 3 V9" stroke="#3a4a9a" stroke-width="1.2"/></svg><svg style="position:absolute;left:40.52px;top:117.5px;" width="17" height="17" viewBox="0 0 16 16"><path d="M1 4 H6 L8 6 H15 V14 H1 Z" fill="#f6e68a" stroke="#8a7a20" stroke-width="1"/><path d="M4 8 H12 M8 8 V13 M5 13 H11" stroke="#1010c0" stroke-width="1.6"/></svg><span style="position:absolute;left:62.6px;top:117.7px;font-size:18px;line-height:1;white-space:pre;color:#000;transform:scaleX(0.9806);transform-origin:0 0;">Sections</span><svg style="position:absolute;left:24.02px;top:148.5px;" width="12" height="12" viewBox="0 0 12 12"><rect x="0.5" y="0.5" width="11" height="11" fill="#fff" stroke="#9a9a9a"/><path d="M3 6 H9" stroke="#3a4a9a" stroke-width="1.2"/></svg><svg style="position:absolute;left:40.52px;top:145.5px;" width="17" height="17" viewBox="0 0 16 16"><path d="M1 4 H6 L8 6 H15 V14 H1 Z" fill="#f6e68a" stroke="#8a7a20" stroke-width="1"/><path d="M2 6 H14 M2 11 H14 M4 4 V15 M12 4 V15" stroke="#1010c0" stroke-width="1.8"/></svg><span style="position:absolute;left:62.6px;top:145.7px;font-size:18px;line-height:1;white-space:pre;color:#000;transform:scaleX(0.9796);transform-origin:0 0;">Analysis Model</span><svg style="position:absolute;left:42.74px;top:176.5px;" width="12" height="12" viewBox="0 0 12 12"><rect x="0.5" y="0.5" width="11" height="11" fill="#fff" stroke="#9a9a9a"/><path d="M3 6 H9" stroke="#3a4a9a" stroke-width="1.2"/><path d="M6 3 V9" stroke="#3a4a9a" stroke-width="1.2"/></svg><svg style="position:absolute;left:59.24px;top:173.5px;" width="17" height="17" viewBox="0 0 16 16"><path d="M1 4 H6 L8 6 H15 V14 H1 Z" fill="#f6e68a" stroke="#8a7a20" stroke-width="1"/><circle cx="8" cy="12" r="2.2" fill="#e01010"/></svg><span style="position:absolute;left:81.3px;top:173.7px;font-size:18px;line-height:1;white-space:pre;color:#000;transform:scaleX(0.9780);transform-origin:0 0;">Nodes</span><svg style="position:absolute;left:42.74px;top:204.5px;" width="12" height="12" viewBox="0 0 12 12"><rect x="0.5" y="0.5" width="11" height="11" fill="#fff" stroke="#9a9a9a"/><path d="M3 6 H9" stroke="#3a4a9a" stroke-width="1.2"/><path d="M6 3 V9" stroke="#3a4a9a" stroke-width="1.2"/></svg><svg style="position:absolute;left:59.24px;top:201.5px;" width="17" height="17" viewBox="0 0 16 16"><path d="M1 4 H6 L8 6 H15 V14 H1 Z" fill="#f6e68a" stroke="#8a7a20" stroke-width="1"/></svg><span style="position:absolute;left:81.3px;top:201.7px;font-size:18px;line-height:1;white-space:pre;color:#000;transform:scaleX(0.9806);transform-origin:0 0;">Elements</span><svg style="position:absolute;left:42.74px;top:232.5px;" width="12" height="12" viewBox="0 0 12 12"><rect x="0.5" y="0.5" width="11" height="11" fill="#fff" stroke="#9a9a9a"/><path d="M3 6 H9" stroke="#3a4a9a" stroke-width="1.2"/><path d="M6 3 V9" stroke="#3a4a9a" stroke-width="1.2"/></svg><svg style="position:absolute;left:59.24px;top:229.5px;" width="17" height="17" viewBox="0 0 16 16"><path d="M1 4 H6 L8 6 H15 V14 H1 Z" fill="#f6e68a" stroke="#8a7a20" stroke-width="1"/></svg><span style="position:absolute;left:81.3px;top:229.7px;font-size:18px;line-height:1;white-space:pre;color:#000;transform:scaleX(0.9792);transform-origin:0 0;">Shells</span><svg style="position:absolute;left:42.74px;top:260.5px;" width="12" height="12" viewBox="0 0 12 12"><rect x="0.5" y="0.5" width="11" height="11" fill="#fff" stroke="#9a9a9a"/><path d="M3 6 H9" stroke="#3a4a9a" stroke-width="1.2"/><path d="M6 3 V9" stroke="#3a4a9a" stroke-width="1.2"/></svg><svg style="position:absolute;left:59.24px;top:257.5px;" width="17" height="17" viewBox="0 0 16 16"><path d="M1 4 H6 L8 6 H15 V14 H1 Z" fill="#f6e68a" stroke="#8a7a20" stroke-width="1"/><path d="M3 13 H13 M5 9 V13 M8 8 V13 M11 9 V13" stroke="#108010" stroke-width="1.4"/></svg><span style="position:absolute;left:81.3px;top:257.7px;font-size:18px;line-height:1;white-space:pre;color:#000;transform:scaleX(0.9806);transform-origin:0 0;">Supports</span><svg style="position:absolute;left:59.24px;top:285.5px;" width="17" height="17" viewBox="0 0 16 16"><path d="M1 4 H6 L8 6 H15 V14 H1 Z" fill="#f6e68a" stroke="#8a7a20" stroke-width="1"/><circle cx="8" cy="12" r="2.2" fill="#e01010"/></svg><span style="position:absolute;left:81.3px;top:285.7px;font-size:18px;line-height:1;white-space:pre;color:#000;transform:scaleX(0.9800);transform-origin:0 0;">Punctual Masses</span><svg style="position:absolute;left:59.24px;top:313.5px;" width="17" height="17" viewBox="0 0 16 16"><path d="M1 4 H6 L8 6 H15 V14 H1 Z" fill="#f6e68a" stroke="#8a7a20" stroke-width="1"/><path d="M3 11 L4 8 L5 12 L6 8 L7 12 L8 8 L9 12 L10 8 L11 12 L12 8 L13 11" fill="none" stroke="#e03010" stroke-width="1"/></svg><span style="position:absolute;left:81.3px;top:313.7px;font-size:18px;line-height:1;white-space:pre;color:#000;transform:scaleX(0.9800);transform-origin:0 0;">Springs</span><svg style="position:absolute;left:42.74px;top:344.5px;" width="12" height="12" viewBox="0 0 12 12"><rect x="0.5" y="0.5" width="11" height="11" fill="#fff" stroke="#9a9a9a"/><path d="M3 6 H9" stroke="#3a4a9a" stroke-width="1.2"/><path d="M6 3 V9" stroke="#3a4a9a" stroke-width="1.2"/></svg><svg style="position:absolute;left:59.24px;top:341.5px;" width="17" height="17" viewBox="0 0 16 16"><path d="M1 4 H6 L8 6 H15 V14 H1 Z" fill="#f6e68a" stroke="#8a7a20" stroke-width="1"/><path d="M3 13 H13" stroke="#e01010" stroke-width="2"/></svg><span style="position:absolute;left:81.3px;top:341.7px;font-size:18px;line-height:1;white-space:pre;color:#000;transform:scaleX(0.9780);transform-origin:0 0;">Links</span><svg style="position:absolute;left:59.24px;top:369.5px;" width="17" height="17" viewBox="0 0 16 16"><path d="M1 4 H6 L8 6 H15 V14 H1 Z" fill="#f6e68a" stroke="#8a7a20" stroke-width="1"/><rect x="4" y="8" width="8" height="4" fill="none" stroke="#111"/><path d="M6 10 H10" stroke="#1010c0" stroke-width="1.4"/></svg><span style="position:absolute;left:81.3px;top:369.7px;font-size:18px;line-height:1;white-space:pre;color:#000;transform:scaleX(0.9811);transform-origin:0 0;">Dash-pots</span><svg style="position:absolute;left:42.74px;top:400.5px;" width="12" height="12" viewBox="0 0 12 12"><rect x="0.5" y="0.5" width="11" height="11" fill="#fff" stroke="#9a9a9a"/><path d="M3 6 H9" stroke="#3a4a9a" stroke-width="1.2"/><path d="M6 3 V9" stroke="#3a4a9a" stroke-width="1.2"/></svg><svg style="position:absolute;left:59.24px;top:397.5px;" width="17" height="17" viewBox="0 0 16 16"><path d="M1 4 H6 L8 6 H15 V14 H1 Z" fill="#f6e68a" stroke="#8a7a20" stroke-width="1"/><path d="M4 13 L7 9 H14 L11 13 Z" fill="none" stroke="#e01010" stroke-width="1.3"/><path d="M4 13 H11" stroke="#1010c0" stroke-width="1.5"/></svg><span style="position:absolute;left:81.3px;top:397.7px;font-size:18px;line-height:1;white-space:pre;color:#000;transform:scaleX(0.9815);transform-origin:0 0;">Diaphragms</span><svg style="position:absolute;left:24.02px;top:428.5px;" width="12" height="12" viewBox="0 0 12 12"><rect x="0.5" y="0.5" width="11" height="11" fill="#fff" stroke="#9a9a9a"/><path d="M3 6 H9" stroke="#3a4a9a" stroke-width="1.2"/></svg><svg style="position:absolute;left:40.52px;top:425.5px;" width="17" height="17" viewBox="0 0 16 16"><path d="M1 4 H6 L8 6 H15 V14 H1 Z" fill="#f6e68a" stroke="#8a7a20" stroke-width="1"/><path d="M2 6 H14 M2 11 H14 M4 4 V15 M12 4 V15" stroke="#1010c0" stroke-width="1.8"/></svg><span style="position:absolute;left:62.6px;top:425.7px;font-size:18px;line-height:1;white-space:pre;color:#000;transform:scaleX(0.9806);transform-origin:0 0;">Analysis</span><svg style="position:absolute;left:42.74px;top:456.5px;" width="12" height="12" viewBox="0 0 12 12"><rect x="0.5" y="0.5" width="11" height="11" fill="#fff" stroke="#9a9a9a"/><path d="M3 6 H9" stroke="#3a4a9a" stroke-width="1.2"/><path d="M6 3 V9" stroke="#3a4a9a" stroke-width="1.2"/></svg><svg style="position:absolute;left:59.24px;top:453.5px;" width="17" height="17" viewBox="0 0 16 16"><path d="M1 4 H6 L8 6 H15 V14 H1 Z" fill="#f6e68a" stroke="#8a7a20" stroke-width="1"/><path d="M3 13 V10 M6 13 V10 M9 13 V10 M12 13 V10 M2 13 H14" stroke="#c01010" stroke-width="1.3"/></svg><span style="position:absolute;left:81.3px;top:453.7px;font-size:18px;line-height:1;white-space:pre;color:#000;transform:scaleX(0.9800);transform-origin:0 0;">Static Analysis</span><svg style="position:absolute;left:42.74px;top:484.5px;" width="12" height="12" viewBox="0 0 12 12"><rect x="0.5" y="0.5" width="11" height="11" fill="#fff" stroke="#9a9a9a"/><path d="M3 6 H9" stroke="#3a4a9a" stroke-width="1.2"/></svg><svg style="position:absolute;left:59.24px;top:481.5px;" width="17" height="17" viewBox="0 0 16 16"><path d="M1 4 H6 L8 6 H15 V14 H1 Z" fill="#f6e68a" stroke="#8a7a20" stroke-width="1"/><path d="M6 5 L9 7 L7 10 Q8 12 11 12" fill="none" stroke="#111" stroke-width="1.5"/></svg><span style="position:absolute;left:81.3px;top:481.7px;font-size:18px;line-height:1;white-space:pre;color:#000;transform:scaleX(0.9796);transform-origin:0 0;">Modal Analysis</span><svg style="position:absolute;left:61.46px;top:512.5px;" width="12" height="12" viewBox="0 0 12 12"><rect x="0.5" y="0.5" width="11" height="11" fill="#fff" stroke="#9a9a9a"/><path d="M3 6 H9" stroke="#3a4a9a" stroke-width="1.2"/></svg><svg style="position:absolute;left:77.96px;top:509.5px;" width="17" height="17" viewBox="0 0 16 16"><path d="M3 3 L7 6 L4 10 Q6 13 10 13" fill="none" stroke="#111" stroke-width="1.3"/><path d="M2 14 H12" stroke="#c01818" stroke-width="1.4"/><path d="M12 9 V13 M10 11 H14" stroke="#c01818" stroke-width="1.3"/></svg><span style="position:absolute;left:100.1px;top:509.7px;font-size:18px;line-height:1;white-space:pre;color:#000;transform:scaleX(0.9796);transform-origin:0 0;">Modal Analysis</span><svg style="position:absolute;left:96.68px;top:537.5px;" width="17" height="17" viewBox="0 0 16 16"><path d="M3 3 L7 6 L4 10 Q6 13 10 13" fill="none" stroke="#111" stroke-width="1.3"/><path d="M2 14 H12" stroke="#c01818" stroke-width="1.4"/><path d="M12 9 V13 M10 11 H14" stroke="#c01818" stroke-width="1.3"/></svg><span style="position:absolute;left:118.8px;top:537.7px;font-size:18px;line-height:1;white-space:pre;color:#000;transform:scaleX(0.9700);transform-origin:0 0;">Modal E1</span><svg style="position:absolute;left:96.68px;top:565.5px;" width="17" height="17" viewBox="0 0 16 16"><path d="M3 3 L7 6 L4 10 Q6 13 10 13" fill="none" stroke="#111" stroke-width="1.3"/><path d="M2 14 H12" stroke="#c01818" stroke-width="1.4"/><path d="M12 9 V13 M10 11 H14" stroke="#c01818" stroke-width="1.3"/></svg><span style="position:absolute;left:118.8px;top:565.7px;font-size:18px;line-height:1;white-space:pre;color:#000;transform:scaleX(0.9700);transform-origin:0 0;">Modal E2</span><svg style="position:absolute;left:96.68px;top:593.5px;" width="17" height="17" viewBox="0 0 16 16"><path d="M3 3 L7 6 L4 10 Q6 13 10 13" fill="none" stroke="#111" stroke-width="1.3"/><path d="M2 14 H12" stroke="#c01818" stroke-width="1.4"/><path d="M12 9 V13 M10 11 H14" stroke="#c01818" stroke-width="1.3"/></svg><span style="position:absolute;left:118.8px;top:593.7px;font-size:18px;line-height:1;white-space:pre;color:#000;transform:scaleX(0.9700);transform-origin:0 0;">Modal E3</span><svg style="position:absolute;left:96.68px;top:621.5px;" width="17" height="17" viewBox="0 0 16 16"><path d="M3 3 L7 6 L4 10 Q6 13 10 13" fill="none" stroke="#111" stroke-width="1.3"/><path d="M2 14 H12" stroke="#c01818" stroke-width="1.4"/><path d="M12 9 V13 M10 11 H14" stroke="#c01818" stroke-width="1.3"/></svg><span style="position:absolute;left:118.8px;top:621.7px;font-size:18px;line-height:1;white-space:pre;color:#000;transform:scaleX(0.9700);transform-origin:0 0;">Modal E4</span><svg style="position:absolute;left:96.68px;top:649.5px;" width="17" height="17" viewBox="0 0 16 16"><path d="M3 3 L7 6 L4 10 Q6 13 10 13" fill="none" stroke="#111" stroke-width="1.3"/><path d="M2 14 H12" stroke="#c01818" stroke-width="1.4"/><path d="M12 9 V13 M10 11 H14" stroke="#c01818" stroke-width="1.3"/></svg><span style="position:absolute;left:118.8px;top:649.7px;font-size:18px;line-height:1;white-space:pre;color:#000;transform:scaleX(0.9792);transform-origin:0 0;">Modal&#x27;</span><svg style="position:absolute;left:42.74px;top:680.5px;" width="12" height="12" viewBox="0 0 12 12"><rect x="0.5" y="0.5" width="11" height="11" fill="#fff" stroke="#9a9a9a"/><path d="M3 6 H9" stroke="#3a4a9a" stroke-width="1.2"/></svg><svg style="position:absolute;left:59.24px;top:677.5px;" width="17" height="17" viewBox="0 0 16 16"><path d="M1 4 H6 L8 6 H15 V14 H1 Z" fill="#f6e68a" stroke="#8a7a20" stroke-width="1"/><path d="M3 13 L5 8 H15 L13 13 Z" fill="#fbf0a8" stroke="#111" stroke-width="1"/></svg><span style="position:absolute;left:81.3px;top:677.7px;font-size:18px;line-height:1;white-space:pre;color:#000;transform:scaleX(0.9803);transform-origin:0 0;">Response Spectru</span><svg style="position:absolute;left:61.46px;top:708.5px;" width="12" height="12" viewBox="0 0 12 12"><rect x="0.5" y="0.5" width="11" height="11" fill="#fff" stroke="#9a9a9a"/><path d="M3 6 H9" stroke="#3a4a9a" stroke-width="1.2"/></svg><svg style="position:absolute;left:77.96px;top:705.5px;" width="17" height="17" viewBox="0 0 16 16"><path d="M2 13 V4 L6 8 L9 5 L12 12 H2" fill="none" stroke="#8a1010" stroke-width="1.4"/><path d="M13 2 V7 M10.5 4.5 H15.5" stroke="#c01818" stroke-width="1.2"/></svg><span style="position:absolute;left:100.1px;top:705.7px;font-size:18px;line-height:1;white-space:pre;color:#000;transform:scaleX(0.9792);transform-origin:0 0;">Response Spec</span><svg style="position:absolute;left:96.68px;top:733.5px;" width="17" height="17" viewBox="0 0 16 16"><path d="M2 13 V4 L6 8 L9 5 L12 12 H2" fill="none" stroke="#8a1010" stroke-width="1.4"/></svg><span style="position:absolute;left:118.8px;top:733.7px;font-size:18px;line-height:1;white-space:pre;color:#000;transform:scaleX(0.9500);transform-origin:0 0;">RSF1</span><svg style="position:absolute;left:61.46px;top:764.5px;" width="12" height="12" viewBox="0 0 12 12"><rect x="0.5" y="0.5" width="11" height="11" fill="#fff" stroke="#9a9a9a"/><path d="M3 6 H9" stroke="#3a4a9a" stroke-width="1.2"/></svg><svg style="position:absolute;left:77.96px;top:761.5px;" width="17" height="17" viewBox="0 0 16 16"><path d="M2 13 V4 L6 8 L9 5 L12 12 H2" fill="none" stroke="#101060" stroke-width="1.4"/><path d="M13 2 V7 M10.5 4.5 H15.5" stroke="#c01818" stroke-width="1.2"/></svg><span style="position:absolute;left:100.1px;top:761.7px;font-size:18px;line-height:1;white-space:pre;color:#000;transform:scaleX(0.9792);transform-origin:0 0;">Response Spec</span><svg style="position:absolute;left:96.68px;top:789.5px;" width="17" height="17" viewBox="0 0 16 16"><path d="M2 13 V4 L6 8 L9 5 L12 12 H2" fill="none" stroke="#101060" stroke-width="1.4"/><path d="M13 2 V7 M10.5 4.5 H15.5" stroke="#c01818" stroke-width="1.2"/></svg><span style="position:absolute;left:118.8px;top:789.7px;font-size:18px;line-height:1;white-space:pre;color:#000;transform:scaleX(0.9675);transform-origin:0 0;">Ex</span><svg style="position:absolute;left:96.68px;top:817.5px;" width="17" height="17" viewBox="0 0 16 16"><path d="M2 13 V4 L6 8 L9 5 L12 12 H2" fill="none" stroke="#101060" stroke-width="1.4"/><path d="M13 2 V7 M10.5 4.5 H15.5" stroke="#c01818" stroke-width="1.2"/></svg><span style="position:absolute;left:118.8px;top:817.7px;font-size:18px;line-height:1;white-space:pre;color:#000;transform:scaleX(0.9675);transform-origin:0 0;">Ey</span><svg style="position:absolute;left:96.68px;top:845.5px;" width="17" height="17" viewBox="0 0 16 16"><path d="M2 13 V4 L6 8 L9 5 L12 12 H2" fill="none" stroke="#101060" stroke-width="1.4"/><path d="M13 2 V7 M10.5 4.5 H15.5" stroke="#c01818" stroke-width="1.2"/></svg><span style="position:absolute;left:118.8px;top:845.7px;font-size:18px;line-height:1;white-space:pre;color:#000;transform:scaleX(0.9733);transform-origin:0 0;">Ex&#x27;</span><svg style="position:absolute;left:96.68px;top:873.5px;" width="17" height="17" viewBox="0 0 16 16"><path d="M2 13 V4 L6 8 L9 5 L12 12 H2" fill="none" stroke="#101060" stroke-width="1.4"/><path d="M13 2 V7 M10.5 4.5 H15.5" stroke="#c01818" stroke-width="1.2"/></svg><span style="position:absolute;left:118.8px;top:873.7px;font-size:18px;line-height:1;white-space:pre;color:#000;transform:scaleX(0.9733);transform-origin:0 0;">Ey&#x27;</span><svg style="position:absolute;left:42.74px;top:904.5px;" width="12" height="12" viewBox="0 0 12 12"><rect x="0.5" y="0.5" width="11" height="11" fill="#fff" stroke="#9a9a9a"/><path d="M3 6 H9" stroke="#3a4a9a" stroke-width="1.2"/></svg><svg style="position:absolute;left:59.24px;top:901.5px;" width="17" height="17" viewBox="0 0 16 16"><path d="M1 4 H6 L8 6 H15 V14 H1 Z" fill="#f6e68a" stroke="#8a7a20" stroke-width="1"/><path d="M3 11 L5 8 L7 12 L9 8 L11 12 L13 9" fill="none" stroke="#1010a0" stroke-width="1.2"/></svg><span style="position:absolute;left:81.3px;top:901.7px;font-size:18px;line-height:1;white-space:pre;color:#000;transform:scaleX(0.9780);transform-origin:0 0;">Time History Anal</span><svg style="position:absolute;left:77.96px;top:929.5px;" width="17" height="17" viewBox="0 0 16 16"><path d="M2 13 V3 M2 13 H13" stroke="#c01818" stroke-width="1.3"/><path d="M4 11 V6 M6 11 V5 M8 11 V7 M10 11 V5" stroke="#c01818" stroke-width="1"/><path d="M13 1 V6 M11 3.5 H15" stroke="#c01818"/></svg><span style="position:absolute;left:100.1px;top:929.7px;font-size:18px;line-height:1;white-space:pre;color:#000;transform:scaleX(0.9769);transform-origin:0 0;">Time History Fu</span><svg style="position:absolute;left:77.96px;top:957.5px;" width="17" height="17" viewBox="0 0 16 16"><path d="M2 13 V3 M2 13 H13" stroke="#101060" stroke-width="1.3"/><path d="M3 10 L5 6 L7 11 L9 6 L11 10" fill="none" stroke="#1010a0" stroke-width="1"/><path d="M13 1 V6 M11 3.5 H15" stroke="#c01818"/></svg><span style="position:absolute;left:100.1px;top:957.7px;font-size:18px;line-height:1;white-space:pre;color:#000;transform:scaleX(0.9769);transform-origin:0 0;">Time History Ca</span><svg style="position:absolute;left:59.24px;top:985.5px;" width="17" height="17" viewBox="0 0 16 16"><path d="M1 4 H6 L8 6 H15 V14 H1 Z" fill="#f6e68a" stroke="#8a7a20" stroke-width="1"/><rect x="3" y="8" width="10" height="5" fill="#e04010"/><path d="M3 5 H13" stroke="#111" stroke-width="1.6"/></svg><span style="position:absolute;left:81.3px;top:985.7px;font-size:18px;line-height:1;white-space:pre;color:#000;transform:scaleX(0.9806);transform-origin:0 0;">Pushover Analysis</span><svg style="position:absolute;left:59.24px;top:1013.5px;" width="17" height="17" viewBox="0 0 16 16"><path d="M1 4 H6 L8 6 H15 V14 H1 Z" fill="#f6e68a" stroke="#8a7a20" stroke-width="1"/><path d="M6 5 L9 7 L7 10 Q8 12 11 12" fill="none" stroke="#111" stroke-width="1.5"/></svg><span style="position:absolute;left:81.3px;top:1013.7px;font-size:18px;line-height:1;white-space:pre;color:#000;transform:scaleX(0.9784);transform-origin:0 0;">Euler Buckling Ana</span><svg style="position:absolute;left:42.74px;top:1044.5px;" width="12" height="12" viewBox="0 0 12 12"><rect x="0.5" y="0.5" width="11" height="11" fill="#fff" stroke="#9a9a9a"/><path d="M3 6 H9" stroke="#3a4a9a" stroke-width="1.2"/><path d="M6 3 V9" stroke="#3a4a9a" stroke-width="1.2"/></svg><svg style="position:absolute;left:59.24px;top:1041.5px;" width="17" height="17" viewBox="0 0 16 16"><path d="M1 4 H6 L8 6 H15 V14 H1 Z" fill="#f6e68a" stroke="#8a7a20" stroke-width="1"/><path d="M3 10 H13 M5 8 L3 10 L5 12 M11 8 L13 10 L11 12" fill="none" stroke="#1010c0" stroke-width="1.2"/><circle cx="8" cy="10" r="1.5" fill="#e01010"/></svg><span style="position:absolute;left:81.3px;top:1041.7px;font-size:18px;line-height:1;white-space:pre;color:#000;transform:scaleX(0.9803);transform-origin:0 0;">Load Combination</span><svg style="position:absolute;left:24.02px;top:1072.5px;" width="12" height="12" viewBox="0 0 12 12"><rect x="0.5" y="0.5" width="11" height="11" fill="#fff" stroke="#9a9a9a"/><path d="M3 6 H9" stroke="#3a4a9a" stroke-width="1.2"/></svg><svg style="position:absolute;left:40.52px;top:1069.5px;" width="17" height="17" viewBox="0 0 16 16"><path d="M4 11 L7 5 H14 L11 11 Z" fill="#555" stroke="#111" stroke-width="1"/><path d="M5 9 H12 M6 7 H13" stroke="#ddd" stroke-width=".8"/></svg><span style="position:absolute;left:62.6px;top:1069.7px;font-size:18px;line-height:1;white-space:pre;color:#000;transform:scaleX(0.9806);transform-origin:0 0;">Drawings</span><svg style="position:absolute;left:59.24px;top:1097.5px;" width="17" height="17" viewBox="0 0 16 16"><path d="M5 2.5 H11 L13.5 5 V13.5 H5 Z" fill="#fff" stroke="#111" stroke-width="1.5"/></svg><span style="position:absolute;left:81.3px;top:1097.7px;font-size:18px;line-height:1;white-space:pre;color:#000;transform:scaleX(0.9500);transform-origin:0 0;">STORY 1</span><svg style="position:absolute;left:42.74px;top:1128.5px;" width="12" height="12" viewBox="0 0 12 12"><rect x="0.5" y="0.5" width="11" height="11" fill="#fff" stroke="#9a9a9a"/><path d="M3 6 H9" stroke="#3a4a9a" stroke-width="1.2"/></svg><svg style="position:absolute;left:59.24px;top:1125.5px;" width="17" height="17" viewBox="0 0 16 16"><path d="M5 2.5 H11 L13.5 5 V13.5 H5 Z" fill="#fff" stroke="#111" stroke-width="1.5"/></svg><span style="position:absolute;left:81.3px;top:1125.7px;font-size:18px;line-height:1;white-space:pre;color:#000;transform:scaleX(0.9500);transform-origin:0 0;">BASE STORY</span><svg style="position:absolute;left:77.96px;top:1153.5px;" width="17" height="17" viewBox="0 0 16 16"><rect x="3" y="2" width="10" height="12" fill="#fff" stroke="#111" stroke-width="1.6"/><rect x="3" y="2" width="6" height="5" fill="#111"/><path d="M3 9 H9" stroke="#111" stroke-width="1.4"/></svg><span style="position:absolute;left:100.1px;top:1153.7px;font-size:18px;line-height:1;white-space:pre;color:#000;transform:scaleX(0.9742);transform-origin:0 0;">Elevation G1 / G</span><svg style="position:absolute;left:77.96px;top:1181.5px;" width="17" height="17" viewBox="0 0 16 16"><rect x="3" y="2" width="10" height="12" fill="#fff" stroke="#111" stroke-width="1.6"/><rect x="3" y="2" width="6" height="5" fill="#111"/><path d="M3 9 H9" stroke="#111" stroke-width="1.4"/></svg><span style="position:absolute;left:100.1px;top:1181.7px;font-size:18px;line-height:1;white-space:pre;color:#000;transform:scaleX(0.9733);transform-origin:0 0;">Section 1 / 1-1</span><svg style="position:absolute;left:59.24px;top:1209.5px;" width="17" height="17" viewBox="0 0 16 16"><path d="M4 11 L7 5 H14 L11 11 Z" fill="#555" stroke="#111" stroke-width="1"/><path d="M5 9 H12 M6 7 H13" stroke="#ddd" stroke-width=".8"/></svg><span style="position:absolute;left:81.3px;top:1209.7px;font-size:18px;line-height:1;white-space:pre;color:#000;transform:scaleX(0.9803);transform-origin:0 0;">Concrete Drawing</span><svg style="position:absolute;left:59.24px;top:1237.5px;" width="17" height="17" viewBox="0 0 16 16"><path d="M4 11 L7 5 H14 L11 11 Z" fill="#555" stroke="#111" stroke-width="1"/><path d="M5 9 H12 M6 7 H13" stroke="#ddd" stroke-width=".8"/></svg><span style="position:absolute;left:81.3px;top:1237.7px;font-size:18px;line-height:1;white-space:pre;color:#000;transform:scaleX(0.9796);transform-origin:0 0;">Steel Drawings</span><svg style="position:absolute;left:59.24px;top:1265.5px;" width="17" height="17" viewBox="0 0 16 16"><path d="M4 11 L7 5 H14 L11 11 Z" fill="#555" stroke="#111" stroke-width="1"/><path d="M5 9 H12 M6 7 H13" stroke="#ddd" stroke-width=".8"/></svg><span style="position:absolute;left:81.3px;top:1265.7px;font-size:18px;line-height:1;white-space:pre;color:#000;transform:scaleX(0.9796);transform-origin:0 0;">Other Drawings</span><svg style="position:absolute;left:5.3px;top:1296.5px;" width="12" height="12" viewBox="0 0 12 12"><rect x="0.5" y="0.5" width="11" height="11" fill="#fff" stroke="#9a9a9a"/><path d="M3 6 H9" stroke="#3a4a9a" stroke-width="1.2"/></svg><svg style="position:absolute;left:21.8px;top:1293.5px;" width="17" height="17" viewBox="0 0 16 16"><path d="M1 4 H6 L8 6 H15 V14 H1 Z" fill="#f6e68a" stroke="#8a7a20" stroke-width="1"/></svg><span style="position:absolute;left:43.9px;top:1293.7px;font-size:18px;line-height:1;white-space:pre;color:#000;transform:scaleX(0.9800);transform-origin:0 0;">Results</span><svg style="position:absolute;left:40.52px;top:1321.5px;" width="17" height="17" viewBox="0 0 16 16"><path d="M5 2.5 H11 L13.5 5 V13.5 H5 Z" fill="#fff" stroke="#111" stroke-width="1.5"/></svg><span style="position:absolute;left:62.6px;top:1321.7px;font-size:18px;line-height:1;white-space:pre;color:#000;transform:scaleX(0.9796);transform-origin:0 0;">Project Errors</span><svg style="position:absolute;left:40.52px;top:1349.5px;" width="17" height="17" viewBox="0 0 16 16"><path d="M5 2.5 H11 L13.5 5 V13.5 H5 Z" fill="#fff" stroke="#111" stroke-width="1.5"/></svg><span style="position:absolute;left:62.6px;top:1349.7px;font-size:18px;line-height:1;white-space:pre;color:#000;transform:scaleX(0.9806);transform-origin:0 0;">Structure Summary</span><svg style="position:absolute;left:24.02px;top:1380.5px;" width="12" height="12" viewBox="0 0 12 12"><rect x="0.5" y="0.5" width="11" height="11" fill="#fff" stroke="#9a9a9a"/><path d="M3 6 H9" stroke="#3a4a9a" stroke-width="1.2"/><path d="M6 3 V9" stroke="#3a4a9a" stroke-width="1.2"/></svg><svg style="position:absolute;left:40.52px;top:1377.5px;" width="17" height="17" viewBox="0 0 16 16"><path d="M5 2.5 H11 L13.5 5 V13.5 H5 Z" fill="#fff" stroke="#111" stroke-width="1.5"/></svg><span style="position:absolute;left:62.6px;top:1377.7px;font-size:18px;line-height:1;white-space:pre;color:#000;transform:scaleX(0.9811);transform-origin:0 0;">Introduction Inform</span><svg style="position:absolute;left:24.02px;top:1408.5px;" width="12" height="12" viewBox="0 0 12 12"><rect x="0.5" y="0.5" width="11" height="11" fill="#fff" stroke="#9a9a9a"/><path d="M3 6 H9" stroke="#3a4a9a" stroke-width="1.2"/><path d="M6 3 V9" stroke="#3a4a9a" stroke-width="1.2"/></svg><svg style="position:absolute;left:40.52px;top:1405.5px;" width="17" height="17" viewBox="0 0 16 16"><path d="M5 2.5 H11 L13.5 5 V13.5 H5 Z" fill="#fff" stroke="#111" stroke-width="1.5"/></svg><span style="position:absolute;left:62.6px;top:1405.7px;font-size:18px;line-height:1;white-space:pre;color:#000;transform:scaleX(0.9792);transform-origin:0 0;">Building Stories And</span><svg style="position:absolute;left:24.02px;top:1436.5px;" width="12" height="12" viewBox="0 0 12 12"><rect x="0.5" y="0.5" width="11" height="11" fill="#fff" stroke="#9a9a9a"/><path d="M3 6 H9" stroke="#3a4a9a" stroke-width="1.2"/><path d="M6 3 V9" stroke="#3a4a9a" stroke-width="1.2"/></svg><svg style="position:absolute;left:40.52px;top:1433.5px;" width="17" height="17" viewBox="0 0 16 16"><path d="M5 2.5 H11 L13.5 5 V13.5 H5 Z" fill="#fff" stroke="#111" stroke-width="1.5"/></svg><span style="position:absolute;left:62.6px;top:1433.7px;font-size:18px;line-height:1;white-space:pre;color:#000;transform:scaleX(0.9803);transform-origin:0 0;">Dynamic Analysis</span><svg style="position:absolute;left:24.02px;top:1464.5px;" width="12" height="12" viewBox="0 0 12 12"><rect x="0.5" y="0.5" width="11" height="11" fill="#fff" stroke="#9a9a9a"/><path d="M3 6 H9" stroke="#3a4a9a" stroke-width="1.2"/><path d="M6 3 V9" stroke="#3a4a9a" stroke-width="1.2"/></svg><svg style="position:absolute;left:40.52px;top:1461.5px;" width="17" height="17" viewBox="0 0 16 16"><path d="M5 2.5 H11 L13.5 5 V13.5 H5 Z" fill="#fff" stroke="#111" stroke-width="1.5"/></svg><span style="position:absolute;left:62.6px;top:1461.7px;font-size:18px;line-height:1;white-space:pre;color:#000;transform:scaleX(0.9817);transform-origin:0 0;">Building Irregularitie</span><svg style="position:absolute;left:24.02px;top:1492.5px;" width="12" height="12" viewBox="0 0 12 12"><rect x="0.5" y="0.5" width="11" height="11" fill="#fff" stroke="#9a9a9a"/><path d="M3 6 H9" stroke="#3a4a9a" stroke-width="1.2"/><path d="M6 3 V9" stroke="#3a4a9a" stroke-width="1.2"/></svg><svg style="position:absolute;left:40.52px;top:1489.5px;" width="17" height="17" viewBox="0 0 16 16"><path d="M5 2.5 H11 L13.5 5 V13.5 H5 Z" fill="#fff" stroke="#111" stroke-width="1.5"/></svg><span style="position:absolute;left:62.6px;top:1489.7px;font-size:18px;line-height:1;white-space:pre;color:#000;transform:scaleX(0.9780);transform-origin:0 0;">Slabs</span><svg style="position:absolute;left:24.02px;top:1520.5px;" width="12" height="12" viewBox="0 0 12 12"><rect x="0.5" y="0.5" width="11" height="11" fill="#fff" stroke="#9a9a9a"/><path d="M3 6 H9" stroke="#3a4a9a" stroke-width="1.2"/><path d="M6 3 V9" stroke="#3a4a9a" stroke-width="1.2"/></svg><svg style="position:absolute;left:40.52px;top:1517.5px;" width="17" height="17" viewBox="0 0 16 16"><path d="M5 2.5 H11 L13.5 5 V13.5 H5 Z" fill="#fff" stroke="#111" stroke-width="1.5"/></svg><span style="position:absolute;left:62.6px;top:1517.7px;font-size:18px;line-height:1;white-space:pre;color:#000;transform:scaleX(0.9780);transform-origin:0 0;">Beams</span><svg style="position:absolute;left:24.02px;top:1548.5px;" width="12" height="12" viewBox="0 0 12 12"><rect x="0.5" y="0.5" width="11" height="11" fill="#fff" stroke="#9a9a9a"/><path d="M3 6 H9" stroke="#3a4a9a" stroke-width="1.2"/><path d="M6 3 V9" stroke="#3a4a9a" stroke-width="1.2"/></svg><svg style="position:absolute;left:40.52px;top:1545.5px;" width="17" height="17" viewBox="0 0 16 16"><path d="M5 2.5 H11 L13.5 5 V13.5 H5 Z" fill="#fff" stroke="#111" stroke-width="1.5"/></svg><span style="position:absolute;left:62.6px;top:1545.7px;font-size:18px;line-height:1;white-space:pre;color:#000;transform:scaleX(0.9800);transform-origin:0 0;">Columns</span><svg style="position:absolute;left:24.02px;top:1576.5px;" width="12" height="12" viewBox="0 0 12 12"><rect x="0.5" y="0.5" width="11" height="11" fill="#fff" stroke="#9a9a9a"/><path d="M3 6 H9" stroke="#3a4a9a" stroke-width="1.2"/><path d="M6 3 V9" stroke="#3a4a9a" stroke-width="1.2"/></svg><svg style="position:absolute;left:40.52px;top:1573.5px;" width="17" height="17" viewBox="0 0 16 16"><path d="M5 2.5 H11 L13.5 5 V13.5 H5 Z" fill="#fff" stroke="#111" stroke-width="1.5"/></svg><span style="position:absolute;left:62.6px;top:1573.7px;font-size:18px;line-height:1;white-space:pre;color:#000;transform:scaleX(0.9815);transform-origin:0 0;">Shearwalls</span><svg style="position:absolute;left:24.02px;top:1604.5px;" width="12" height="12" viewBox="0 0 12 12"><rect x="0.5" y="0.5" width="11" height="11" fill="#fff" stroke="#9a9a9a"/><path d="M3 6 H9" stroke="#3a4a9a" stroke-width="1.2"/><path d="M6 3 V9" stroke="#3a4a9a" stroke-width="1.2"/></svg><svg style="position:absolute;left:40.52px;top:1601.5px;" width="17" height="17" viewBox="0 0 16 16"><path d="M5 2.5 H11 L13.5 5 V13.5 H5 Z" fill="#fff" stroke="#111" stroke-width="1.5"/></svg><span style="position:absolute;left:62.6px;top:1601.7px;font-size:18px;line-height:1;white-space:pre;color:#000;transform:scaleX(0.9803);transform-origin:0 0;">Compound Shearwa</span><svg style="position:absolute;left:24.02px;top:1632.5px;" width="12" height="12" viewBox="0 0 12 12"><rect x="0.5" y="0.5" width="11" height="11" fill="#fff" stroke="#9a9a9a"/><path d="M3 6 H9" stroke="#3a4a9a" stroke-width="1.2"/><path d="M6 3 V9" stroke="#3a4a9a" stroke-width="1.2"/></svg><svg style="position:absolute;left:40.52px;top:1629.5px;" width="17" height="17" viewBox="0 0 16 16"><path d="M5 2.5 H11 L13.5 5 V13.5 H5 Z" fill="#fff" stroke="#111" stroke-width="1.5"/></svg><span style="position:absolute;left:62.6px;top:1629.7px;font-size:18px;line-height:1;white-space:pre;color:#000;transform:scaleX(0.9786);transform-origin:0 0;">Joint Safety</span><svg style="position:absolute;left:24.02px;top:1660.5px;" width="12" height="12" viewBox="0 0 12 12"><rect x="0.5" y="0.5" width="11" height="11" fill="#fff" stroke="#9a9a9a"/><path d="M3 6 H9" stroke="#3a4a9a" stroke-width="1.2"/><path d="M6 3 V9" stroke="#3a4a9a" stroke-width="1.2"/></svg><svg style="position:absolute;left:40.52px;top:1657.5px;" width="17" height="17" viewBox="0 0 16 16"><path d="M5 2.5 H11 L13.5 5 V13.5 H5 Z" fill="#fff" stroke="#111" stroke-width="1.5"/></svg><span style="position:absolute;left:62.6px;top:1657.7px;font-size:18px;line-height:1;white-space:pre;color:#000;transform:scaleX(0.9803);transform-origin:0 0;">Strip Foundation</span><svg style="position:absolute;left:24.02px;top:1688.5px;" width="12" height="12" viewBox="0 0 12 12"><rect x="0.5" y="0.5" width="11" height="11" fill="#fff" stroke="#9a9a9a"/><path d="M3 6 H9" stroke="#3a4a9a" stroke-width="1.2"/><path d="M6 3 V9" stroke="#3a4a9a" stroke-width="1.2"/></svg><svg style="position:absolute;left:40.52px;top:1685.5px;" width="17" height="17" viewBox="0 0 16 16"><path d="M5 2.5 H11 L13.5 5 V13.5 H5 Z" fill="#fff" stroke="#111" stroke-width="1.5"/></svg><span style="position:absolute;left:62.6px;top:1685.7px;font-size:18px;line-height:1;white-space:pre;color:#000;transform:scaleX(0.9800);transform-origin:0 0;">Single Footings</span><svg style="position:absolute;left:24.02px;top:1716.5px;" width="12" height="12" viewBox="0 0 12 12"><rect x="0.5" y="0.5" width="11" height="11" fill="#fff" stroke="#9a9a9a"/><path d="M3 6 H9" stroke="#3a4a9a" stroke-width="1.2"/><path d="M6 3 V9" stroke="#3a4a9a" stroke-width="1.2"/></svg><svg style="position:absolute;left:40.52px;top:1713.5px;" width="17" height="17" viewBox="0 0 16 16"><path d="M5 2.5 H11 L13.5 5 V13.5 H5 Z" fill="#fff" stroke="#111" stroke-width="1.5"/></svg><span style="position:absolute;left:62.6px;top:1713.7px;font-size:18px;line-height:1;white-space:pre;color:#000;transform:scaleX(0.9803);transform-origin:0 0;">Foundation Slabs</span><svg style="position:absolute;left:24.02px;top:1744.5px;" width="12" height="12" viewBox="0 0 12 12"><rect x="0.5" y="0.5" width="11" height="11" fill="#fff" stroke="#9a9a9a"/><path d="M3 6 H9" stroke="#3a4a9a" stroke-width="1.2"/><path d="M6 3 V9" stroke="#3a4a9a" stroke-width="1.2"/></svg><svg style="position:absolute;left:40.52px;top:1741.5px;" width="17" height="17" viewBox="0 0 16 16"><path d="M5 2.5 H11 L13.5 5 V13.5 H5 Z" fill="#fff" stroke="#111" stroke-width="1.5"/></svg><span style="position:absolute;left:62.6px;top:1741.7px;font-size:18px;line-height:1;white-space:pre;color:#000;transform:scaleX(0.9809);transform-origin:0 0;">Foundation Couplin</span></div><div style="position:absolute;left:260.5px;top:278px;width:25px;height:1766px;background:#f0f0f0;"></div><svg style="position:absolute;left:266px;top:286px;" width="14" height="9" viewBox="0 0 14 9"><path d="M1 8 L7 2 L13 8" fill="none" stroke="#505050" stroke-width="3"/></svg><div style="position:absolute;left:260.5px;top:304px;width:24px;height:1532px;background:#c9c9c9;"></div><svg style="position:absolute;left:266px;top:2027px;" width="14" height="9" viewBox="0 0 14 9"><path d="M1 1 L7 7 L13 1" fill="none" stroke="#505050" stroke-width="3"/></svg><div style="position:absolute;left:39px;top:2044px;width:246.5px;height:25.5px;background:#f0f0f0;"></div><svg style="position:absolute;left:46px;top:2050px;" width="9" height="14" viewBox="0 0 9 14"><path d="M8 1 L2 7 L8 13" fill="none" stroke="#505050" stroke-width="3"/></svg><div style="position:absolute;left:65px;top:2044.5px;width:78px;height:24px;background:#c9c9c9;"></div><svg style="position:absolute;left:240px;top:2050px;" width="9" height="14" viewBox="0 0 9 14"><path d="M1 1 L7 7 L1 13" fill="none" stroke="#505050" stroke-width="3"/></svg><div style="position:absolute;left:3698px;top:245px;width:142px;height:1853px;background:#cfd5e0;"></div><div style="position:absolute;left:3702px;top:247px;width:27px;height:151px;background:linear-gradient(90deg,#fdf0bc,#fbdd86 60%,#f8cf6a);border:1px solid #e8c878;border-left:none;box-sizing:border-box;"></div><span style="position:absolute;left:3729px;top:250px;transform:rotate(90deg);transform-origin:0 0;font-size:18px;line-height:27px;color:#555e6a;white-space:pre;">Report Preview</span><div style="position:absolute;left:3731px;top:243.5px;width:35px;height:693.5px;background:linear-gradient(90deg,#e6e9f0,#d6dbe4 60%,#c8ceda);border-radius:6px;"></div><div style="position:absolute;left:3731px;top:920px;width:35px;height:17px;background:#b4bac6;border-radius:0 0 8px 8px;"></div><svg style="position:absolute;left:3753px;top:924px;" width="10" height="9" viewBox="0 0 10 9"><path d="M1 0 V8 M4 0 L9 4 L4 8 Z" fill="#8a92a0" stroke="#8a92a0"/></svg><div style="position:absolute;left:3741px;top:248px;width:2px;height:2px;background:#8b93a1;"></div><div style="position:absolute;left:3745px;top:248px;width:2px;height:2px;background:#8b93a1;"></div><div style="position:absolute;left:3749px;top:248px;width:2px;height:2px;background:#8b93a1;"></div><div style="position:absolute;left:3753px;top:248px;width:2px;height:2px;background:#8b93a1;"></div><svg style="position:absolute;left:3736px;top:255px;" width="26" height="26" viewBox="0 0 24 24"><path d="M3 8 L11 4 L19 8 L11 12 Z M3 8 V14 L11 18 L19 14 V8" fill="#bbb" stroke="#111" stroke-width="1.4"/><path d="M11 13 L20 22 L22 20 L14 11 Z" fill="#1c2f7a" stroke="#111" stroke-width=".8"/><path d="M20 22 L23 23 L22 20 Z" fill="#111"/></svg><svg style="position:absolute;left:3736px;top:287.2px;" width="26" height="26" viewBox="0 0 24 24"><rect x="3" y="5" width="16" height="12" fill="#fff" stroke="#111" stroke-width="1.8"/><rect x="7" y="8" width="8" height="6" fill="#999" stroke="#111"/><path d="M11 13 L20 22 L22 20 L14 11 Z" fill="#1c2f7a" stroke="#111" stroke-width=".8"/><path d="M20 22 L23 23 L22 20 Z" fill="#111"/></svg><svg style="position:absolute;left:3736px;top:319.4px;" width="26" height="26" viewBox="0 0 24 24"><path d="M3 9 H9 L11 6 H15 L17 9 H21 V12 H3 Z" fill="#fff" stroke="#111" stroke-width="1.6"/><path d="M6 12 L8 18 M18 12 L16 18" stroke="#111" stroke-width="1.6"/><path d="M11 13 L20 22 L22 20 L14 11 Z" fill="#1c2f7a" stroke="#111" stroke-width=".8"/><path d="M20 22 L23 23 L22 20 Z" fill="#111"/></svg><svg style="position:absolute;left:3736px;top:351.6px;" width="26" height="26" viewBox="0 0 24 24"><path d="M4 19 L8 7 H14 L18 19 Z" fill="#fff" stroke="#111" stroke-width="1.8"/><path d="M11 13 L20 22 L22 20 L14 11 Z" fill="#1c2f7a" stroke="#111" stroke-width=".8"/><path d="M20 22 L23 23 L22 20 Z" fill="#111"/></svg><svg style="position:absolute;left:3736px;top:383.8px;" width="26" height="26" viewBox="0 0 24 24"><path d="M3 6 H19 V12 H14 L12 16 L10 12 H3 Z" fill="#fff" stroke="#111" stroke-width="1.8"/><path d="M11 13 L20 22 L22 20 L14 11 Z" fill="#1c2f7a" stroke="#111" stroke-width=".8"/><path d="M20 22 L23 23 L22 20 Z" fill="#111"/></svg><svg style="position:absolute;left:3736px;top:416px;" width="26" height="26" viewBox="0 0 24 24"><path d="M3 19 V5 H8 V11 H14 V15 H19 V19 Z" fill="#fff" stroke="#111" stroke-width="1.8"/><path d="M11 13 L20 22 L22 20 L14 11 Z" fill="#1c2f7a" stroke="#111" stroke-width=".8"/><path d="M20 22 L23 23 L22 20 Z" fill="#111"/></svg><svg style="position:absolute;left:3736px;top:448.2px;" width="26" height="26" viewBox="0 0 24 24"><rect x="3" y="4" width="14" height="12" fill="#fff" stroke="#111" stroke-width="1.8"/><path d="M3 8 H17 M3 12 H17 M8 4 V16 M12 4 V16" stroke="#111" stroke-width="1.2"/><path d="M11 13 L20 22 L22 20 L14 11 Z" fill="#1c2f7a" stroke="#111" stroke-width=".8"/><path d="M20 22 L23 23 L22 20 Z" fill="#111"/></svg><svg style="position:absolute;left:3736px;top:480.4px;" width="26" height="26" viewBox="0 0 24 24"><path d="M3 5 H9 V9 H15 V13 H21 V19 H3 Z" fill="#222" stroke="#111"/><path d="M5 7 H7 M5 11 H13 M5 15 H19" stroke="#ddd" stroke-width="1.2"/><path d="M11 13 L20 22 L22 20 L14 11 Z" fill="#1c2f7a" stroke="#111" stroke-width=".8"/><path d="M20 22 L23 23 L22 20 Z" fill="#111"/></svg><svg style="position:absolute;left:3736px;top:512.6px;" width="26" height="26" viewBox="0 0 24 24"><path d="M4 19 L8 7 H14 L18 19 Z" fill="#fff" stroke="#111" stroke-width="1.8"/><path d="M11 13 L20 22 L22 20 L14 11 Z" fill="#1c2f7a" stroke="#111" stroke-width=".8"/><path d="M20 22 L23 23 L22 20 Z" fill="#111"/></svg><svg style="position:absolute;left:3736px;top:544.8px;" width="26" height="26" viewBox="0 0 24 24"><rect x="3" y="5" width="16" height="12" fill="#fff" stroke="#111" stroke-width="1.8"/><rect x="7" y="8" width="8" height="6" fill="#999" stroke="#111"/><path d="M11 13 L20 22 L22 20 L14 11 Z" fill="#1c2f7a" stroke="#111" stroke-width=".8"/><path d="M20 22 L23 23 L22 20 Z" fill="#111"/></svg><svg style="position:absolute;left:3736px;top:577px;" width="26" height="26" viewBox="0 0 24 24"><path d="M12 3 V21 M3 12 H21" stroke="#111" stroke-width="2"/><circle cx="12" cy="12" r="3.4" fill="#fff" stroke="#111" stroke-width="1.6"/><path d="M11 13 L20 22 L22 20 L14 11 Z" fill="#1c2f7a" stroke="#111" stroke-width=".8"/><path d="M20 22 L23 23 L22 20 Z" fill="#111"/></svg><svg style="position:absolute;left:3736px;top:609.2px;" width="26" height="26" viewBox="0 0 24 24"><path d="M3 8 L11 4 L19 8 L11 12 Z M3 8 V14 L11 18 L19 14 V8" fill="#bbb" stroke="#111" stroke-width="1.4"/><path d="M11 13 L20 22 L22 20 L14 11 Z" fill="#1c2f7a" stroke="#111" stroke-width=".8"/><path d="M20 22 L23 23 L22 20 Z" fill="#111"/></svg><svg style="position:absolute;left:3736px;top:641.4px;" width="26" height="26" viewBox="0 0 24 24"><path d="M3 4 H13 V8 H17 V12 H3 Z" fill="#333"/><path d="M3 14 H19 V18 H3 Z" fill="#333"/><path d="M11 13 L20 22 L22 20 L14 11 Z" fill="#1c2f7a" stroke="#111" stroke-width=".8"/><path d="M20 22 L23 23 L22 20 Z" fill="#111"/></svg><svg style="position:absolute;left:3736px;top:673.6px;" width="26" height="26" viewBox="0 0 24 24"><rect x="3" y="4" width="15" height="15" fill="#345a7c" stroke="#111"/><path d="M3 9 H18 M3 14 H18 M8 4 V19 M13 4 V19" stroke="#9fc0dc" stroke-width="1.1"/><path d="M11 13 L20 22 L22 20 L14 11 Z" fill="#1c2f7a" stroke="#111" stroke-width=".8"/><path d="M20 22 L23 23 L22 20 Z" fill="#111"/></svg><svg style="position:absolute;left:3736px;top:705.8px;" width="26" height="26" viewBox="0 0 24 24"><path d="M3 8 L11 4 L19 8 L11 12 Z M3 8 V14 L11 18 L19 14 V8" fill="#bbb" stroke="#111" stroke-width="1.4"/><path d="M11 13 L20 22 L22 20 L14 11 Z" fill="#1c2f7a" stroke="#111" stroke-width=".8"/><path d="M20 22 L23 23 L22 20 Z" fill="#111"/></svg><svg style="position:absolute;left:3736px;top:738px;" width="26" height="26" viewBox="0 0 24 24"><path d="M3 17 Q11 2 19 17 Z" fill="#fff" stroke="#111" stroke-width="1.7"/><path d="M7 17 L9 11 M11 17 V9 M15 17 L13 11" stroke="#111" stroke-width="1.2"/><path d="M11 13 L20 22 L22 20 L14 11 Z" fill="#1c2f7a" stroke="#111" stroke-width=".8"/><path d="M20 22 L23 23 L22 20 Z" fill="#111"/></svg><svg style="position:absolute;left:3736px;top:770.2px;" width="26" height="26" viewBox="0 0 24 24"><path d="M3 19 V5 H8 V11 H14 V15 H19 V19 Z" fill="#fff" stroke="#111" stroke-width="1.8"/><path d="M11 13 L20 22 L22 20 L14 11 Z" fill="#1c2f7a" stroke="#111" stroke-width=".8"/><path d="M20 22 L23 23 L22 20 Z" fill="#111"/></svg><svg style="position:absolute;left:3736px;top:802.4px;" width="26" height="26" viewBox="0 0 24 24"><path d="M3 19 V5 H8 V11 H14 V15 H19 V19 Z" fill="#fff" stroke="#111" stroke-width="1.8"/><path d="M11 13 L20 22 L22 20 L14 11 Z" fill="#1c2f7a" stroke="#111" stroke-width=".8"/><path d="M20 22 L23 23 L22 20 Z" fill="#111"/></svg><svg style="position:absolute;left:3736px;top:834.6px;" width="26" height="26" viewBox="0 0 24 24"><rect x="3" y="4" width="15" height="15" fill="#345a7c" stroke="#111"/><path d="M3 9 H18 M3 14 H18 M8 4 V19 M13 4 V19" stroke="#9fc0dc" stroke-width="1.1"/><path d="M11 13 L20 22 L22 20 L14 11 Z" fill="#1c2f7a" stroke="#111" stroke-width=".8"/><path d="M20 22 L23 23 L22 20 Z" fill="#111"/></svg><svg style="position:absolute;left:3736px;top:866.8px;" width="26" height="26" viewBox="0 0 24 24"><path d="M3 5 H9 V9 H15 V13 H21 V19 H3 Z" fill="#222" stroke="#111"/><path d="M5 7 H7 M5 11 H13 M5 15 H19" stroke="#ddd" stroke-width="1.2"/><path d="M11 13 L20 22 L22 20 L14 11 Z" fill="#1c2f7a" stroke="#111" stroke-width=".8"/><path d="M20 22 L23 23 L22 20 Z" fill="#111"/></svg><svg style="position:absolute;left:3736px;top:899px;" width="26" height="26" viewBox="0 0 24 24"><rect x="3" y="3" width="5" height="17" fill="#777" stroke="#111" stroke-width="1.3"/><path d="M10 18 L18 6" stroke="#111" stroke-width="2"/><path d="M11 13 L20 22 L22 20 L14 11 Z" fill="#1c2f7a" stroke="#111" stroke-width=".8"/><path d="M20 22 L23 23 L22 20 Z" fill="#111"/></svg><div style="position:absolute;left:3767px;top:243.5px;width:35px;height:693.5px;background:linear-gradient(90deg,#e6e9f0,#d6dbe4 60%,#c8ceda);border-radius:6px;"></div><div style="position:absolute;left:3767px;top:920px;width:35px;height:17px;background:#b4bac6;border-radius:0 0 8px 8px;"></div><svg style="position:absolute;left:3789px;top:924px;" width="10" height="9" viewBox="0 0 10 9"><path d="M1 0 V8 M4 0 L9 4 L4 8 Z" fill="#8a92a0" stroke="#8a92a0"/></svg><div style="position:absolute;left:3777px;top:248px;width:2px;height:2px;background:#8b93a1;"></div><div style="position:absolute;left:3781px;top:248px;width:2px;height:2px;background:#8b93a1;"></div><div style="position:absolute;left:3785px;top:248px;width:2px;height:2px;background:#8b93a1;"></div><div style="position:absolute;left:3789px;top:248px;width:2px;height:2px;background:#8b93a1;"></div><svg style="position:absolute;left:3772px;top:255px;" width="26" height="26" viewBox="0 0 24 24"><path d="M17 2 H22 V7" fill="none" stroke="#20c8d8" stroke-width="1.5"/><path d="M2 17 V22 H7" fill="none" stroke="#20c8d8" stroke-width="1.5"/><path d="M3 6 H19 V12 H14 L12 16 L10 12 H3 Z" fill="#fff" stroke="#111" stroke-width="1.8"/></svg><svg style="position:absolute;left:3772px;top:287.2px;" width="26" height="26" viewBox="0 0 24 24"><path d="M17 2 H22 V7" fill="none" stroke="#20c8d8" stroke-width="1.5"/><path d="M2 17 V22 H7" fill="none" stroke="#20c8d8" stroke-width="1.5"/><path d="M4 19 L8 7 H14 L18 19 Z" fill="#fff" stroke="#111" stroke-width="1.8"/></svg><svg style="position:absolute;left:3772px;top:319.4px;" width="26" height="26" viewBox="0 0 24 24"><path d="M17 2 H22 V7" fill="none" stroke="#20c8d8" stroke-width="1.5"/><path d="M2 17 V22 H7" fill="none" stroke="#20c8d8" stroke-width="1.5"/><path d="M3 6 H19 V12 H14 L12 16 L10 12 H3 Z" fill="#fff" stroke="#111" stroke-width="1.8"/></svg><svg style="position:absolute;left:3772px;top:351.6px;" width="26" height="26" viewBox="0 0 24 24"><path d="M17 2 H22 V7" fill="none" stroke="#20c8d8" stroke-width="1.5"/><path d="M2 17 V22 H7" fill="none" stroke="#20c8d8" stroke-width="1.5"/><rect x="3" y="4" width="15" height="15" fill="#345a7c" stroke="#111"/><path d="M3 9 H18 M3 14 H18 M8 4 V19 M13 4 V19" stroke="#9fc0dc" stroke-width="1.1"/></svg><svg style="position:absolute;left:3772px;top:383.8px;" width="26" height="26" viewBox="0 0 24 24"><path d="M17 2 H22 V7" fill="none" stroke="#20c8d8" stroke-width="1.5"/><path d="M2 17 V22 H7" fill="none" stroke="#20c8d8" stroke-width="1.5"/><rect x="3" y="4" width="14" height="12" fill="#fff" stroke="#111" stroke-width="1.8"/><path d="M3 8 H17 M3 12 H17 M8 4 V16 M12 4 V16" stroke="#111" stroke-width="1.2"/></svg><svg style="position:absolute;left:3772px;top:416px;" width="26" height="26" viewBox="0 0 24 24"><path d="M17 2 H22 V7" fill="none" stroke="#20c8d8" stroke-width="1.5"/><path d="M2 17 V22 H7" fill="none" stroke="#20c8d8" stroke-width="1.5"/><path d="M4 19 H14 V5 H9 V14 H4 Z" fill="#333" stroke="#111"/></svg><svg style="position:absolute;left:3772px;top:448.2px;" width="26" height="26" viewBox="0 0 24 24"><path d="M17 2 H22 V7" fill="none" stroke="#20c8d8" stroke-width="1.5"/><path d="M2 17 V22 H7" fill="none" stroke="#20c8d8" stroke-width="1.5"/><path d="M3 8 L11 4 L19 8 L11 12 Z M3 8 V14 L11 18 L19 14 V8" fill="#bbb" stroke="#111" stroke-width="1.4"/></svg><svg style="position:absolute;left:3772px;top:480.4px;" width="26" height="26" viewBox="0 0 24 24"><path d="M17 2 H22 V7" fill="none" stroke="#20c8d8" stroke-width="1.5"/><path d="M2 17 V22 H7" fill="none" stroke="#20c8d8" stroke-width="1.5"/><rect x="3" y="5" width="16" height="12" fill="#fff" stroke="#111" stroke-width="1.8"/><rect x="7" y="8" width="8" height="6" fill="#999" stroke="#111"/></svg><svg style="position:absolute;left:3772px;top:512.6px;" width="26" height="26" viewBox="0 0 24 24"><path d="M17 2 H22 V7" fill="none" stroke="#20c8d8" stroke-width="1.5"/><path d="M2 17 V22 H7" fill="none" stroke="#20c8d8" stroke-width="1.5"/><path d="M3 6 H19 V12 H14 L12 16 L10 12 H3 Z" fill="#fff" stroke="#111" stroke-width="1.8"/></svg><svg style="position:absolute;left:3772px;top:544.8px;" width="26" height="26" viewBox="0 0 24 24"><path d="M17 2 H22 V7" fill="none" stroke="#20c8d8" stroke-width="1.5"/><path d="M2 17 V22 H7" fill="none" stroke="#20c8d8" stroke-width="1.5"/><path d="M3 9 H9 L11 6 H15 L17 9 H21 V12 H3 Z" fill="#fff" stroke="#111" stroke-width="1.6"/><path d="M6 12 L8 18 M18 12 L16 18" stroke="#111" stroke-width="1.6"/></svg><svg style="position:absolute;left:3772px;top:577px;" width="26" height="26" viewBox="0 0 24 24"><path d="M17 2 H22 V7" fill="none" stroke="#20c8d8" stroke-width="1.5"/><path d="M2 17 V22 H7" fill="none" stroke="#20c8d8" stroke-width="1.5"/><path d="M3 5 H19 M5 5 V19 M9 5 V19 M13 5 V19 M17 5 V19" stroke="#111" stroke-width="2"/></svg><svg style="position:absolute;left:3772px;top:609.2px;" width="26" height="26" viewBox="0 0 24 24"><path d="M17 2 H22 V7" fill="none" stroke="#20c8d8" stroke-width="1.5"/><path d="M2 17 V22 H7" fill="none" stroke="#20c8d8" stroke-width="1.5"/><path d="M4 19 L8 7 H14 L18 19 Z" fill="#fff" stroke="#111" stroke-width="1.8"/></svg><svg style="position:absolute;left:3772px;top:641.4px;" width="26" height="26" viewBox="0 0 24 24"><path d="M17 2 H22 V7" fill="none" stroke="#20c8d8" stroke-width="1.5"/><path d="M2 17 V22 H7" fill="none" stroke="#20c8d8" stroke-width="1.5"/><path d="M3 8 L11 4 L19 8 L11 12 Z M3 8 V14 L11 18 L19 14 V8" fill="#bbb" stroke="#111" stroke-width="1.4"/></svg><svg style="position:absolute;left:3772px;top:673.6px;" width="26" height="26" viewBox="0 0 24 24"><path d="M17 2 H22 V7" fill="none" stroke="#20c8d8" stroke-width="1.5"/><path d="M2 17 V22 H7" fill="none" stroke="#20c8d8" stroke-width="1.5"/><rect x="3" y="4" width="14" height="12" fill="#fff" stroke="#111" stroke-width="1.8"/><path d="M3 8 H17 M3 12 H17 M8 4 V16 M12 4 V16" stroke="#111" stroke-width="1.2"/></svg><svg style="position:absolute;left:3772px;top:705.8px;" width="26" height="26" viewBox="0 0 24 24"><path d="M17 2 H22 V7" fill="none" stroke="#20c8d8" stroke-width="1.5"/><path d="M2 17 V22 H7" fill="none" stroke="#20c8d8" stroke-width="1.5"/><rect x="3" y="5" width="16" height="12" fill="#fff" stroke="#111" stroke-width="1.8"/><rect x="7" y="8" width="8" height="6" fill="#999" stroke="#111"/></svg><svg style="position:absolute;left:3772px;top:738px;" width="26" height="26" viewBox="0 0 24 24"><path d="M17 2 H22 V7" fill="none" stroke="#20c8d8" stroke-width="1.5"/><path d="M2 17 V22 H7" fill="none" stroke="#20c8d8" stroke-width="1.5"/><path d="M12 3 V21 M3 12 H21" stroke="#111" stroke-width="2"/><circle cx="12" cy="12" r="3.4" fill="#fff" stroke="#111" stroke-width="1.6"/></svg><svg style="position:absolute;left:3772px;top:770.2px;" width="26" height="26" viewBox="0 0 24 24"><path d="M17 2 H22 V7" fill="none" stroke="#20c8d8" stroke-width="1.5"/><path d="M2 17 V22 H7" fill="none" stroke="#20c8d8" stroke-width="1.5"/><path d="M12 3 V21 M3 12 H21" stroke="#111" stroke-width="2"/><circle cx="12" cy="12" r="3.4" fill="#fff" stroke="#111" stroke-width="1.6"/></svg><svg style="position:absolute;left:3772px;top:802.4px;" width="26" height="26" viewBox="0 0 24 24"><path d="M17 2 H22 V7" fill="none" stroke="#20c8d8" stroke-width="1.5"/><path d="M2 17 V22 H7" fill="none" stroke="#20c8d8" stroke-width="1.5"/><rect x="3" y="5" width="16" height="12" fill="#fff" stroke="#111" stroke-width="1.8"/><rect x="7" y="8" width="8" height="6" fill="#999" stroke="#111"/></svg><svg style="position:absolute;left:3772px;top:834.6px;" width="26" height="26" viewBox="0 0 24 24"><path d="M17 2 H22 V7" fill="none" stroke="#20c8d8" stroke-width="1.5"/><path d="M2 17 V22 H7" fill="none" stroke="#20c8d8" stroke-width="1.5"/><path d="M3 4 H13 V8 H17 V12 H3 Z" fill="#333"/><path d="M3 14 H19 V18 H3 Z" fill="#333"/></svg><svg style="position:absolute;left:3772px;top:866.8px;" width="26" height="26" viewBox="0 0 24 24"><path d="M17 2 H22 V7" fill="none" stroke="#20c8d8" stroke-width="1.5"/><path d="M2 17 V22 H7" fill="none" stroke="#20c8d8" stroke-width="1.5"/><path d="M12 3 V21 M3 12 H21" stroke="#111" stroke-width="2"/><circle cx="12" cy="12" r="3.4" fill="#fff" stroke="#111" stroke-width="1.6"/></svg><svg style="position:absolute;left:3772px;top:899px;" width="26" height="26" viewBox="0 0 24 24"><path d="M17 2 H22 V7" fill="none" stroke="#20c8d8" stroke-width="1.5"/><path d="M2 17 V22 H7" fill="none" stroke="#20c8d8" stroke-width="1.5"/><rect x="3" y="5" width="16" height="12" fill="#fff" stroke="#111" stroke-width="1.8"/><rect x="7" y="8" width="8" height="6" fill="#999" stroke="#111"/></svg><div style="position:absolute;left:3767px;top:944px;width:35px;height:476px;background:linear-gradient(90deg,#e6e9f0,#d6dbe4 60%,#c8ceda);border-radius:6px;"></div><div style="position:absolute;left:3767px;top:1403px;width:35px;height:17px;background:#b4bac6;border-radius:0 0 8px 8px;"></div><svg style="position:absolute;left:3789px;top:1407px;" width="10" height="9" viewBox="0 0 10 9"><path d="M1 0 V8 M4 0 L9 4 L4 8 Z" fill="#8a92a0" stroke="#8a92a0"/></svg><div style="position:absolute;left:3777px;top:948.5px;width:2px;height:2px;background:#8b93a1;"></div><div style="position:absolute;left:3781px;top:948.5px;width:2px;height:2px;background:#8b93a1;"></div><div style="position:absolute;left:3785px;top:948.5px;width:2px;height:2px;background:#8b93a1;"></div><div style="position:absolute;left:3789px;top:948.5px;width:2px;height:2px;background:#8b93a1;"></div><svg style="position:absolute;left:3772px;top:952px;" width="26" height="26" viewBox="0 0 24 24"><path d="M17 2 H22 V7" fill="none" stroke="#e8d020" stroke-width="1.5"/><path d="M2 17 V22 H7" fill="none" stroke="#e8d020" stroke-width="1.5"/><path d="M5 20 V9 L9 4 L13 9 V20 Z" fill="#fff" stroke="#111" stroke-width="1.7"/><path d="M3 20 H17" stroke="#111" stroke-width="2"/></svg><svg style="position:absolute;left:3772px;top:984.2px;" width="26" height="26" viewBox="0 0 24 24"><path d="M17 2 H22 V7" fill="none" stroke="#e8d020" stroke-width="1.5"/><path d="M2 17 V22 H7" fill="none" stroke="#e8d020" stroke-width="1.5"/><path d="M3 17 Q11 2 19 17 Z" fill="#fff" stroke="#111" stroke-width="1.7"/><path d="M7 17 L9 11 M11 17 V9 M15 17 L13 11" stroke="#111" stroke-width="1.2"/></svg><svg style="position:absolute;left:3772px;top:1016.4px;" width="26" height="26" viewBox="0 0 24 24"><path d="M17 2 H22 V7" fill="none" stroke="#e8d020" stroke-width="1.5"/><path d="M2 17 V22 H7" fill="none" stroke="#e8d020" stroke-width="1.5"/><path d="M3 5 H19 M5 5 V19 M9 5 V19 M13 5 V19 M17 5 V19" stroke="#111" stroke-width="2"/></svg><svg style="position:absolute;left:3772px;top:1048.6px;" width="26" height="26" viewBox="0 0 24 24"><path d="M17 2 H22 V7" fill="none" stroke="#e8d020" stroke-width="1.5"/><path d="M2 17 V22 H7" fill="none" stroke="#e8d020" stroke-width="1.5"/><path d="M3 8 L11 4 L19 8 L11 12 Z M3 8 V14 L11 18 L19 14 V8" fill="#bbb" stroke="#111" stroke-width="1.4"/></svg><svg style="position:absolute;left:3772px;top:1080.8px;" width="26" height="26" viewBox="0 0 24 24"><path d="M17 2 H22 V7" fill="none" stroke="#e8d020" stroke-width="1.5"/><path d="M2 17 V22 H7" fill="none" stroke="#e8d020" stroke-width="1.5"/><path d="M4 19 L8 7 H14 L18 19 Z" fill="#fff" stroke="#111" stroke-width="1.8"/></svg><svg style="position:absolute;left:3772px;top:1113px;" width="26" height="26" viewBox="0 0 24 24"><path d="M17 2 H22 V7" fill="none" stroke="#e8d020" stroke-width="1.5"/><path d="M2 17 V22 H7" fill="none" stroke="#e8d020" stroke-width="1.5"/><path d="M12 3 V21 M3 12 H21" stroke="#111" stroke-width="2"/><circle cx="12" cy="12" r="3.4" fill="#fff" stroke="#111" stroke-width="1.6"/></svg><svg style="position:absolute;left:3772px;top:1145.2px;" width="26" height="26" viewBox="0 0 24 24"><path d="M17 2 H22 V7" fill="none" stroke="#e8d020" stroke-width="1.5"/><path d="M2 17 V22 H7" fill="none" stroke="#e8d020" stroke-width="1.5"/><path d="M3 8 L11 4 L19 8 L11 12 Z M3 8 V14 L11 18 L19 14 V8" fill="#bbb" stroke="#111" stroke-width="1.4"/></svg><svg style="position:absolute;left:3772px;top:1177.4px;" width="26" height="26" viewBox="0 0 24 24"><path d="M17 2 H22 V7" fill="none" stroke="#e8d020" stroke-width="1.5"/><path d="M2 17 V22 H7" fill="none" stroke="#e8d020" stroke-width="1.5"/><path d="M3 8 L11 4 L19 8 L11 12 Z M3 8 V14 L11 18 L19 14 V8" fill="#bbb" stroke="#111" stroke-width="1.4"/></svg><svg style="position:absolute;left:3772px;top:1209.6px;" width="26" height="26" viewBox="0 0 24 24"><path d="M17 2 H22 V7" fill="none" stroke="#e8d020" stroke-width="1.5"/><path d="M2 17 V22 H7" fill="none" stroke="#e8d020" stroke-width="1.5"/><rect x="3" y="5" width="16" height="12" fill="#fff" stroke="#111" stroke-width="1.8"/><rect x="7" y="8" width="8" height="6" fill="#999" stroke="#111"/></svg><svg style="position:absolute;left:3772px;top:1241.8px;" width="26" height="26" viewBox="0 0 24 24"><path d="M17 2 H22 V7" fill="none" stroke="#e8d020" stroke-width="1.5"/><path d="M2 17 V22 H7" fill="none" stroke="#e8d020" stroke-width="1.5"/><path d="M3 5 H19 M5 5 V19 M9 5 V19 M13 5 V19 M17 5 V19" stroke="#111" stroke-width="2"/></svg><svg style="position:absolute;left:3772px;top:1274px;" width="26" height="26" viewBox="0 0 24 24"><path d="M17 2 H22 V7" fill="none" stroke="#e8d020" stroke-width="1.5"/><path d="M2 17 V22 H7" fill="none" stroke="#e8d020" stroke-width="1.5"/><rect x="3" y="3" width="5" height="17" fill="#777" stroke="#111" stroke-width="1.3"/><path d="M10 18 L18 6" stroke="#111" stroke-width="2"/></svg><svg style="position:absolute;left:3772px;top:1306.2px;" width="26" height="26" viewBox="0 0 24 24"><path d="M17 2 H22 V7" fill="none" stroke="#e8d020" stroke-width="1.5"/><path d="M2 17 V22 H7" fill="none" stroke="#e8d020" stroke-width="1.5"/><path d="M4 19 L8 7 H14 L18 19 Z" fill="#fff" stroke="#111" stroke-width="1.8"/></svg><svg style="position:absolute;left:3772px;top:1338.4px;" width="26" height="26" viewBox="0 0 24 24"><path d="M17 2 H22 V7" fill="none" stroke="#e8d020" stroke-width="1.5"/><path d="M2 17 V22 H7" fill="none" stroke="#e8d020" stroke-width="1.5"/><path d="M3 5 H9 V9 H15 V13 H21 V19 H3 Z" fill="#222" stroke="#111"/><path d="M5 7 H7 M5 11 H13 M5 15 H19" stroke="#ddd" stroke-width="1.2"/></svg><svg style="position:absolute;left:3772px;top:1370.6px;" width="26" height="26" viewBox="0 0 24 24"><path d="M17 2 H22 V7" fill="none" stroke="#e8d020" stroke-width="1.5"/><path d="M2 17 V22 H7" fill="none" stroke="#e8d020" stroke-width="1.5"/><rect x="3" y="4" width="15" height="15" fill="#345a7c" stroke="#111"/><path d="M3 9 H18 M3 14 H18 M8 4 V19 M13 4 V19" stroke="#9fc0dc" stroke-width="1.1"/></svg><div style="position:absolute;left:3804px;top:243.5px;width:35px;height:1004.5px;background:linear-gradient(90deg,#e6e9f0,#d6dbe4 60%,#c8ceda);border-radius:6px;"></div><div style="position:absolute;left:3804px;top:1231px;width:35px;height:17px;background:#b4bac6;border-radius:0 0 8px 8px;"></div><svg style="position:absolute;left:3826px;top:1235px;" width="10" height="9" viewBox="0 0 10 9"><path d="M1 0 V8 M4 0 L9 4 L4 8 Z" fill="#8a92a0" stroke="#8a92a0"/></svg><div style="position:absolute;left:3814px;top:248px;width:2px;height:2px;background:#8b93a1;"></div><div style="position:absolute;left:3818px;top:248px;width:2px;height:2px;background:#8b93a1;"></div><div style="position:absolute;left:3822px;top:248px;width:2px;height:2px;background:#8b93a1;"></div><div style="position:absolute;left:3826px;top:248px;width:2px;height:2px;background:#8b93a1;"></div><svg style="position:absolute;left:3809px;top:255px;" width="26" height="26" viewBox="0 0 24 24"><path d="M3 5 H9 V9 H15 V13 H21 V19 H3 Z" fill="#222" stroke="#111"/><path d="M5 7 H7 M5 11 H13 M5 15 H19" stroke="#ddd" stroke-width="1.2"/><path d="M12 12 H20 L23 15 V23 H12 Z" fill="#fff" stroke="#111" stroke-width="1.6"/><path d="M15 18 H20 M15 20.5 H20" stroke="#111" stroke-width="1.2"/></svg><div style="position:absolute;left:3810px;top:284.2px;width:23px;height:1px;background:#9aa2b0;"></div><svg style="position:absolute;left:3809px;top:291.2px;" width="26" height="26" viewBox="0 0 24 24"><path d="M3 19 V5 H8 V11 H14 V15 H19 V19 Z" fill="#fff" stroke="#111" stroke-width="1.8"/><path d="M12 12 H20 L23 15 V23 H12 Z" fill="#fff" stroke="#111" stroke-width="1.6"/><path d="M15 18 H20 M15 20.5 H20" stroke="#111" stroke-width="1.2"/></svg><svg style="position:absolute;left:3809px;top:323.4px;" width="26" height="26" viewBox="0 0 24 24"><path d="M3 5 H19 M5 5 V19 M9 5 V19 M13 5 V19 M17 5 V19" stroke="#111" stroke-width="2"/><path d="M12 12 H20 L23 15 V23 H12 Z" fill="#fff" stroke="#111" stroke-width="1.6"/><path d="M15 18 H20 M15 20.5 H20" stroke="#111" stroke-width="1.2"/></svg><svg style="position:absolute;left:3809px;top:355.6px;" width="26" height="26" viewBox="0 0 24 24"><path d="M3 19 V5 H8 V11 H14 V15 H19 V19 Z" fill="#fff" stroke="#111" stroke-width="1.8"/><path d="M12 12 H20 L23 15 V23 H12 Z" fill="#fff" stroke="#111" stroke-width="1.6"/><path d="M15 18 H20 M15 20.5 H20" stroke="#111" stroke-width="1.2"/></svg><svg style="position:absolute;left:3809px;top:387.8px;" width="26" height="26" viewBox="0 0 24 24"><path d="M3 5 H19 M5 5 V19 M9 5 V19 M13 5 V19 M17 5 V19" stroke="#111" stroke-width="2"/><path d="M12 12 H20 L23 15 V23 H12 Z" fill="#fff" stroke="#111" stroke-width="1.6"/><path d="M15 18 H20 M15 20.5 H20" stroke="#111" stroke-width="1.2"/></svg><svg style="position:absolute;left:3809px;top:420px;" width="26" height="26" viewBox="0 0 24 24"><path d="M3 17 Q11 2 19 17 Z" fill="#fff" stroke="#111" stroke-width="1.7"/><path d="M7 17 L9 11 M11 17 V9 M15 17 L13 11" stroke="#111" stroke-width="1.2"/><path d="M12 12 H20 L23 15 V23 H12 Z" fill="#fff" stroke="#111" stroke-width="1.6"/><path d="M15 18 H20 M15 20.5 H20" stroke="#111" stroke-width="1.2"/></svg><div style="position:absolute;left:3810px;top:449.2px;width:23px;height:1px;background:#9aa2b0;"></div><svg style="position:absolute;left:3809px;top:456.2px;" width="26" height="26" viewBox="0 0 24 24"><rect x="3" y="4" width="14" height="12" fill="#fff" stroke="#111" stroke-width="1.8"/><path d="M3 8 H17 M3 12 H17 M8 4 V16 M12 4 V16" stroke="#111" stroke-width="1.2"/><path d="M12 12 H20 L23 15 V23 H12 Z" fill="#fff" stroke="#111" stroke-width="1.6"/><path d="M15 18 H20 M15 20.5 H20" stroke="#111" stroke-width="1.2"/></svg><svg style="position:absolute;left:3809px;top:488.4px;" width="26" height="26" viewBox="0 0 24 24"><rect x="3" y="5" width="16" height="12" fill="#fff" stroke="#111" stroke-width="1.8"/><rect x="7" y="8" width="8" height="6" fill="#999" stroke="#111"/><path d="M12 12 H20 L23 15 V23 H12 Z" fill="#fff" stroke="#111" stroke-width="1.6"/><path d="M15 18 H20 M15 20.5 H20" stroke="#111" stroke-width="1.2"/></svg><svg style="position:absolute;left:3809px;top:520.6px;" width="26" height="26" viewBox="0 0 24 24"><path d="M3 9 H9 L11 6 H15 L17 9 H21 V12 H3 Z" fill="#fff" stroke="#111" stroke-width="1.6"/><path d="M6 12 L8 18 M18 12 L16 18" stroke="#111" stroke-width="1.6"/><path d="M12 12 H20 L23 15 V23 H12 Z" fill="#fff" stroke="#111" stroke-width="1.6"/><path d="M15 18 H20 M15 20.5 H20" stroke="#111" stroke-width="1.2"/></svg><svg style="position:absolute;left:3809px;top:552.8px;" width="26" height="26" viewBox="0 0 24 24"><rect x="3" y="4" width="14" height="12" fill="#fff" stroke="#111" stroke-width="1.8"/><path d="M3 8 H17 M3 12 H17 M8 4 V16 M12 4 V16" stroke="#111" stroke-width="1.2"/><path d="M12 12 H20 L23 15 V23 H12 Z" fill="#fff" stroke="#111" stroke-width="1.6"/><path d="M15 18 H20 M15 20.5 H20" stroke="#111" stroke-width="1.2"/></svg><svg style="position:absolute;left:3809px;top:585px;" width="26" height="26" viewBox="0 0 24 24"><path d="M3 5 H19 M5 5 V19 M9 5 V19 M13 5 V19 M17 5 V19" stroke="#111" stroke-width="2"/><path d="M12 12 H20 L23 15 V23 H12 Z" fill="#fff" stroke="#111" stroke-width="1.6"/><path d="M15 18 H20 M15 20.5 H20" stroke="#111" stroke-width="1.2"/></svg><svg style="position:absolute;left:3809px;top:617.2px;" width="26" height="26" viewBox="0 0 24 24"><path d="M4 19 H14 V5 H9 V14 H4 Z" fill="#333" stroke="#111"/><path d="M12 12 H20 L23 15 V23 H12 Z" fill="#fff" stroke="#111" stroke-width="1.6"/><path d="M15 18 H20 M15 20.5 H20" stroke="#111" stroke-width="1.2"/></svg><svg style="position:absolute;left:3809px;top:649.4px;" width="26" height="26" viewBox="0 0 24 24"><path d="M3 5 H19 M5 5 V19 M9 5 V19 M13 5 V19 M17 5 V19" stroke="#111" stroke-width="2"/><path d="M12 12 H20 L23 15 V23 H12 Z" fill="#fff" stroke="#111" stroke-width="1.6"/><path d="M15 18 H20 M15 20.5 H20" stroke="#111" stroke-width="1.2"/></svg><svg style="position:absolute;left:3809px;top:681.6px;" width="26" height="26" viewBox="0 0 24 24"><path d="M3 6 H19 V12 H14 L12 16 L10 12 H3 Z" fill="#fff" stroke="#111" stroke-width="1.8"/><path d="M12 12 H20 L23 15 V23 H12 Z" fill="#fff" stroke="#111" stroke-width="1.6"/><path d="M15 18 H20 M15 20.5 H20" stroke="#111" stroke-width="1.2"/></svg><svg style="position:absolute;left:3809px;top:713.8px;" width="26" height="26" viewBox="0 0 24 24"><path d="M4 19 H14 V5 H9 V14 H4 Z" fill="#333" stroke="#111"/><path d="M12 12 H20 L23 15 V23 H12 Z" fill="#fff" stroke="#111" stroke-width="1.6"/><path d="M15 18 H20 M15 20.5 H20" stroke="#111" stroke-width="1.2"/></svg><svg style="position:absolute;left:3809px;top:746px;" width="26" height="26" viewBox="0 0 24 24"><path d="M3 5 H9 V9 H15 V13 H21 V19 H3 Z" fill="#222" stroke="#111"/><path d="M5 7 H7 M5 11 H13 M5 15 H19" stroke="#ddd" stroke-width="1.2"/><path d="M12 12 H20 L23 15 V23 H12 Z" fill="#fff" stroke="#111" stroke-width="1.6"/><path d="M15 18 H20 M15 20.5 H20" stroke="#111" stroke-width="1.2"/></svg><svg style="position:absolute;left:3809px;top:778.2px;" width="26" height="26" viewBox="0 0 24 24"><path d="M4 19 L8 7 H14 L18 19 Z" fill="#fff" stroke="#111" stroke-width="1.8"/><path d="M12 12 H20 L23 15 V23 H12 Z" fill="#fff" stroke="#111" stroke-width="1.6"/><path d="M15 18 H20 M15 20.5 H20" stroke="#111" stroke-width="1.2"/></svg><svg style="position:absolute;left:3809px;top:810.4px;" width="26" height="26" viewBox="0 0 24 24"><path d="M12 3 V21 M3 12 H21" stroke="#111" stroke-width="2"/><circle cx="12" cy="12" r="3.4" fill="#fff" stroke="#111" stroke-width="1.6"/><path d="M12 12 H20 L23 15 V23 H12 Z" fill="#fff" stroke="#111" stroke-width="1.6"/><path d="M15 18 H20 M15 20.5 H20" stroke="#111" stroke-width="1.2"/></svg><svg style="position:absolute;left:3809px;top:842.6px;" width="26" height="26" viewBox="0 0 24 24"><path d="M12 3 V21 M3 12 H21" stroke="#111" stroke-width="2"/><circle cx="12" cy="12" r="3.4" fill="#fff" stroke="#111" stroke-width="1.6"/><path d="M12 12 H20 L23 15 V23 H12 Z" fill="#fff" stroke="#111" stroke-width="1.6"/><path d="M15 18 H20 M15 20.5 H20" stroke="#111" stroke-width="1.2"/></svg><svg style="position:absolute;left:3809px;top:874.8px;" width="26" height="26" viewBox="0 0 24 24"><path d="M5 20 V9 L9 4 L13 9 V20 Z" fill="#fff" stroke="#e01818" stroke-width="1.7"/><path d="M3 20 H17" stroke="#e01818" stroke-width="2"/><path d="M12 12 H20 L23 15 V23 H12 Z" fill="#fff" stroke="#e01818" stroke-width="1.6"/><path d="M15 18 H20 M15 20.5 H20" stroke="#e01818" stroke-width="1.2"/></svg><svg style="position:absolute;left:3809px;top:907px;" width="26" height="26" viewBox="0 0 24 24"><rect x="3" y="5" width="16" height="12" fill="#fff" stroke="#e01818" stroke-width="1.8"/><rect x="7" y="8" width="8" height="6" fill="#999" stroke="#e01818"/><path d="M12 12 H20 L23 15 V23 H12 Z" fill="#fff" stroke="#e01818" stroke-width="1.6"/><path d="M15 18 H20 M15 20.5 H20" stroke="#e01818" stroke-width="1.2"/></svg><svg style="position:absolute;left:3809px;top:939.2px;" width="26" height="26" viewBox="0 0 24 24"><rect x="3" y="5" width="16" height="12" fill="#fff" stroke="#111" stroke-width="1.8"/><rect x="7" y="8" width="8" height="6" fill="#999" stroke="#111"/><path d="M12 12 H20 L23 15 V23 H12 Z" fill="#fff" stroke="#111" stroke-width="1.6"/><path d="M15 18 H20 M15 20.5 H20" stroke="#111" stroke-width="1.2"/></svg><svg style="position:absolute;left:3809px;top:971.4px;" width="26" height="26" viewBox="0 0 24 24"><rect x="3" y="3" width="5" height="17" fill="#777" stroke="#111" stroke-width="1.3"/><path d="M10 18 L18 6" stroke="#111" stroke-width="2"/><path d="M12 12 H20 L23 15 V23 H12 Z" fill="#fff" stroke="#111" stroke-width="1.6"/><path d="M15 18 H20 M15 20.5 H20" stroke="#111" stroke-width="1.2"/></svg><div style="position:absolute;left:3810px;top:1000.6px;width:23px;height:1px;background:#9aa2b0;"></div><svg style="position:absolute;left:3809px;top:1007.6px;" width="26" height="26" viewBox="0 0 24 24"><path d="M5 20 V9 L9 4 L13 9 V20 Z" fill="#fff" stroke="#111" stroke-width="1.7"/><path d="M3 20 H17" stroke="#111" stroke-width="2"/><path d="M12 12 H20 L23 15 V23 H12 Z" fill="#fff" stroke="#111" stroke-width="1.6"/><path d="M15 18 H20 M15 20.5 H20" stroke="#111" stroke-width="1.2"/></svg><svg style="position:absolute;left:3809px;top:1039.8px;" width="26" height="26" viewBox="0 0 24 24"><path d="M3 19 V5 H8 V11 H14 V15 H19 V19 Z" fill="#fff" stroke="#111" stroke-width="1.8"/><path d="M12 12 H20 L23 15 V23 H12 Z" fill="#fff" stroke="#111" stroke-width="1.6"/><path d="M15 18 H20 M15 20.5 H20" stroke="#111" stroke-width="1.2"/></svg><div style="position:absolute;left:3810px;top:1069px;width:23px;height:1px;background:#9aa2b0;"></div><svg style="position:absolute;left:3809px;top:1076px;" width="26" height="26" viewBox="0 0 24 24"><rect x="3" y="5" width="16" height="12" fill="#fff" stroke="#111" stroke-width="1.8"/><rect x="7" y="8" width="8" height="6" fill="#999" stroke="#111"/><path d="M12 12 H20 L23 15 V23 H12 Z" fill="#fff" stroke="#111" stroke-width="1.6"/><path d="M15 18 H20 M15 20.5 H20" stroke="#111" stroke-width="1.2"/></svg><svg style="position:absolute;left:3809px;top:1108.2px;" width="26" height="26" viewBox="0 0 24 24"><path d="M3 8 L11 4 L19 8 L11 12 Z M3 8 V14 L11 18 L19 14 V8" fill="#bbb" stroke="#e01818" stroke-width="1.4"/><path d="M12 12 H20 L23 15 V23 H12 Z" fill="#fff" stroke="#e01818" stroke-width="1.6"/><path d="M15 18 H20 M15 20.5 H20" stroke="#e01818" stroke-width="1.2"/></svg><svg style="position:absolute;left:3809px;top:1140.4px;" width="26" height="26" viewBox="0 0 24 24"><path d="M3 5 H19 M5 5 V19 M9 5 V19 M13 5 V19 M17 5 V19" stroke="#e01818" stroke-width="2"/><path d="M12 12 H20 L23 15 V23 H12 Z" fill="#fff" stroke="#e01818" stroke-width="1.6"/><path d="M15 18 H20 M15 20.5 H20" stroke="#e01818" stroke-width="1.2"/></svg><svg style="position:absolute;left:3809px;top:1172.6px;" width="26" height="26" viewBox="0 0 24 24"><rect x="3" y="5" width="16" height="12" fill="#fff" stroke="#e01818" stroke-width="1.8"/><rect x="7" y="8" width="8" height="6" fill="#999" stroke="#e01818"/><path d="M12 12 H20 L23 15 V23 H12 Z" fill="#fff" stroke="#e01818" stroke-width="1.6"/><path d="M15 18 H20 M15 20.5 H20" stroke="#e01818" stroke-width="1.2"/></svg><div style="position:absolute;left:3804px;top:1250px;width:35px;height:522px;background:linear-gradient(90deg,#e6e9f0,#d6dbe4 60%,#c8ceda);border-radius:6px;"></div><div style="position:absolute;left:3804px;top:1755px;width:35px;height:17px;background:#b4bac6;border-radius:0 0 8px 8px;"></div><svg style="position:absolute;left:3826px;top:1759px;" width="10" height="9" viewBox="0 0 10 9"><path d="M1 0 V8 M4 0 L9 4 L4 8 Z" fill="#8a92a0" stroke="#8a92a0"/></svg><div style="position:absolute;left:3814px;top:1254.5px;width:2px;height:2px;background:#8b93a1;"></div><div style="position:absolute;left:3818px;top:1254.5px;width:2px;height:2px;background:#8b93a1;"></div><div style="position:absolute;left:3822px;top:1254.5px;width:2px;height:2px;background:#8b93a1;"></div><div style="position:absolute;left:3826px;top:1254.5px;width:2px;height:2px;background:#8b93a1;"></div><svg style="position:absolute;left:3809px;top:1258px;" width="26" height="26" viewBox="0 0 24 24"><path d="M3 5 H19 M5 5 V19 M9 5 V19 M13 5 V19 M17 5 V19" stroke="#111" stroke-width="2"/><path d="M12 12 H20 L23 15 V23 H12 Z" fill="#fff" stroke="#111" stroke-width="1.6"/><path d="M15 18 H20 M15 20.5 H20" stroke="#111" stroke-width="1.2"/></svg><svg style="position:absolute;left:3809px;top:1290.2px;" width="26" height="26" viewBox="0 0 24 24"><rect x="3" y="4" width="15" height="15" fill="#345a7c" stroke="#111"/><path d="M3 9 H18 M3 14 H18 M8 4 V19 M13 4 V19" stroke="#9fc0dc" stroke-width="1.1"/><path d="M12 12 H20 L23 15 V23 H12 Z" fill="#fff" stroke="#111" stroke-width="1.6"/><path d="M15 18 H20 M15 20.5 H20" stroke="#111" stroke-width="1.2"/></svg><svg style="position:absolute;left:3809px;top:1322.4px;" width="26" height="26" viewBox="0 0 24 24"><rect x="3" y="4" width="14" height="12" fill="#fff" stroke="#111" stroke-width="1.8"/><path d="M3 8 H17 M3 12 H17 M8 4 V16 M12 4 V16" stroke="#111" stroke-width="1.2"/><path d="M12 12 H20 L23 15 V23 H12 Z" fill="#fff" stroke="#111" stroke-width="1.6"/><path d="M15 18 H20 M15 20.5 H20" stroke="#111" stroke-width="1.2"/></svg><svg style="position:absolute;left:3809px;top:1354.6px;" width="26" height="26" viewBox="0 0 24 24"><path d="M3 5 H19 M5 5 V19 M9 5 V19 M13 5 V19 M17 5 V19" stroke="#111" stroke-width="2"/><path d="M12 12 H20 L23 15 V23 H12 Z" fill="#fff" stroke="#111" stroke-width="1.6"/><path d="M15 18 H20 M15 20.5 H20" stroke="#111" stroke-width="1.2"/></svg><svg style="position:absolute;left:3809px;top:1386.8px;" width="26" height="26" viewBox="0 0 24 24"><path d="M4 19 H14 V5 H9 V14 H4 Z" fill="#333" stroke="#111"/><path d="M12 12 H20 L23 15 V23 H12 Z" fill="#fff" stroke="#111" stroke-width="1.6"/><path d="M15 18 H20 M15 20.5 H20" stroke="#111" stroke-width="1.2"/></svg><svg style="position:absolute;left:3809px;top:1419px;" width="26" height="26" viewBox="0 0 24 24"><path d="M3 5 H9 V9 H15 V13 H21 V19 H3 Z" fill="#222" stroke="#e01818"/><path d="M5 7 H7 M5 11 H13 M5 15 H19" stroke="#ddd" stroke-width="1.2"/><path d="M12 12 H20 L23 15 V23 H12 Z" fill="#fff" stroke="#e01818" stroke-width="1.6"/><path d="M15 18 H20 M15 20.5 H20" stroke="#e01818" stroke-width="1.2"/></svg><svg style="position:absolute;left:3809px;top:1451.2px;" width="26" height="26" viewBox="0 0 24 24"><path d="M3 8 L11 4 L19 8 L11 12 Z M3 8 V14 L11 18 L19 14 V8" fill="#bbb" stroke="#e01818" stroke-width="1.4"/><path d="M12 12 H20 L23 15 V23 H12 Z" fill="#fff" stroke="#e01818" stroke-width="1.6"/><path d="M15 18 H20 M15 20.5 H20" stroke="#e01818" stroke-width="1.2"/></svg><svg style="position:absolute;left:3809px;top:1483.4px;" width="26" height="26" viewBox="0 0 24 24"><path d="M5 20 V9 L9 4 L13 9 V20 Z" fill="#fff" stroke="#111" stroke-width="1.7"/><path d="M3 20 H17" stroke="#111" stroke-width="2"/><path d="M12 12 H20 L23 15 V23 H12 Z" fill="#fff" stroke="#111" stroke-width="1.6"/><path d="M15 18 H20 M15 20.5 H20" stroke="#111" stroke-width="1.2"/></svg><svg style="position:absolute;left:3809px;top:1515.6px;" width="26" height="26" viewBox="0 0 24 24"><path d="M3 19 V5 H8 V11 H14 V15 H19 V19 Z" fill="#fff" stroke="#e01818" stroke-width="1.8"/><path d="M12 12 H20 L23 15 V23 H12 Z" fill="#fff" stroke="#e01818" stroke-width="1.6"/><path d="M15 18 H20 M15 20.5 H20" stroke="#e01818" stroke-width="1.2"/></svg><svg style="position:absolute;left:3809px;top:1547.8px;" width="26" height="26" viewBox="0 0 24 24"><path d="M3 5 H9 V9 H15 V13 H21 V19 H3 Z" fill="#222" stroke="#e01818"/><path d="M5 7 H7 M5 11 H13 M5 15 H19" stroke="#ddd" stroke-width="1.2"/><path d="M12 12 H20 L23 15 V23 H12 Z" fill="#fff" stroke="#e01818" stroke-width="1.6"/><path d="M15 18 H20 M15 20.5 H20" stroke="#e01818" stroke-width="1.2"/></svg><svg style="position:absolute;left:3809px;top:1580px;" width="26" height="26" viewBox="0 0 24 24"><path d="M4 19 L8 7 H14 L18 19 Z" fill="#fff" stroke="#111" stroke-width="1.8"/><path d="M12 12 H20 L23 15 V23 H12 Z" fill="#fff" stroke="#111" stroke-width="1.6"/><path d="M15 18 H20 M15 20.5 H20" stroke="#111" stroke-width="1.2"/></svg><svg style="position:absolute;left:3809px;top:1612.2px;" width="26" height="26" viewBox="0 0 24 24"><path d="M3 17 Q11 2 19 17 Z" fill="#fff" stroke="#111" stroke-width="1.7"/><path d="M7 17 L9 11 M11 17 V9 M15 17 L13 11" stroke="#111" stroke-width="1.2"/><path d="M12 12 H20 L23 15 V23 H12 Z" fill="#fff" stroke="#111" stroke-width="1.6"/><path d="M15 18 H20 M15 20.5 H20" stroke="#111" stroke-width="1.2"/></svg><svg style="position:absolute;left:3809px;top:1644.4px;" width="26" height="26" viewBox="0 0 24 24"><path d="M5 20 V9 L9 4 L13 9 V20 Z" fill="#fff" stroke="#111" stroke-width="1.7"/><path d="M3 20 H17" stroke="#111" stroke-width="2"/><path d="M12 12 H20 L23 15 V23 H12 Z" fill="#fff" stroke="#111" stroke-width="1.6"/><path d="M15 18 H20 M15 20.5 H20" stroke="#111" stroke-width="1.2"/></svg><svg style="position:absolute;left:3809px;top:1676.6px;" width="26" height="26" viewBox="0 0 24 24"><path d="M3 17 Q11 2 19 17 Z" fill="#fff" stroke="#111" stroke-width="1.7"/><path d="M7 17 L9 11 M11 17 V9 M15 17 L13 11" stroke="#111" stroke-width="1.2"/><path d="M12 12 H20 L23 15 V23 H12 Z" fill="#fff" stroke="#111" stroke-width="1.6"/><path d="M15 18 H20 M15 20.5 H20" stroke="#111" stroke-width="1.2"/></svg><svg style="position:absolute;left:3809px;top:1708.8px;" width="26" height="26" viewBox="0 0 24 24"><path d="M12 3 V21 M3 12 H21" stroke="#111" stroke-width="2"/><circle cx="12" cy="12" r="3.4" fill="#fff" stroke="#111" stroke-width="1.6"/><path d="M12 12 H20 L23 15 V23 H12 Z" fill="#fff" stroke="#111" stroke-width="1.6"/><path d="M15 18 H20 M15 20.5 H20" stroke="#111" stroke-width="1.2"/></svg><div style="position:absolute;left:290px;top:2009.5px;width:3408px;height:60px;background:#f0f0f0;"></div><span style="position:absolute;left:291.5px;top:2012.5px;font-size:11px;line-height:1;white-space:pre;color:#111;transform:scaleX(1.0447);transform-origin:0 0;text-shadow:0 0 .4px #111;">Enter x and y coordinates for displacement.</span><span style="position:absolute;left:291.5px;top:2025.5px;font-size:11px;line-height:1;white-space:pre;color:#111;transform:scaleX(1.0369);transform-origin:0 0;text-shadow:0 0 .4px #111;">Select basepoint.</span><span style="position:absolute;left:291.5px;top:2038.6px;font-size:11px;line-height:1;white-space:pre;color:#111;transform:scaleX(1.0163);transform-origin:0 0;text-shadow:0 0 .4px #111;">*Cancel*</span><span style="position:absolute;left:291.5px;top:2051.6px;font-size:11px;line-height:1;white-space:pre;color:#111;transform:scaleX(1.0114);transform-origin:0 0;text-shadow:0 0 .4px #111;">Command :</span><div style="position:absolute;left:0px;top:2070px;width:3840px;height:29px;background:#cfd5e0;"></div><div style="position:absolute;left:37px;top:2072px;width:3661px;height:28px;background:linear-gradient(#e0e2e7 0,#bfc4cd 30%,#aeb4be 36%,#b9bec7 100%);"></div><span style="position:absolute;left:44.0px;top:2077.3px;font-size:18px;line-height:1;white-space:pre;color:#2a3444;transform:scaleX(0.9214);transform-origin:0 0;">Empty</span><div style="position:absolute;left:295px;top:2073px;width:1px;height:26px;background:#8e95a2;"></div><div style="position:absolute;left:296px;top:2073px;width:1px;height:26px;background:#e4e7ec;"></div><div style="position:absolute;left:3470px;top:2073px;width:1px;height:26px;background:#8e95a2;"></div><div style="position:absolute;left:3471px;top:2073px;width:1px;height:26px;background:#e4e7ec;"></div><div style="position:absolute;left:3546.7px;top:2073px;width:1px;height:26px;background:#8e95a2;"></div><div style="position:absolute;left:3547.7px;top:2073px;width:1px;height:26px;background:#e4e7ec;"></div><div style="position:absolute;left:3622.6px;top:2073px;width:1px;height:26px;background:#8e95a2;"></div><div style="position:absolute;left:3623.6px;top:2073px;width:1px;height:26px;background:#e4e7ec;"></div><span style="position:absolute;left:3475.5px;top:2077.3px;font-size:18px;line-height:1;white-space:pre;color:#2a3444;transform:scaleX(1.0184);transform-origin:0 0;">kgf / m</span><span style="position:absolute;left:3555.8px;top:2077.3px;font-size:18px;line-height:1;white-space:pre;color:#2a3444;transform:scaleX(0.9327);transform-origin:0 0;">1 : 50</span><span style="position:absolute;left:3631.7px;top:2077.3px;font-size:18px;line-height:1;white-space:pre;color:#2a3444;transform:scaleX(0.9262);transform-origin:0 0;">% 32</span><div style="position:absolute;left:0px;top:2099px;width:3840px;height:3px;background:#111;"></div><div style="position:absolute;left:306.5px;top:252.5px;width:733.5px;height:537px;background:#fff;border:1px solid #b4b4b4;box-sizing:border-box;box-shadow:0 2px 14px rgba(0,0,0,.45),0 0 3px rgba(0,0,0,.3);"></div><span style="position:absolute;left:318.0px;top:267.5px;font-size:18px;line-height:1;white-space:pre;color:#a2a2a2;transform:scaleX(0.9660);transform-origin:0 0;">Visualization</span><svg style="position:absolute;left:1006px;top:266px;" width="17" height="17" viewBox="0 0 17 17"><path d="M1 1 L16 16 M16 1 L1 16" stroke="#666" stroke-width="1.2"/></svg><div style="position:absolute;left:308.5px;top:298.5px;width:147px;height:480px;background:#fff;border:1px solid #828790;box-sizing:border-box;"></div><div style="position:absolute;left:312.5px;top:581.5px;width:139px;height:36.5px;background:linear-gradient(#fccf7c 0,#fbbf5a 45%,#f7a737 55%,#fbc35c 85%,#fde0a0 100%);border:1px solid #e3a341;border-radius:3px;box-sizing:border-box;"></div><span style="position:absolute;left:320.5px;top:311.9px;font-size:17.5px;line-height:1;white-space:pre;color:#111;transform:scaleX(0.9542);transform-origin:0 0;">Analysis Model</span><span style="position:absolute;left:320.5px;top:351.8px;font-size:17.5px;line-height:1;white-space:pre;color:#111;">Deformation</span><span style="position:absolute;left:320.5px;top:391.7px;font-size:17.5px;line-height:1;white-space:pre;color:#111;transform:scaleX(0.9145);transform-origin:0 0;">Loads</span><span style="position:absolute;left:320.5px;top:431.7px;font-size:17.5px;line-height:1;white-space:pre;color:#111;transform:scaleX(0.9141);transform-origin:0 0;">Frame Results</span><span style="position:absolute;left:320.5px;top:471.6px;font-size:17.5px;line-height:1;white-space:pre;color:#111;transform:scaleX(0.8979);transform-origin:0 0;">Shearwall Res...</span><span style="position:absolute;left:320.5px;top:511.5px;font-size:17.5px;line-height:1;white-space:pre;color:#111;transform:scaleX(0.9374);transform-origin:0 0;">Purlin Results</span><span style="position:absolute;left:320.5px;top:551.5px;font-size:17.5px;line-height:1;white-space:pre;color:#111;transform:scaleX(0.9476);transform-origin:0 0;">Foundation Re...</span><span style="position:absolute;left:320.5px;top:591.4px;font-size:17.5px;line-height:1;white-space:pre;color:#5a5a5a;transform:scaleX(0.9106);transform-origin:0 0;">Shell Results</span><span style="position:absolute;left:320.5px;top:631.3px;font-size:17.5px;line-height:1;white-space:pre;color:#111;transform:scaleX(0.9318);transform-origin:0 0;">Concrete Desi...</span><span style="position:absolute;left:320.5px;top:671.3px;font-size:17.5px;line-height:1;white-space:pre;color:#111;transform:scaleX(0.9252);transform-origin:0 0;">Steel Design</span><div style="position:absolute;left:1036px;top:320px;width:1px;height:460px;background:#e4e4e4;"></div><div style="position:absolute;left:477.3px;top:313.2px;width:19.5px;height:19.5px;background:#fff;border:1px solid #333;box-sizing:border-box;"><svg style="position:absolute;left:1px;top:1px" width="17" height="17"><path d="M2.5 8.5 L6.5 13 L14.5 3.5" fill="none" stroke="#222" stroke-width="1.6"/></svg></div><span style="position:absolute;left:501.2px;top:314.4px;font-size:17px;line-height:1;white-space:pre;color:#111;transform:scaleX(0.9120);transform-origin:0 0;">Show mesh</span><div style="position:absolute;left:477.3px;top:341.6px;width:19.5px;height:19.5px;background:#fff;border:1px solid #333;box-sizing:border-box;"></div><span style="position:absolute;left:501.2px;top:342.8px;font-size:17px;line-height:1;white-space:pre;color:#111;transform:scaleX(0.9133);transform-origin:0 0;">Show local axis</span><div style="position:absolute;left:477.3px;top:370px;width:19.5px;height:19.5px;background:#fff;border:1px solid #c8c8c8;box-sizing:border-box;"></div><span style="position:absolute;left:501.2px;top:371.2px;font-size:17px;line-height:1;white-space:pre;color:#a0a0a0;transform:scaleX(0.9249);transform-origin:0 0;">Show rebar axis results</span><div style="position:absolute;left:477.3px;top:405.4px;width:19.5px;height:19.5px;background:#fff;border:1px solid #333;box-sizing:border-box;"></div><span style="position:absolute;left:501.2px;top:406.6px;font-size:17px;line-height:1;white-space:pre;color:#111;transform:scaleX(0.9156);transform-origin:0 0;">Manual scale factor :</span><div style="position:absolute;left:477.3px;top:443.2px;width:19.5px;height:19.5px;background:#fff;border:1px solid #333;box-sizing:border-box;"></div><span style="position:absolute;left:501.2px;top:444.4px;font-size:17px;line-height:1;white-space:pre;color:#111;transform:scaleX(0.9393);transform-origin:0 0;">Manual contour range :</span><div style="position:absolute;left:477.3px;top:481.5px;width:19.5px;height:19.5px;background:#fff;border:1px solid #333;box-sizing:border-box;"></div><span style="position:absolute;left:501.2px;top:482.7px;font-size:17px;line-height:1;white-space:pre;color:#111;transform:scaleX(0.9281);transform-origin:0 0;">Set existing rebar area :</span><div style="position:absolute;left:711px;top:313.2px;width:19.5px;height:19.5px;background:#fff;border:1px solid #333;box-sizing:border-box;"></div><span style="position:absolute;left:735.3px;top:314.4px;font-size:17px;line-height:1;white-space:pre;color:#111;transform:scaleX(0.9313);transform-origin:0 0;">Show signs only</span><div style="position:absolute;left:711px;top:341.6px;width:19.5px;height:19.5px;background:#fff;border:1px solid #333;box-sizing:border-box;"></div><span style="position:absolute;left:735.3px;top:342.8px;font-size:17px;line-height:1;white-space:pre;color:#111;transform:scaleX(0.9410);transform-origin:0 0;">Show minimums on envelope results</span><div style="position:absolute;left:711px;top:370px;width:19.5px;height:19.5px;background:#fff;border:1px solid #333;box-sizing:border-box;"></div><span style="position:absolute;left:735.3px;top:371.2px;font-size:17px;line-height:1;white-space:pre;color:#111;transform:scaleX(0.9073);transform-origin:0 0;">Use hotspot scale</span><div style="position:absolute;left:731.2px;top:398.7px;width:112.5px;height:32px;background:#fff;border:1px solid #b8b8b8;box-sizing:border-box;"></div><span style="position:absolute;left:738.7px;top:404.1px;font-size:16px;line-height:1;white-space:pre;color:#6d6d6d;">79</span><div style="position:absolute;left:731.2px;top:436.8px;width:112.5px;height:32.3px;background:#fff;border:1px solid #b8b8b8;box-sizing:border-box;"></div><span style="position:absolute;left:738.7px;top:442.2px;font-size:16px;line-height:1;white-space:pre;color:#6d6d6d;">0</span><span style="position:absolute;left:850.0px;top:444.2px;font-size:17px;line-height:1;white-space:pre;color:#111;">-&gt;</span><div style="position:absolute;left:875.2px;top:436.8px;width:112.5px;height:32.3px;background:#fff;border:1px solid #b8b8b8;box-sizing:border-box;"></div><span style="position:absolute;left:882.7px;top:442.2px;font-size:16px;line-height:1;white-space:pre;color:#6d6d6d;">0</span><span style="position:absolute;left:708.6px;top:481.0px;font-size:17px;line-height:1;white-space:pre;color:#111;">Ø</span><div style="position:absolute;left:731.2px;top:474.9px;width:112.5px;height:32.3px;background:#fff;border:1px solid #b8b8b8;box-sizing:border-box;"></div><span style="position:absolute;left:738.7px;top:480.3px;font-size:16px;line-height:1;white-space:pre;color:#6d6d6d;">0</span><span style="position:absolute;left:853.8px;top:483.9px;font-size:19px;line-height:1;white-space:pre;color:#111;">/</span><div style="position:absolute;left:875.2px;top:474.9px;width:112.5px;height:32.3px;background:#fff;border:1px solid #b8b8b8;box-sizing:border-box;"></div><span style="position:absolute;left:882.7px;top:480.3px;font-size:16px;line-height:1;white-space:pre;color:#6d6d6d;">0</span><div style="position:absolute;left:475.3px;top:522px;width:546.4px;height:67px;border:1px solid #dcdcdc;box-sizing:border-box;"></div><div style="position:absolute;left:481px;top:515px;width:100px;height:16px;background:#fff;"></div><span style="position:absolute;left:484.3px;top:514.8px;font-size:17px;line-height:1;white-space:pre;color:#111;transform:scaleX(0.9432);transform-origin:0 0;">Component :</span><div style="position:absolute;left:486px;top:546px;width:343.2px;height:26px;background:#e1e1e1;border:1px solid #adadad;box-sizing:border-box;"></div><span style="position:absolute;left:490.3px;top:551.8px;font-size:16.5px;line-height:1;white-space:pre;color:#111;transform:scaleX(0.9647);transform-origin:0 0;">Shell elements solved with structure</span><svg style="position:absolute;left:810.2px;top:555.5px;" width="12" height="8" viewBox="0 0 12 8"><path d="M1 1 L6 6 L11 1" fill="none" stroke="#333" stroke-width="1.3"/></svg><div style="position:absolute;left:835.3px;top:546px;width:179px;height:26px;background:#e1e1e1;border:1px solid #adadad;box-sizing:border-box;"></div><span style="position:absolute;left:839.6px;top:551.8px;font-size:16.5px;line-height:1;white-space:pre;color:#111;transform:scaleX(0.9691);transform-origin:0 0;">As 1 - Bottom Side</span><svg style="position:absolute;left:995.3px;top:555.5px;" width="12" height="8" viewBox="0 0 12 8"><path d="M1 1 L6 6 L11 1" fill="none" stroke="#333" stroke-width="1.3"/></svg><div style="position:absolute;left:472.4px;top:607.7px;width:548.5px;height:112.8px;border:1px solid #dcdcdc;box-sizing:border-box;"></div><div style="position:absolute;left:478px;top:600px;width:198px;height:16px;background:#fff;"></div><span style="position:absolute;left:481.4px;top:599.6px;font-size:17px;line-height:1;white-space:pre;color:#111;transform:scaleX(0.9417);transform-origin:0 0;">Case/combination to view :</span><div style="position:absolute;left:484px;top:624.2px;width:530.3px;height:26.5px;background:#e1e1e1;border:1px solid #adadad;box-sizing:border-box;"></div><span style="position:absolute;left:488.3px;top:630.0px;font-size:16.5px;line-height:1;white-space:pre;color:#111;transform:scaleX(0.9823);transform-origin:0 0;">G&#x27;+Q&#x27;+Ey-0.3Ex+0.3Ez</span><svg style="position:absolute;left:995.3px;top:633.7px;" width="12" height="8" viewBox="0 0 12 8"><path d="M1 1 L6 6 L11 1" fill="none" stroke="#333" stroke-width="1.3"/></svg><div style="position:absolute;left:867px;top:658.4px;width:146.5px;height:30.5px;background:#cccccc;border:1px solid #bfbfbf;box-sizing:border-box;"></div><span style="position:absolute;left:911.7px;top:665.4px;font-size:17px;line-height:1;white-space:pre;color:#838383;transform:scaleX(0.9301);transform-origin:0 0;">Animate</span><span style="position:absolute;left:484.3px;top:695.0px;font-size:17px;line-height:1;white-space:pre;color:#111;transform:scaleX(0.9143);transform-origin:0 0;">Eccentric solution</span></body></html>
